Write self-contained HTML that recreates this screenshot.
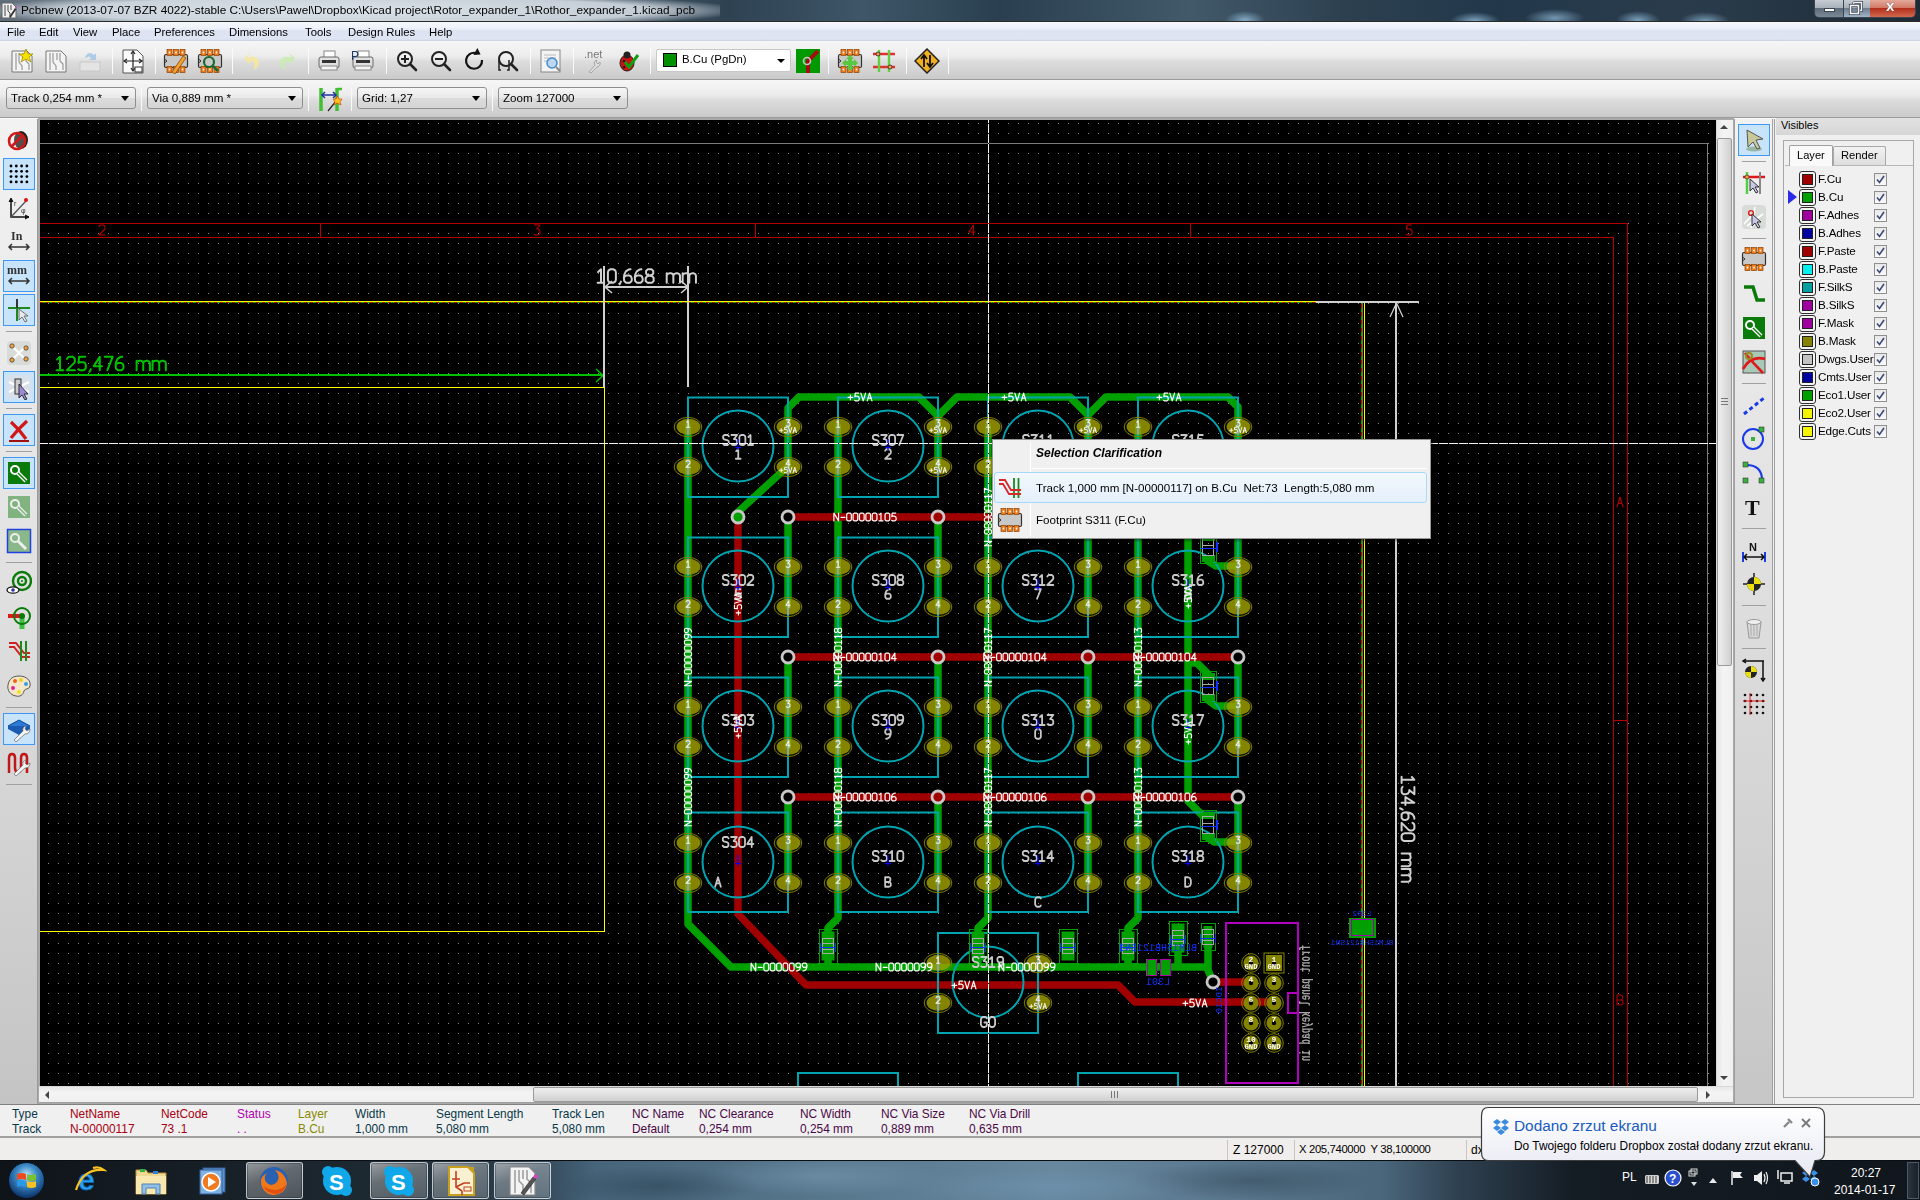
<!DOCTYPE html><html><head><meta charset="utf-8"><style>
*{margin:0;padding:0;box-sizing:border-box}
html,body{width:1920px;height:1200px;overflow:hidden;background:#f0f0f0;font-family:"Liberation Sans",sans-serif;}
.a{position:absolute}
#title{left:0;top:0;width:1920px;height:21px;background:radial-gradient(ellipse 20px 9px at 1245px 20px,rgba(150,190,220,0.8),transparent),radial-gradient(ellipse 25px 9px at 1475px 21px,rgba(150,190,220,0.8),transparent),radial-gradient(ellipse 30px 9px at 1555px 18px,rgba(150,190,220,0.7),transparent),radial-gradient(ellipse 22px 9px at 1638px 20px,rgba(150,190,220,0.75),transparent),radial-gradient(ellipse 25px 9px at 1705px 21px,rgba(150,190,220,0.7),transparent),linear-gradient(90deg,#5e6d79 0%,#8a98a3 10%,#62727e 25%,#2e4252 38%,#3e5668 45%,#2a4050 52%,#42596a 62%,#2c4050 70%,#22384a 78%,#2a3c4c 88%,#1e2b36 100%);}
#title .t{left:21px;top:3px;font-size:11.8px;color:#000;white-space:nowrap;letter-spacing:-0.1px}
#titleglow{left:0;top:0;width:720px;height:21px;background:radial-gradient(ellipse 54% 85% at 50% 50%,rgba(225,232,238,0.95) 0%,rgba(210,218,226,0.9) 75%,rgba(200,210,220,0) 100%)}
#menubar{left:0;top:21px;width:1920px;height:20px;background:linear-gradient(#f6f8fc 0%,#eef2fa 30%,#dde3f2 50%,#dfe5f3 90%,#c8d0e0 100%);border-top:1px solid #2a2a2a}
#menubar span{position:absolute;top:4px;font-size:11.3px;color:#000}
.tb{left:0;width:1920px;background:linear-gradient(#f6f6f6 0%,#ececec 40%,#dcdcdc 55%,#cacaca 100%);border-bottom:1px solid #9c9c9c}
.sep{position:absolute;width:1px;background:#b8b8b8;border-right:1px solid #fafafa}
.combo{position:absolute;height:22px;border:1px solid #8e8f8f;border-radius:3px;background:linear-gradient(#f6f6f6 0%,#e8e8e8 50%,#dcdcdc 51%,#d4d4d4 100%);font-size:11.6px;color:#000;padding:3px 0 0 4px;white-space:nowrap}
.combo .arr{position:absolute;right:6px;top:8px;width:0;height:0;border-left:4px solid transparent;border-right:4px solid transparent;border-top:5px solid #000}
#lefttb{left:0;top:119px;width:38px;height:985px;background:linear-gradient(#f2f2f2 0%,#e4e4e4 40%,#c4c4c4 100%);border-right:1px solid #9a9a9a}
.btnsel{position:absolute;left:3px;width:32px;height:32px;background:#c8e4fb;border:1px solid #3d99f5}
.hsep{position:absolute;height:1px;background:#a0a0a0}
#righttb{left:1734px;top:119px;width:39px;height:985px;background:linear-gradient(#f2f2f2 0%,#e2e2e2 40%,#c6c6c6 100%);border-left:1px solid #a0a0a0;border-right:1px solid #a0a0a0}
#visibles{left:1774px;top:119px;width:146px;height:986px;background:#f0f0f0;border-left:1px solid #a0a0a0}
#msgpanel{left:0;top:1104px;width:1920px;height:34px;background:#f0f0f0;border-top:1px solid #808080;border-bottom:2px solid #a0a0a0}
#msgpanel span{position:absolute;font-size:12.2px;white-space:nowrap}
#status{left:0;top:1138px;width:1920px;height:22px;background:#f0eeec}
#status span{position:absolute;top:4px;font-size:12.2px;white-space:nowrap;color:#000}
#taskbar{left:0;top:1160px;width:1920px;height:40px;background:linear-gradient(90deg,#0e1318 0%,#161e25 10%,#1e2a33 20%,#2c3e4c 27%,#46647a 31%,#5a7a90 45%,#6888a0 55%,#58768c 65%,#4a667a 72%,#2e4050 76%,#141c24 82%,#10161c 100%);border-top:1px solid #0a0e12}
.tbtn{position:absolute;top:1px;height:38px;border:1px solid rgba(230,240,250,0.7);border-radius:3px;box-shadow:inset 0 0 0 1px rgba(0,0,0,0.25);background:linear-gradient(160deg,rgba(255,255,255,0.55),rgba(255,255,255,0.32) 40%,rgba(255,255,255,0.22))}
</style></head><body>
<div id="title" class="a"></div>
<div id="titleglow" class="a"></div>
<div class="a" style="left:0;top:0;width:1920px;height:21px"><div class="a t" style="left:21px;top:3px;font-size:11.8px;white-space:nowrap">Pcbnew (2013-07-07 BZR 4022)-stable C:\Users\Pawel\Dropbox\Kicad project\Rotor_expander_1\Rothor_expander_1.kicad_pcb</div></div>
<svg class="a" style="left:1px;top:2px" width="16" height="17" viewBox="0 0 16 17"><path d="M1 1H11L15 5V16H1Z" fill="#f0f0f0" stroke="#666"/><path d="M4 3V14M7 3V9L9 11V14M10 3V8" fill="none" stroke="#444" stroke-width="1"/><path d="M8 15L14 6L15.5 7L9.5 16Z" fill="#333"/><path d="M14 6L15 4L16 5L15.5 7Z" fill="#e040c0"/></svg>
<div class="a" style="left:1814px;top:0;width:102px;height:18px;border:1px solid #3a4550;border-top:none;border-radius:0 0 5px 5px;overflow:hidden"><div class="a" style="left:0;top:0;width:28px;height:17px;background:linear-gradient(#c7ccd2,#a9b2bb 45%,#5f6c78 50%,#7b8996)"></div><div class="a" style="left:28px;top:0;width:1px;height:17px;background:#3a4550"></div><div class="a" style="left:29px;top:0;width:26px;height:17px;background:linear-gradient(#c7ccd2,#a9b2bb 45%,#6f7f8e 50%,#9fb4c8)"></div><div class="a" style="left:55px;top:0;width:47px;height:17px;background:linear-gradient(#e3a89a,#d27a66 45%,#b5301c 50%,#d0694f)"></div><div class="a" style="left:9px;top:8px;width:11px;height:4px;background:#fff;border:1px solid #3b4754"></div><svg class="a" style="left:33px;top:1px" width="16" height="14" viewBox="0 0 16 14"><path d="M5.5 1.5H13.5V9.5H11.5M5.5 1.5V4.5" fill="none" stroke="#3b4754" stroke-width="3"/><path d="M5.5 1.5H13.5V9.5H11.5M5.5 1.5V4.5" fill="none" stroke="#f4f4f4" stroke-width="1.4"/><rect x="2.5" y="4.5" width="8" height="8" fill="none" stroke="#3b4754" stroke-width="3.2"/><rect x="2.5" y="4.5" width="8" height="8" fill="none" stroke="#f4f4f4" stroke-width="1.6"/></svg><div class="a" style="left:71px;top:-3px;font-size:15px;font-weight:bold;color:#fff;text-shadow:0 0 1px #333">x</div></div>
<div id="menubar" class="a">
<span style="left:7px">File</span>
<span style="left:39px">Edit</span>
<span style="left:73px">View</span>
<span style="left:112px">Place</span>
<span style="left:154px">Preferences</span>
<span style="left:229px">Dimensions</span>
<span style="left:305px">Tools</span>
<span style="left:348px">Design Rules</span>
<span style="left:429px">Help</span>
</div>
<div class="a tb" style="top:41px;height:39px"></div>
<div class="a tb" style="top:80px;height:38px"></div><div class="a" style="left:0;top:118px;width:1920px;height:1px;background:#f8f8f8"></div>
<div class="a" style="left:38px;top:118px;width:1696px;height:986px;background:#a9a9a9"></div>
<svg class="a" style="left:40px;top:120px" width="1676" height="966" viewBox="40 120 1676 966">
<defs><pattern id="grid" patternUnits="userSpaceOnUse" x="48" y="123" width="10" height="10"><rect x="0" y="0" width="1" height="1" fill="#868686"/></pattern><pattern id="rgh" patternUnits="userSpaceOnUse" x="40" y="302" width="6" height="1"><rect x="0" y="0" width="3" height="1" fill="#c00000"/><rect x="3" y="0" width="3" height="1" fill="#00b000"/></pattern><pattern id="rgv" patternUnits="userSpaceOnUse" x="1361" y="300" width="1" height="8"><rect x="0" y="0" width="1" height="4" fill="#00b000"/><rect x="0" y="4" width="1" height="4" fill="#c00000"/></pattern></defs>
<rect x="40" y="120" width="1676" height="966" fill="#000"/>
<rect x="40" y="120" width="1676" height="966" fill="url(#grid)"/>
<path shape-rendering="crispEdges" d="M40 143.5H1707.5V1086" fill="none" stroke="#7c7c7c" stroke-width="1"/>
<path shape-rendering="crispEdges" d="M40 223.5H1627.5V1086M40 237.5H1613.5V1086" fill="none" stroke="#b40000" stroke-width="1"/>
<path shape-rendering="crispEdges" d="M320.5 223V237" stroke="#b40000" stroke-width="1"/>
<path shape-rendering="crispEdges" d="M755.5 223V237" stroke="#b40000" stroke-width="1"/>
<path shape-rendering="crispEdges" d="M1190.5 223V237" stroke="#b40000" stroke-width="1"/>
<path shape-rendering="crispEdges" d="M1613 720.5H1627" stroke="#b40000" stroke-width="1"/>
<path transform="translate(102 230) scale(1.0 1.0) translate(-3.00 -5)" d="M0.00 1.50 L1.00 0.20 L2.00 0.00 L4.50 0.00 L5.70 1.00 L6.00 2.20 L6.00 3.50 L5.50 4.50 L0.00 10.00 L6.00 10.00" fill="none" stroke="#b40000" stroke-width="1.100" stroke-linecap="round" stroke-linejoin="round" />
<path transform="translate(537 230) scale(1.0 1.0) translate(-3.00 -5)" d="M0.30 0.00 L6.00 0.00 L2.80 4.00 L4.00 4.00 L5.50 5.00 L6.00 6.50 L6.00 8.50 L5.00 9.70 L4.00 10.00 L1.50 10.00 L0.30 9.30" fill="none" stroke="#b40000" stroke-width="1.100" stroke-linecap="round" stroke-linejoin="round" />
<path transform="translate(972 230) scale(1.0 1.0) translate(-3.10 -5)" d="M4.50 10.00 L4.50 0.00 L0.00 7.00 L6.20 7.00" fill="none" stroke="#b40000" stroke-width="1.100" stroke-linecap="round" stroke-linejoin="round" />
<path transform="translate(1409 230) scale(1.0 1.0) translate(-3.00 -5)" d="M5.50 0.00 L1.00 0.00 L0.50 4.50 L1.50 4.00 L4.00 4.00 L5.50 4.80 L6.00 6.20 L6.00 8.50 L5.00 9.70 L4.00 10.00 L1.50 10.00 L0.30 9.30" fill="none" stroke="#b40000" stroke-width="1.100" stroke-linecap="round" stroke-linejoin="round" />
<path transform="translate(1620 502) scale(1.0 1.0) translate(-3.00 -5)" d="M0.00 10.00 L3.00 0.00 L6.00 10.00 M1.10 6.50 L4.90 6.50" fill="none" stroke="#b40000" stroke-width="1.100" stroke-linecap="round" stroke-linejoin="round" />
<path transform="translate(1620 1000) scale(1.0 1.0) translate(-3.00 -5)" d="M0.00 5.00 L4.00 5.00 L5.50 5.80 L6.00 7.00 L6.00 8.50 L5.00 9.70 L4.00 10.00 L0.00 10.00 L0.00 0.00 L4.00 0.00 L5.00 0.50 L5.50 1.50 L5.50 3.30 L5.00 4.30 L4.00 5.00" fill="none" stroke="#b40000" stroke-width="1.100" stroke-linecap="round" stroke-linejoin="round" />
<rect shape-rendering="crispEdges" x="40" y="301" width="1324" height="1" fill="#ffff00"/>
<rect shape-rendering="crispEdges" x="40" y="302" width="1321" height="1" fill="url(#rgh)"/>
<rect shape-rendering="crispEdges" x="1364" y="301" width="1" height="785" fill="#ffff00"/>
<rect shape-rendering="crispEdges" x="1362" y="302" width="1" height="784" fill="#808000"/>
<rect shape-rendering="crispEdges" x="1361" y="303" width="1" height="783" fill="url(#rgv)"/>
<path shape-rendering="crispEdges" d="M40 387.5H604.5V931.5H40" fill="none" stroke="#ffff00" stroke-width="1.2"/>
<path shape-rendering="crispEdges" d="M40 375H603" stroke="#00c000" stroke-width="2"/>
<path d="M596 369L603 375.5L596 382" fill="none" stroke="#00c000" stroke-width="1.5"/>
<path transform="translate(56 363.5) scale(1.33 1.33) translate(0.00 -5)" d="M0.80 2.00 L3.00 0.00 L3.00 10.00 M0.50 10.00 L5.50 10.00 M8.20 1.50 L9.20 0.20 L10.20 0.00 L12.70 0.00 L13.90 1.00 L14.20 2.20 L14.20 3.50 L13.70 4.50 L8.20 10.00 L14.20 10.00 M21.90 0.00 L17.40 0.00 L16.90 4.50 L17.90 4.00 L20.40 4.00 L21.90 4.80 L22.40 6.20 L22.40 8.50 L21.40 9.70 L20.40 10.00 L17.90 10.00 L16.70 9.30 M26.20 9.20 L25.20 11.20 M32.90 10.00 L32.90 0.00 L28.40 7.00 L34.60 7.00 M36.60 0.00 L42.60 0.00 L38.60 10.00 M49.80 0.00 L48.30 0.20 L46.30 1.50 L45.10 4.00 L44.80 6.50 L45.10 8.80 L46.30 10.00 L49.30 10.00 L50.60 8.80 L50.80 7.20 L50.30 5.50 L49.10 4.60 L46.60 4.60 L45.30 5.50 L44.80 6.50 M60.60 10.00 L60.60 3.00 M60.60 4.30 L61.80 3.20 L62.80 3.00 L64.10 3.00 L65.10 3.50 L65.60 4.50 L65.60 10.00 M65.60 4.50 L66.40 3.40 L67.60 3.00 L68.90 3.00 L70.10 3.60 L70.60 4.80 L70.60 10.00 M72.60 10.00 L72.60 3.00 M72.60 4.30 L73.80 3.20 L74.80 3.00 L76.10 3.00 L77.10 3.50 L77.60 4.50 L77.60 10.00 M77.60 4.50 L78.40 3.40 L79.60 3.00 L80.90 3.00 L82.10 3.60 L82.60 4.80 L82.60 10.00" fill="none" stroke="#00c000" stroke-width="1.504" stroke-linecap="round" stroke-linejoin="round" />
<path shape-rendering="crispEdges" d="M604 266V387M688 266V387M605 287H688" fill="none" stroke="#d0d0d0" stroke-width="2"/>
<path d="M612 281L605 287L612 293M681 281L688 287L681 293" fill="none" stroke="#d0d0d0" stroke-width="1.6"/>
<path transform="translate(597 276) scale(1.33 1.33) translate(0.00 -5)" d="M0.80 2.00 L3.00 0.00 L3.00 10.00 M0.50 10.00 L5.50 10.00 M10.00 0.00 L12.40 0.00 L13.70 0.80 L14.20 2.20 L14.20 7.80 L13.70 9.20 L12.40 10.00 L10.00 10.00 L8.70 9.20 L8.20 7.80 L8.20 2.20 L8.70 0.80 L10.00 0.00 M18.00 9.20 L17.00 11.20 M25.20 0.00 L23.70 0.20 L21.70 1.50 L20.50 4.00 L20.20 6.50 L20.50 8.80 L21.70 10.00 L24.70 10.00 L26.00 8.80 L26.20 7.20 L25.70 5.50 L24.50 4.60 L22.00 4.60 L20.70 5.50 L20.20 6.50 M33.40 0.00 L31.90 0.20 L29.90 1.50 L28.70 4.00 L28.40 6.50 L28.70 8.80 L29.90 10.00 L32.90 10.00 L34.20 8.80 L34.40 7.20 L33.90 5.50 L32.70 4.60 L30.20 4.60 L28.90 5.50 L28.40 6.50 M39.60 4.60 L37.60 4.00 L36.90 3.00 L36.90 1.20 L38.10 0.00 L41.10 0.00 L42.30 1.20 L42.30 3.00 L41.60 4.00 L39.60 4.60 L37.60 5.30 L36.60 6.50 L36.60 8.80 L37.80 10.00 L41.40 10.00 L42.60 8.80 L42.60 6.50 L41.60 5.30 L39.60 4.60 M52.40 10.00 L52.40 3.00 M52.40 4.30 L53.60 3.20 L54.60 3.00 L55.90 3.00 L56.90 3.50 L57.40 4.50 L57.40 10.00 M57.40 4.50 L58.20 3.40 L59.40 3.00 L60.70 3.00 L61.90 3.60 L62.40 4.80 L62.40 10.00 M64.40 10.00 L64.40 3.00 M64.40 4.30 L65.60 3.20 L66.60 3.00 L67.90 3.00 L68.90 3.50 L69.40 4.50 L69.40 10.00 M69.40 4.50 L70.20 3.40 L71.40 3.00 L72.70 3.00 L73.90 3.60 L74.40 4.80 L74.40 10.00" fill="none" stroke="#d0d0d0" stroke-width="1.504" stroke-linecap="round" stroke-linejoin="round" />
<path shape-rendering="crispEdges" d="M1316 301.5H1419M1396 302V1086" fill="none" stroke="#d0d0d0" stroke-width="2"/>
<path d="M1390 317L1396.5 303L1403 317" fill="none" stroke="#d0d0d0" stroke-width="1.3"/>
<path transform="translate(1408 776) rotate(90) scale(1.28 1.28) translate(0.00 -5)" d="M0.80 2.00 L3.00 0.00 L3.00 10.00 M0.50 10.00 L5.50 10.00 M8.50 0.00 L14.20 0.00 L11.00 4.00 L12.20 4.00 L13.70 5.00 L14.20 6.50 L14.20 8.50 L13.20 9.70 L12.20 10.00 L9.70 10.00 L8.50 9.30 M20.90 10.00 L20.90 0.00 L16.40 7.00 L22.60 7.00 M26.20 9.20 L25.20 11.20 M33.40 0.00 L31.90 0.20 L29.90 1.50 L28.70 4.00 L28.40 6.50 L28.70 8.80 L29.90 10.00 L32.90 10.00 L34.20 8.80 L34.40 7.20 L33.90 5.50 L32.70 4.60 L30.20 4.60 L28.90 5.50 L28.40 6.50 M36.60 1.50 L37.60 0.20 L38.60 0.00 L41.10 0.00 L42.30 1.00 L42.60 2.20 L42.60 3.50 L42.10 4.50 L36.60 10.00 L42.60 10.00 M46.60 0.00 L49.00 0.00 L50.30 0.80 L50.80 2.20 L50.80 7.80 L50.30 9.20 L49.00 10.00 L46.60 10.00 L45.30 9.20 L44.80 7.80 L44.80 2.20 L45.30 0.80 L46.60 0.00 M60.60 10.00 L60.60 3.00 M60.60 4.30 L61.80 3.20 L62.80 3.00 L64.10 3.00 L65.10 3.50 L65.60 4.50 L65.60 10.00 M65.60 4.50 L66.40 3.40 L67.60 3.00 L68.90 3.00 L70.10 3.60 L70.60 4.80 L70.60 10.00 M72.60 10.00 L72.60 3.00 M72.60 4.30 L73.80 3.20 L74.80 3.00 L76.10 3.00 L77.10 3.50 L77.60 4.50 L77.60 10.00 M77.60 4.50 L78.40 3.40 L79.60 3.00 L80.90 3.00 L82.10 3.60 L82.60 4.80 L82.60 10.00" fill="none" stroke="#d0d0d0" stroke-width="1.562" stroke-linecap="round" stroke-linejoin="round" />
<path d="M688 426V924L731 967H1208 M788 466V408L799 397H919L938 416L957 397H1070L1088 415L1106 397H1228L1238 407V466 M938 416V466M1088 415V466 M786 468L738 512V517 M788 517V606M788 657V746M788 797V882 M938 517V606M938 657V746M938 797V882 M1088 517V606M1088 657V746M1088 797V882 M1238 517V606M1238 657V746M1238 797V882 M838 426V918L828 928V967 M988 426V918L978 928V967 M1138 426V918L1128 928V967 M1188 520V801L1202 815 M1188 523H1197L1208 534M1208 561L1216 566H1238 M1188 663H1197L1208 674M1208 700L1216 706H1238 M1208 838L1214 842H1238 M1178 938V967M1208 938V970L1213 982" fill="none" stroke="#00a000" stroke-width="7.5" stroke-linecap="round" stroke-linejoin="round"/>
<path d="M738 517V914L806 985H1118L1135 1002H1273 M788 517H1238 M788 657H1238 M788 797H1238 M1213 982H1250" fill="none" stroke="#a00000" stroke-width="7.5" stroke-linecap="round" stroke-linejoin="round"/>
<path d="M688 397.5H788V497H688Z M773.5 446A35.5 35.5 0 1 1 702.5 446A35.5 35.5 0 1 1 773.5 446Z M688 537.5H788V637H688Z M773.5 586A35.5 35.5 0 1 1 702.5 586A35.5 35.5 0 1 1 773.5 586Z M688 677.5H788V777H688Z M773.5 726A35.5 35.5 0 1 1 702.5 726A35.5 35.5 0 1 1 773.5 726Z M688 812.5H788V912H688Z M773.5 862A35.5 35.5 0 1 1 702.5 862A35.5 35.5 0 1 1 773.5 862Z M838 397.5H938V497H838Z M923.5 446A35.5 35.5 0 1 1 852.5 446A35.5 35.5 0 1 1 923.5 446Z M838 537.5H938V637H838Z M923.5 586A35.5 35.5 0 1 1 852.5 586A35.5 35.5 0 1 1 923.5 586Z M838 677.5H938V777H838Z M923.5 726A35.5 35.5 0 1 1 852.5 726A35.5 35.5 0 1 1 923.5 726Z M838 812.5H938V912H838Z M923.5 862A35.5 35.5 0 1 1 852.5 862A35.5 35.5 0 1 1 923.5 862Z M988 397.5H1088V497H988Z M1073.5 446A35.5 35.5 0 1 1 1002.5 446A35.5 35.5 0 1 1 1073.5 446Z M988 537.5H1088V637H988Z M1073.5 586A35.5 35.5 0 1 1 1002.5 586A35.5 35.5 0 1 1 1073.5 586Z M988 677.5H1088V777H988Z M1073.5 726A35.5 35.5 0 1 1 1002.5 726A35.5 35.5 0 1 1 1073.5 726Z M988 812.5H1088V912H988Z M1073.5 862A35.5 35.5 0 1 1 1002.5 862A35.5 35.5 0 1 1 1073.5 862Z M1138 397.5H1238V497H1138Z M1223.5 446A35.5 35.5 0 1 1 1152.5 446A35.5 35.5 0 1 1 1223.5 446Z M1138 537.5H1238V637H1138Z M1223.5 586A35.5 35.5 0 1 1 1152.5 586A35.5 35.5 0 1 1 1223.5 586Z M1138 677.5H1238V777H1138Z M1223.5 726A35.5 35.5 0 1 1 1152.5 726A35.5 35.5 0 1 1 1223.5 726Z M1138 812.5H1238V912H1138Z M1223.5 862A35.5 35.5 0 1 1 1152.5 862A35.5 35.5 0 1 1 1223.5 862Z M938 933H1038V1033H938Z M1023.5 982A35.5 35.5 0 1 1 952.5 982A35.5 35.5 0 1 1 1023.5 982Z M798 1086V1073H898V1086M1078 1086V1073H1178V1086" fill="none" stroke="#00a4b0" stroke-width="2"/>
<g fill="#848400" style="mix-blend-mode:lighten"><ellipse cx="688.5" cy="426.8" rx="12" ry="8"/><ellipse cx="688.5" cy="466.8" rx="12" ry="8"/><ellipse cx="788.5" cy="426.8" rx="12" ry="8"/><ellipse cx="788.5" cy="466.8" rx="12" ry="8"/><ellipse cx="688.5" cy="566.8" rx="12" ry="8"/><ellipse cx="688.5" cy="606.8" rx="12" ry="8"/><ellipse cx="788.5" cy="566.8" rx="12" ry="8"/><ellipse cx="788.5" cy="606.8" rx="12" ry="8"/><ellipse cx="688.5" cy="706.8" rx="12" ry="8"/><ellipse cx="688.5" cy="746.8" rx="12" ry="8"/><ellipse cx="788.5" cy="706.8" rx="12" ry="8"/><ellipse cx="788.5" cy="746.8" rx="12" ry="8"/><ellipse cx="688.5" cy="842.8" rx="12" ry="8"/><ellipse cx="688.5" cy="882.8" rx="12" ry="8"/><ellipse cx="788.5" cy="842.8" rx="12" ry="8"/><ellipse cx="788.5" cy="882.8" rx="12" ry="8"/><ellipse cx="838.5" cy="426.8" rx="12" ry="8"/><ellipse cx="838.5" cy="466.8" rx="12" ry="8"/><ellipse cx="938.5" cy="426.8" rx="12" ry="8"/><ellipse cx="938.5" cy="466.8" rx="12" ry="8"/><ellipse cx="838.5" cy="566.8" rx="12" ry="8"/><ellipse cx="838.5" cy="606.8" rx="12" ry="8"/><ellipse cx="938.5" cy="566.8" rx="12" ry="8"/><ellipse cx="938.5" cy="606.8" rx="12" ry="8"/><ellipse cx="838.5" cy="706.8" rx="12" ry="8"/><ellipse cx="838.5" cy="746.8" rx="12" ry="8"/><ellipse cx="938.5" cy="706.8" rx="12" ry="8"/><ellipse cx="938.5" cy="746.8" rx="12" ry="8"/><ellipse cx="838.5" cy="842.8" rx="12" ry="8"/><ellipse cx="838.5" cy="882.8" rx="12" ry="8"/><ellipse cx="938.5" cy="842.8" rx="12" ry="8"/><ellipse cx="938.5" cy="882.8" rx="12" ry="8"/><ellipse cx="988.5" cy="426.8" rx="12" ry="8"/><ellipse cx="988.5" cy="466.8" rx="12" ry="8"/><ellipse cx="1088.5" cy="426.8" rx="12" ry="8"/><ellipse cx="1088.5" cy="466.8" rx="12" ry="8"/><ellipse cx="988.5" cy="566.8" rx="12" ry="8"/><ellipse cx="988.5" cy="606.8" rx="12" ry="8"/><ellipse cx="1088.5" cy="566.8" rx="12" ry="8"/><ellipse cx="1088.5" cy="606.8" rx="12" ry="8"/><ellipse cx="988.5" cy="706.8" rx="12" ry="8"/><ellipse cx="988.5" cy="746.8" rx="12" ry="8"/><ellipse cx="1088.5" cy="706.8" rx="12" ry="8"/><ellipse cx="1088.5" cy="746.8" rx="12" ry="8"/><ellipse cx="988.5" cy="842.8" rx="12" ry="8"/><ellipse cx="988.5" cy="882.8" rx="12" ry="8"/><ellipse cx="1088.5" cy="842.8" rx="12" ry="8"/><ellipse cx="1088.5" cy="882.8" rx="12" ry="8"/><ellipse cx="1138.5" cy="426.8" rx="12" ry="8"/><ellipse cx="1138.5" cy="466.8" rx="12" ry="8"/><ellipse cx="1238.5" cy="426.8" rx="12" ry="8"/><ellipse cx="1238.5" cy="466.8" rx="12" ry="8"/><ellipse cx="1138.5" cy="566.8" rx="12" ry="8"/><ellipse cx="1138.5" cy="606.8" rx="12" ry="8"/><ellipse cx="1238.5" cy="566.8" rx="12" ry="8"/><ellipse cx="1238.5" cy="606.8" rx="12" ry="8"/><ellipse cx="1138.5" cy="706.8" rx="12" ry="8"/><ellipse cx="1138.5" cy="746.8" rx="12" ry="8"/><ellipse cx="1238.5" cy="706.8" rx="12" ry="8"/><ellipse cx="1238.5" cy="746.8" rx="12" ry="8"/><ellipse cx="1138.5" cy="842.8" rx="12" ry="8"/><ellipse cx="1138.5" cy="882.8" rx="12" ry="8"/><ellipse cx="1238.5" cy="842.8" rx="12" ry="8"/><ellipse cx="1238.5" cy="882.8" rx="12" ry="8"/><ellipse cx="938.5" cy="962.8" rx="12" ry="8"/><ellipse cx="938.5" cy="1002.8" rx="12" ry="8"/><ellipse cx="1038.5" cy="962.8" rx="12" ry="8"/><ellipse cx="1038.5" cy="1002.8" rx="12" ry="8"/></g>
<g fill="none" stroke="#848400" stroke-width="1"><ellipse cx="688" cy="427" rx="13.8" ry="9.6"/><ellipse cx="688" cy="467" rx="13.8" ry="9.6"/><ellipse cx="788" cy="427" rx="13.8" ry="9.6"/><ellipse cx="788" cy="467" rx="13.8" ry="9.6"/><ellipse cx="688" cy="567" rx="13.8" ry="9.6"/><ellipse cx="688" cy="607" rx="13.8" ry="9.6"/><ellipse cx="788" cy="567" rx="13.8" ry="9.6"/><ellipse cx="788" cy="607" rx="13.8" ry="9.6"/><ellipse cx="688" cy="707" rx="13.8" ry="9.6"/><ellipse cx="688" cy="747" rx="13.8" ry="9.6"/><ellipse cx="788" cy="707" rx="13.8" ry="9.6"/><ellipse cx="788" cy="747" rx="13.8" ry="9.6"/><ellipse cx="688" cy="843" rx="13.8" ry="9.6"/><ellipse cx="688" cy="883" rx="13.8" ry="9.6"/><ellipse cx="788" cy="843" rx="13.8" ry="9.6"/><ellipse cx="788" cy="883" rx="13.8" ry="9.6"/><ellipse cx="838" cy="427" rx="13.8" ry="9.6"/><ellipse cx="838" cy="467" rx="13.8" ry="9.6"/><ellipse cx="938" cy="427" rx="13.8" ry="9.6"/><ellipse cx="938" cy="467" rx="13.8" ry="9.6"/><ellipse cx="838" cy="567" rx="13.8" ry="9.6"/><ellipse cx="838" cy="607" rx="13.8" ry="9.6"/><ellipse cx="938" cy="567" rx="13.8" ry="9.6"/><ellipse cx="938" cy="607" rx="13.8" ry="9.6"/><ellipse cx="838" cy="707" rx="13.8" ry="9.6"/><ellipse cx="838" cy="747" rx="13.8" ry="9.6"/><ellipse cx="938" cy="707" rx="13.8" ry="9.6"/><ellipse cx="938" cy="747" rx="13.8" ry="9.6"/><ellipse cx="838" cy="843" rx="13.8" ry="9.6"/><ellipse cx="838" cy="883" rx="13.8" ry="9.6"/><ellipse cx="938" cy="843" rx="13.8" ry="9.6"/><ellipse cx="938" cy="883" rx="13.8" ry="9.6"/><ellipse cx="988" cy="427" rx="13.8" ry="9.6"/><ellipse cx="988" cy="467" rx="13.8" ry="9.6"/><ellipse cx="1088" cy="427" rx="13.8" ry="9.6"/><ellipse cx="1088" cy="467" rx="13.8" ry="9.6"/><ellipse cx="988" cy="567" rx="13.8" ry="9.6"/><ellipse cx="988" cy="607" rx="13.8" ry="9.6"/><ellipse cx="1088" cy="567" rx="13.8" ry="9.6"/><ellipse cx="1088" cy="607" rx="13.8" ry="9.6"/><ellipse cx="988" cy="707" rx="13.8" ry="9.6"/><ellipse cx="988" cy="747" rx="13.8" ry="9.6"/><ellipse cx="1088" cy="707" rx="13.8" ry="9.6"/><ellipse cx="1088" cy="747" rx="13.8" ry="9.6"/><ellipse cx="988" cy="843" rx="13.8" ry="9.6"/><ellipse cx="988" cy="883" rx="13.8" ry="9.6"/><ellipse cx="1088" cy="843" rx="13.8" ry="9.6"/><ellipse cx="1088" cy="883" rx="13.8" ry="9.6"/><ellipse cx="1138" cy="427" rx="13.8" ry="9.6"/><ellipse cx="1138" cy="467" rx="13.8" ry="9.6"/><ellipse cx="1238" cy="427" rx="13.8" ry="9.6"/><ellipse cx="1238" cy="467" rx="13.8" ry="9.6"/><ellipse cx="1138" cy="567" rx="13.8" ry="9.6"/><ellipse cx="1138" cy="607" rx="13.8" ry="9.6"/><ellipse cx="1238" cy="567" rx="13.8" ry="9.6"/><ellipse cx="1238" cy="607" rx="13.8" ry="9.6"/><ellipse cx="1138" cy="707" rx="13.8" ry="9.6"/><ellipse cx="1138" cy="747" rx="13.8" ry="9.6"/><ellipse cx="1238" cy="707" rx="13.8" ry="9.6"/><ellipse cx="1238" cy="747" rx="13.8" ry="9.6"/><ellipse cx="1138" cy="843" rx="13.8" ry="9.6"/><ellipse cx="1138" cy="883" rx="13.8" ry="9.6"/><ellipse cx="1238" cy="843" rx="13.8" ry="9.6"/><ellipse cx="1238" cy="883" rx="13.8" ry="9.6"/><ellipse cx="938" cy="963" rx="13.8" ry="9.6"/><ellipse cx="938" cy="1003" rx="13.8" ry="9.6"/><ellipse cx="1038" cy="963" rx="13.8" ry="9.6"/><ellipse cx="1038" cy="1003" rx="13.8" ry="9.6"/></g>
<rect x="821.5" y="931.5" width="13" height="29" fill="#00a000"/>
<rect shape-rendering="crispEdges" x="819.0" y="929.0" width="18" height="34" fill="none" stroke="#00a000" stroke-width="1"/>
<path shape-rendering="crispEdges" d="M822.5 938.5H833.5V953.5H822.5ZM822.5 943H833.5M822.5 949H833.5" fill="none" stroke="#a8a8a8" stroke-width="1"/>
<path shape-rendering="crispEdges" d="M820.5 943V952M835.5 943V952M821 947.5H835" fill="none" stroke="#1030ff" stroke-width="1.5"/>
<rect x="971.5" y="931.5" width="13" height="29" fill="#00a000"/>
<rect shape-rendering="crispEdges" x="969.0" y="929.0" width="18" height="34" fill="none" stroke="#00a000" stroke-width="1"/>
<path shape-rendering="crispEdges" d="M972.5 938.5H983.5V953.5H972.5ZM972.5 943H983.5M972.5 949H983.5" fill="none" stroke="#a8a8a8" stroke-width="1"/>
<path shape-rendering="crispEdges" d="M970.5 943V952M985.5 943V952M971 947.5H985" fill="none" stroke="#1030ff" stroke-width="1.5"/>
<rect x="1061.5" y="931.5" width="13" height="29" fill="#00a000"/>
<rect shape-rendering="crispEdges" x="1059.0" y="929.0" width="18" height="34" fill="none" stroke="#00a000" stroke-width="1"/>
<path shape-rendering="crispEdges" d="M1062.5 938.5H1073.5V953.5H1062.5ZM1062.5 943H1073.5M1062.5 949H1073.5" fill="none" stroke="#a8a8a8" stroke-width="1"/>
<path shape-rendering="crispEdges" d="M1060.5 943V952M1075.5 943V952M1061 947.5H1075" fill="none" stroke="#1030ff" stroke-width="1.5"/>
<rect x="1121.5" y="931.5" width="13" height="29" fill="#00a000"/>
<rect shape-rendering="crispEdges" x="1119.0" y="929.0" width="18" height="34" fill="none" stroke="#00a000" stroke-width="1"/>
<path shape-rendering="crispEdges" d="M1122.5 938.5H1133.5V953.5H1122.5ZM1122.5 943H1133.5M1122.5 949H1133.5" fill="none" stroke="#a8a8a8" stroke-width="1"/>
<path shape-rendering="crispEdges" d="M1120.5 943V952M1135.5 943V952M1121 947.5H1135" fill="none" stroke="#1030ff" stroke-width="1.5"/>
<rect x="1171.5" y="923.5" width="13" height="29" fill="#00a000"/>
<rect shape-rendering="crispEdges" x="1169.0" y="921.0" width="18" height="34" fill="none" stroke="#00a000" stroke-width="1"/>
<path shape-rendering="crispEdges" d="M1172.5 930.5H1183.5V945.5H1172.5ZM1172.5 935H1183.5M1172.5 941H1183.5" fill="none" stroke="#a8a8a8" stroke-width="1"/>
<path shape-rendering="crispEdges" d="M1170.5 935V944M1185.5 935V944M1171 939.5H1185" fill="none" stroke="#1030ff" stroke-width="1.5"/>
<rect x="1203.5" y="926.0" width="9" height="22" fill="#00a000"/>
<rect shape-rendering="crispEdges" x="1201.0" y="923.5" width="14" height="27" fill="none" stroke="#00a000" stroke-width="1"/>
<path shape-rendering="crispEdges" d="M1202.5 929.5H1213.5V944.5H1202.5ZM1202.5 934H1213.5M1202.5 940H1213.5" fill="none" stroke="#a8a8a8" stroke-width="1"/>
<path shape-rendering="crispEdges" d="M1200.5 934V943M1215.5 934V943M1201 938.5H1215" fill="none" stroke="#1030ff" stroke-width="1.5"/>
<rect x="1202" y="534" width="13" height="7" fill="#00a000"/><rect x="1202" y="555" width="13" height="7" fill="#00a000"/>
<rect shape-rendering="crispEdges" x="1200.5" y="532.5" width="16" height="31" fill="none" stroke="#00a000" stroke-width="1"/>
<path shape-rendering="crispEdges" d="M1202.5 538.5H1213.5V555.5H1202.5ZM1202.5 545.5H1213.5" fill="none" stroke="#a8a8a8" stroke-width="1"/>
<path shape-rendering="crispEdges" d="M1217 542V552M1201 548.5H1217" fill="none" stroke="#1030ff" stroke-width="1.5"/>
<rect x="1202" y="673" width="13" height="7" fill="#00a000"/><rect x="1202" y="694" width="13" height="7" fill="#00a000"/>
<rect shape-rendering="crispEdges" x="1200.5" y="671.5" width="16" height="31" fill="none" stroke="#00a000" stroke-width="1"/>
<path shape-rendering="crispEdges" d="M1202.5 677.5H1213.5V694.5H1202.5ZM1202.5 684.5H1213.5" fill="none" stroke="#a8a8a8" stroke-width="1"/>
<path shape-rendering="crispEdges" d="M1217 681V691M1201 687.5H1217" fill="none" stroke="#1030ff" stroke-width="1.5"/>
<rect x="1202" y="812" width="13" height="7" fill="#00a000"/><rect x="1202" y="833" width="13" height="7" fill="#00a000"/>
<rect shape-rendering="crispEdges" x="1200.5" y="810.5" width="16" height="31" fill="none" stroke="#00a000" stroke-width="1"/>
<path shape-rendering="crispEdges" d="M1202.5 816.5H1213.5V833.5H1202.5ZM1202.5 823.5H1213.5" fill="none" stroke="#a8a8a8" stroke-width="1"/>
<path shape-rendering="crispEdges" d="M1217 820V830M1201 826.5H1217" fill="none" stroke="#1030ff" stroke-width="1.5"/>
<rect x="1146" y="959" width="11" height="17" fill="#00a000"/><rect x="1160" y="959" width="11" height="17" fill="#00a000"/>
<path shape-rendering="crispEdges" d="M1147.5 959.5H1156.5V975.5H1147.5ZM1160.5 959.5H1170.5V975.5H1160.5Z" fill="none" stroke="#b000b0" stroke-width="1"/>
<text x="1158" y="951" fill="#1030ff" font-family="Liberation Mono" font-size="10" text-anchor="middle" transform="translate(2316 0) scale(-1 1)">BLM15HB121SN1</text>
<text x="1158" y="985" fill="#1030ff" font-family="Liberation Mono" font-size="10" text-anchor="middle" transform="translate(2316 0) scale(-1 1)">L301</text>
<rect x="1350" y="919" width="25" height="18" fill="#00a000"/>
<rect shape-rendering="crispEdges" x="1349.5" y="918.5" width="26" height="19" fill="none" stroke="#00a000" stroke-width="1"/><rect shape-rendering="crispEdges" x="1351.5" y="919.5" width="22" height="16" fill="none" stroke="#a000b0" stroke-width="1"/>
<text x="1362" y="916" fill="#1030ff" font-family="Liberation Mono" font-size="8" text-anchor="middle" transform="translate(2724 0) scale(-1 1)">L302</text>
<text x="1362" y="945" fill="#1030ff" font-family="Liberation Mono" font-size="8" text-anchor="middle" transform="translate(2724 0) scale(-1 1)">BLM15HB121SN1</text>
<circle cx="738" cy="517" r="6" fill="#00a000" stroke="#c8c8c8" stroke-width="2.8"/>
<circle cx="788" cy="517" r="6" fill="#000" stroke="#c8c8c8" stroke-width="2.8"/>
<circle cx="938" cy="517" r="6" fill="#a00000" stroke="#c8c8c8" stroke-width="2.8"/>
<circle cx="788" cy="657" r="6" fill="#000" stroke="#c8c8c8" stroke-width="2.8"/>
<circle cx="938" cy="657" r="6" fill="#a00000" stroke="#c8c8c8" stroke-width="2.8"/>
<circle cx="1088" cy="657" r="6" fill="#a00000" stroke="#c8c8c8" stroke-width="2.8"/>
<circle cx="1238" cy="657" r="6" fill="#000" stroke="#c8c8c8" stroke-width="2.8"/>
<circle cx="788" cy="797" r="6" fill="#000" stroke="#c8c8c8" stroke-width="2.8"/>
<circle cx="938" cy="797" r="6" fill="#a00000" stroke="#c8c8c8" stroke-width="2.8"/>
<circle cx="1088" cy="797" r="6" fill="#a00000" stroke="#c8c8c8" stroke-width="2.8"/>
<circle cx="1238" cy="797" r="6" fill="#000" stroke="#c8c8c8" stroke-width="2.8"/>
<circle cx="1213" cy="982" r="6" fill="#000" stroke="#c8c8c8" stroke-width="2.8"/>
<path shape-rendering="crispEdges" d="M1226 923H1298V1083H1226ZM1298 993H1288V1013H1298" fill="none" stroke="#b000c0" stroke-width="1.6"/>
<circle cx="1251" cy="963" r="9.3" fill="none" stroke="#848400" stroke-width="1"/><circle cx="1251" cy="963" r="7.6" fill="#848400"/>
<circle cx="1251" cy="963" r="2.2" fill="#000"/>
<text x="1251" y="962" fill="#fff" font-family="Liberation Mono" font-size="8" font-weight="bold" text-anchor="middle">2</text>
<text x="1251" y="969" fill="#fff" font-family="Liberation Mono" font-size="7" font-weight="bold" text-anchor="middle" textLength="13" lengthAdjust="spacingAndGlyphs">GND</text>
<rect x="1264" y="953" width="20" height="20" fill="none" stroke="#848400" stroke-width="1"/><rect x="1266" y="955" width="16" height="16" fill="#848400"/>
<circle cx="1274" cy="963" r="2.2" fill="#000"/>
<text x="1274" y="962" fill="#fff" font-family="Liberation Mono" font-size="8" font-weight="bold" text-anchor="middle">1</text>
<text x="1274" y="969" fill="#fff" font-family="Liberation Mono" font-size="7" font-weight="bold" text-anchor="middle" textLength="13" lengthAdjust="spacingAndGlyphs">GND</text>
<circle cx="1251" cy="983" r="9.3" fill="none" stroke="#848400" stroke-width="1"/><circle cx="1251" cy="983" r="7.6" fill="#848400"/>
<circle cx="1251" cy="983" r="2.2" fill="#000"/>
<text x="1251" y="982" fill="#fff" font-family="Liberation Mono" font-size="8" font-weight="bold" text-anchor="middle">4</text>
<circle cx="1274" cy="983" r="9.3" fill="none" stroke="#848400" stroke-width="1"/><circle cx="1274" cy="983" r="7.6" fill="#848400"/>
<circle cx="1274" cy="983" r="2.2" fill="#000"/>
<text x="1274" y="982" fill="#fff" font-family="Liberation Mono" font-size="8" font-weight="bold" text-anchor="middle">3</text>
<circle cx="1251" cy="1003" r="9.3" fill="none" stroke="#848400" stroke-width="1"/><circle cx="1251" cy="1003" r="7.6" fill="#848400"/>
<circle cx="1251" cy="1003" r="2.2" fill="#000"/>
<text x="1251" y="1002" fill="#fff" font-family="Liberation Mono" font-size="8" font-weight="bold" text-anchor="middle">6</text>
<circle cx="1274" cy="1003" r="9.3" fill="none" stroke="#848400" stroke-width="1"/><circle cx="1274" cy="1003" r="7.6" fill="#848400"/>
<circle cx="1274" cy="1003" r="2.2" fill="#000"/>
<text x="1274" y="1002" fill="#fff" font-family="Liberation Mono" font-size="8" font-weight="bold" text-anchor="middle">5</text>
<circle cx="1251" cy="1023" r="9.3" fill="none" stroke="#848400" stroke-width="1"/><circle cx="1251" cy="1023" r="7.6" fill="#848400"/>
<circle cx="1251" cy="1023" r="2.2" fill="#000"/>
<text x="1251" y="1022" fill="#fff" font-family="Liberation Mono" font-size="8" font-weight="bold" text-anchor="middle">8</text>
<circle cx="1274" cy="1023" r="9.3" fill="none" stroke="#848400" stroke-width="1"/><circle cx="1274" cy="1023" r="7.6" fill="#848400"/>
<circle cx="1274" cy="1023" r="2.2" fill="#000"/>
<text x="1274" y="1022" fill="#fff" font-family="Liberation Mono" font-size="8" font-weight="bold" text-anchor="middle">7</text>
<circle cx="1251" cy="1043" r="9.3" fill="none" stroke="#848400" stroke-width="1"/><circle cx="1251" cy="1043" r="7.6" fill="#848400"/>
<circle cx="1251" cy="1043" r="2.2" fill="#000"/>
<text x="1251" y="1042" fill="#fff" font-family="Liberation Mono" font-size="8" font-weight="bold" text-anchor="middle">10</text>
<text x="1251" y="1049" fill="#fff" font-family="Liberation Mono" font-size="7" font-weight="bold" text-anchor="middle" textLength="13" lengthAdjust="spacingAndGlyphs">GND</text>
<circle cx="1274" cy="1043" r="9.3" fill="none" stroke="#848400" stroke-width="1"/><circle cx="1274" cy="1043" r="7.6" fill="#848400"/>
<circle cx="1274" cy="1043" r="2.2" fill="#000"/>
<text x="1274" y="1042" fill="#fff" font-family="Liberation Mono" font-size="8" font-weight="bold" text-anchor="middle">9</text>
<text x="1274" y="1049" fill="#fff" font-family="Liberation Mono" font-size="7" font-weight="bold" text-anchor="middle" textLength="13" lengthAdjust="spacingAndGlyphs">GND</text>
<text transform="translate(1309.5 945) rotate(90) scale(1 -1.45)" x="0" y="0" fill="#a4a4a4" font-family="Liberation Mono" font-size="10.5" font-weight="bold" textLength="116" lengthAdjust="spacingAndGlyphs">front panel keypad in</text>
<text transform="translate(1222 1000) rotate(-90) scale(-1 1)" x="0" y="0" fill="#1030ff" font-family="Liberation Mono" font-size="9" text-anchor="middle">IDC10</text>
<path transform="translate(738 440) scale(1.0 1.0) translate(-15.05 -5)" d="M6.00 1.30 L4.80 0.00 L1.50 0.00 L0.20 1.20 L0.20 3.30 L1.20 4.40 L4.80 5.40 L5.80 6.40 L5.80 8.80 L4.60 10.00 L1.30 10.00 L0.00 8.70 M8.50 0.00 L14.20 0.00 L11.00 4.00 L12.20 4.00 L13.70 5.00 L14.20 6.50 L14.20 8.50 L13.20 9.70 L12.20 10.00 L9.70 10.00 L8.50 9.30 M18.20 0.00 L20.60 0.00 L21.90 0.80 L22.40 2.20 L22.40 7.80 L21.90 9.20 L20.60 10.00 L18.20 10.00 L16.90 9.20 L16.40 7.80 L16.40 2.20 L16.90 0.80 L18.20 0.00 M25.40 2.00 L27.60 0.00 L27.60 10.00 M25.10 10.00 L30.10 10.00" fill="none" stroke="#c8c8c8" stroke-width="1.800" stroke-linecap="round" stroke-linejoin="round" />
<path transform="translate(738 454) scale(0.95 0.95) translate(-2.75 -5)" d="M0.80 2.00 L3.00 0.00 L3.00 10.00 M0.50 10.00 L5.50 10.00" fill="none" stroke="#c8c8c8" stroke-width="1.895" stroke-linecap="round" stroke-linejoin="round" />
<path d="M735 447.5H741M738 439V450" stroke="#0000ff" stroke-width="1.2"/>
<path transform="translate(738 580) scale(1.0 1.0) translate(-15.30 -5)" d="M6.00 1.30 L4.80 0.00 L1.50 0.00 L0.20 1.20 L0.20 3.30 L1.20 4.40 L4.80 5.40 L5.80 6.40 L5.80 8.80 L4.60 10.00 L1.30 10.00 L0.00 8.70 M8.50 0.00 L14.20 0.00 L11.00 4.00 L12.20 4.00 L13.70 5.00 L14.20 6.50 L14.20 8.50 L13.20 9.70 L12.20 10.00 L9.70 10.00 L8.50 9.30 M18.20 0.00 L20.60 0.00 L21.90 0.80 L22.40 2.20 L22.40 7.80 L21.90 9.20 L20.60 10.00 L18.20 10.00 L16.90 9.20 L16.40 7.80 L16.40 2.20 L16.90 0.80 L18.20 0.00 M24.60 1.50 L25.60 0.20 L26.60 0.00 L29.10 0.00 L30.30 1.00 L30.60 2.20 L30.60 3.50 L30.10 4.50 L24.60 10.00 L30.60 10.00" fill="none" stroke="#c8c8c8" stroke-width="1.800" stroke-linecap="round" stroke-linejoin="round" />
<path transform="translate(738 594) scale(0.95 0.95) translate(-3.00 -5)" d="M5.50 0.00 L1.00 0.00 L0.50 4.50 L1.50 4.00 L4.00 4.00 L5.50 4.80 L6.00 6.20 L6.00 8.50 L5.00 9.70 L4.00 10.00 L1.50 10.00 L0.30 9.30" fill="none" stroke="#c8c8c8" stroke-width="1.895" stroke-linecap="round" stroke-linejoin="round" />
<path d="M735 587.5H741M738 579V590" stroke="#0000ff" stroke-width="1.2"/>
<path transform="translate(738 720) scale(1.0 1.0) translate(-15.30 -5)" d="M6.00 1.30 L4.80 0.00 L1.50 0.00 L0.20 1.20 L0.20 3.30 L1.20 4.40 L4.80 5.40 L5.80 6.40 L5.80 8.80 L4.60 10.00 L1.30 10.00 L0.00 8.70 M8.50 0.00 L14.20 0.00 L11.00 4.00 L12.20 4.00 L13.70 5.00 L14.20 6.50 L14.20 8.50 L13.20 9.70 L12.20 10.00 L9.70 10.00 L8.50 9.30 M18.20 0.00 L20.60 0.00 L21.90 0.80 L22.40 2.20 L22.40 7.80 L21.90 9.20 L20.60 10.00 L18.20 10.00 L16.90 9.20 L16.40 7.80 L16.40 2.20 L16.90 0.80 L18.20 0.00 M24.90 0.00 L30.60 0.00 L27.40 4.00 L28.60 4.00 L30.10 5.00 L30.60 6.50 L30.60 8.50 L29.60 9.70 L28.60 10.00 L26.10 10.00 L24.90 9.30" fill="none" stroke="#c8c8c8" stroke-width="1.800" stroke-linecap="round" stroke-linejoin="round" />
<path d="M735 727.5H741M738 719V730" stroke="#0000ff" stroke-width="1.2"/>
<path transform="translate(738 842) scale(1.0 1.0) translate(-15.40 -5)" d="M6.00 1.30 L4.80 0.00 L1.50 0.00 L0.20 1.20 L0.20 3.30 L1.20 4.40 L4.80 5.40 L5.80 6.40 L5.80 8.80 L4.60 10.00 L1.30 10.00 L0.00 8.70 M8.50 0.00 L14.20 0.00 L11.00 4.00 L12.20 4.00 L13.70 5.00 L14.20 6.50 L14.20 8.50 L13.20 9.70 L12.20 10.00 L9.70 10.00 L8.50 9.30 M18.20 0.00 L20.60 0.00 L21.90 0.80 L22.40 2.20 L22.40 7.80 L21.90 9.20 L20.60 10.00 L18.20 10.00 L16.90 9.20 L16.40 7.80 L16.40 2.20 L16.90 0.80 L18.20 0.00 M29.10 10.00 L29.10 0.00 L24.60 7.00 L30.80 7.00" fill="none" stroke="#c8c8c8" stroke-width="1.800" stroke-linecap="round" stroke-linejoin="round" />
<path transform="translate(718 882) scale(0.95 0.95) translate(-3.00 -5)" d="M0.00 10.00 L3.00 0.00 L6.00 10.00 M1.10 6.50 L4.90 6.50" fill="none" stroke="#c8c8c8" stroke-width="1.895" stroke-linecap="round" stroke-linejoin="round" />
<path d="M735 863.5H741M738 855V866" stroke="#0000ff" stroke-width="1.2"/>
<path transform="translate(888 440) scale(1.0 1.0) translate(-15.30 -5)" d="M6.00 1.30 L4.80 0.00 L1.50 0.00 L0.20 1.20 L0.20 3.30 L1.20 4.40 L4.80 5.40 L5.80 6.40 L5.80 8.80 L4.60 10.00 L1.30 10.00 L0.00 8.70 M8.50 0.00 L14.20 0.00 L11.00 4.00 L12.20 4.00 L13.70 5.00 L14.20 6.50 L14.20 8.50 L13.20 9.70 L12.20 10.00 L9.70 10.00 L8.50 9.30 M18.20 0.00 L20.60 0.00 L21.90 0.80 L22.40 2.20 L22.40 7.80 L21.90 9.20 L20.60 10.00 L18.20 10.00 L16.90 9.20 L16.40 7.80 L16.40 2.20 L16.90 0.80 L18.20 0.00 M24.60 0.00 L30.60 0.00 L26.60 10.00" fill="none" stroke="#c8c8c8" stroke-width="1.800" stroke-linecap="round" stroke-linejoin="round" />
<path transform="translate(888 454) scale(0.95 0.95) translate(-3.00 -5)" d="M0.00 1.50 L1.00 0.20 L2.00 0.00 L4.50 0.00 L5.70 1.00 L6.00 2.20 L6.00 3.50 L5.50 4.50 L0.00 10.00 L6.00 10.00" fill="none" stroke="#c8c8c8" stroke-width="1.895" stroke-linecap="round" stroke-linejoin="round" />
<path d="M885 447.5H891M888 439V450" stroke="#0000ff" stroke-width="1.2"/>
<path transform="translate(888 580) scale(1.0 1.0) translate(-15.30 -5)" d="M6.00 1.30 L4.80 0.00 L1.50 0.00 L0.20 1.20 L0.20 3.30 L1.20 4.40 L4.80 5.40 L5.80 6.40 L5.80 8.80 L4.60 10.00 L1.30 10.00 L0.00 8.70 M8.50 0.00 L14.20 0.00 L11.00 4.00 L12.20 4.00 L13.70 5.00 L14.20 6.50 L14.20 8.50 L13.20 9.70 L12.20 10.00 L9.70 10.00 L8.50 9.30 M18.20 0.00 L20.60 0.00 L21.90 0.80 L22.40 2.20 L22.40 7.80 L21.90 9.20 L20.60 10.00 L18.20 10.00 L16.90 9.20 L16.40 7.80 L16.40 2.20 L16.90 0.80 L18.20 0.00 M27.60 4.60 L25.60 4.00 L24.90 3.00 L24.90 1.20 L26.10 0.00 L29.10 0.00 L30.30 1.20 L30.30 3.00 L29.60 4.00 L27.60 4.60 L25.60 5.30 L24.60 6.50 L24.60 8.80 L25.80 10.00 L29.40 10.00 L30.60 8.80 L30.60 6.50 L29.60 5.30 L27.60 4.60" fill="none" stroke="#c8c8c8" stroke-width="1.800" stroke-linecap="round" stroke-linejoin="round" />
<path transform="translate(888 594) scale(0.95 0.95) translate(-3.00 -5)" d="M5.00 0.00 L3.50 0.20 L1.50 1.50 L0.30 4.00 L0.00 6.50 L0.30 8.80 L1.50 10.00 L4.50 10.00 L5.80 8.80 L6.00 7.20 L5.50 5.50 L4.30 4.60 L1.80 4.60 L0.50 5.50 L0.00 6.50" fill="none" stroke="#c8c8c8" stroke-width="1.895" stroke-linecap="round" stroke-linejoin="round" />
<path d="M885 587.5H891M888 579V590" stroke="#0000ff" stroke-width="1.2"/>
<path transform="translate(888 720) scale(1.0 1.0) translate(-15.30 -5)" d="M6.00 1.30 L4.80 0.00 L1.50 0.00 L0.20 1.20 L0.20 3.30 L1.20 4.40 L4.80 5.40 L5.80 6.40 L5.80 8.80 L4.60 10.00 L1.30 10.00 L0.00 8.70 M8.50 0.00 L14.20 0.00 L11.00 4.00 L12.20 4.00 L13.70 5.00 L14.20 6.50 L14.20 8.50 L13.20 9.70 L12.20 10.00 L9.70 10.00 L8.50 9.30 M18.20 0.00 L20.60 0.00 L21.90 0.80 L22.40 2.20 L22.40 7.80 L21.90 9.20 L20.60 10.00 L18.20 10.00 L16.90 9.20 L16.40 7.80 L16.40 2.20 L16.90 0.80 L18.20 0.00 M25.60 10.00 L27.10 9.80 L29.10 8.50 L30.30 6.00 L30.60 3.50 L30.30 1.20 L29.10 0.00 L26.10 0.00 L24.80 1.20 L24.60 2.80 L25.10 4.50 L26.30 5.40 L28.80 5.40 L30.10 4.50 L30.60 3.50" fill="none" stroke="#c8c8c8" stroke-width="1.800" stroke-linecap="round" stroke-linejoin="round" />
<path transform="translate(888 734) scale(0.95 0.95) translate(-3.00 -5)" d="M1.00 10.00 L2.50 9.80 L4.50 8.50 L5.70 6.00 L6.00 3.50 L5.70 1.20 L4.50 0.00 L1.50 0.00 L0.20 1.20 L0.00 2.80 L0.50 4.50 L1.70 5.40 L4.20 5.40 L5.50 4.50 L6.00 3.50" fill="none" stroke="#c8c8c8" stroke-width="1.895" stroke-linecap="round" stroke-linejoin="round" />
<path d="M885 727.5H891M888 719V730" stroke="#0000ff" stroke-width="1.2"/>
<path transform="translate(888 856) scale(1.0 1.0) translate(-15.30 -5)" d="M6.00 1.30 L4.80 0.00 L1.50 0.00 L0.20 1.20 L0.20 3.30 L1.20 4.40 L4.80 5.40 L5.80 6.40 L5.80 8.80 L4.60 10.00 L1.30 10.00 L0.00 8.70 M8.50 0.00 L14.20 0.00 L11.00 4.00 L12.20 4.00 L13.70 5.00 L14.20 6.50 L14.20 8.50 L13.20 9.70 L12.20 10.00 L9.70 10.00 L8.50 9.30 M17.20 2.00 L19.40 0.00 L19.40 10.00 M16.90 10.00 L21.90 10.00 M26.40 0.00 L28.80 0.00 L30.10 0.80 L30.60 2.20 L30.60 7.80 L30.10 9.20 L28.80 10.00 L26.40 10.00 L25.10 9.20 L24.60 7.80 L24.60 2.20 L25.10 0.80 L26.40 0.00" fill="none" stroke="#c8c8c8" stroke-width="1.800" stroke-linecap="round" stroke-linejoin="round" />
<path transform="translate(888 882) scale(0.95 0.95) translate(-3.00 -5)" d="M0.00 5.00 L4.00 5.00 L5.50 5.80 L6.00 7.00 L6.00 8.50 L5.00 9.70 L4.00 10.00 L0.00 10.00 L0.00 0.00 L4.00 0.00 L5.00 0.50 L5.50 1.50 L5.50 3.30 L5.00 4.30 L4.00 5.00" fill="none" stroke="#c8c8c8" stroke-width="1.895" stroke-linecap="round" stroke-linejoin="round" />
<path d="M885 863.5H891M888 855V866" stroke="#0000ff" stroke-width="1.2"/>
<path transform="translate(1038 440) scale(1.0 1.0) translate(-15.05 -5)" d="M6.00 1.30 L4.80 0.00 L1.50 0.00 L0.20 1.20 L0.20 3.30 L1.20 4.40 L4.80 5.40 L5.80 6.40 L5.80 8.80 L4.60 10.00 L1.30 10.00 L0.00 8.70 M8.50 0.00 L14.20 0.00 L11.00 4.00 L12.20 4.00 L13.70 5.00 L14.20 6.50 L14.20 8.50 L13.20 9.70 L12.20 10.00 L9.70 10.00 L8.50 9.30 M17.20 2.00 L19.40 0.00 L19.40 10.00 M16.90 10.00 L21.90 10.00 M25.40 2.00 L27.60 0.00 L27.60 10.00 M25.10 10.00 L30.10 10.00" fill="none" stroke="#c8c8c8" stroke-width="1.800" stroke-linecap="round" stroke-linejoin="round" />
<path transform="translate(1038 454) scale(0.95 0.95) translate(-3.00 -5)" d="M0.30 0.00 L6.00 0.00 L2.80 4.00 L4.00 4.00 L5.50 5.00 L6.00 6.50 L6.00 8.50 L5.00 9.70 L4.00 10.00 L1.50 10.00 L0.30 9.30" fill="none" stroke="#c8c8c8" stroke-width="1.895" stroke-linecap="round" stroke-linejoin="round" />
<path d="M1035 447.5H1041M1038 439V450" stroke="#0000ff" stroke-width="1.2"/>
<path transform="translate(1038 580) scale(1.0 1.0) translate(-15.30 -5)" d="M6.00 1.30 L4.80 0.00 L1.50 0.00 L0.20 1.20 L0.20 3.30 L1.20 4.40 L4.80 5.40 L5.80 6.40 L5.80 8.80 L4.60 10.00 L1.30 10.00 L0.00 8.70 M8.50 0.00 L14.20 0.00 L11.00 4.00 L12.20 4.00 L13.70 5.00 L14.20 6.50 L14.20 8.50 L13.20 9.70 L12.20 10.00 L9.70 10.00 L8.50 9.30 M17.20 2.00 L19.40 0.00 L19.40 10.00 M16.90 10.00 L21.90 10.00 M24.60 1.50 L25.60 0.20 L26.60 0.00 L29.10 0.00 L30.30 1.00 L30.60 2.20 L30.60 3.50 L30.10 4.50 L24.60 10.00 L30.60 10.00" fill="none" stroke="#c8c8c8" stroke-width="1.800" stroke-linecap="round" stroke-linejoin="round" />
<path transform="translate(1038 594) scale(0.95 0.95) translate(-3.00 -5)" d="M0.00 0.00 L6.00 0.00 L2.00 10.00" fill="none" stroke="#c8c8c8" stroke-width="1.895" stroke-linecap="round" stroke-linejoin="round" />
<path d="M1035 587.5H1041M1038 579V590" stroke="#0000ff" stroke-width="1.2"/>
<path transform="translate(1038 720) scale(1.0 1.0) translate(-15.30 -5)" d="M6.00 1.30 L4.80 0.00 L1.50 0.00 L0.20 1.20 L0.20 3.30 L1.20 4.40 L4.80 5.40 L5.80 6.40 L5.80 8.80 L4.60 10.00 L1.30 10.00 L0.00 8.70 M8.50 0.00 L14.20 0.00 L11.00 4.00 L12.20 4.00 L13.70 5.00 L14.20 6.50 L14.20 8.50 L13.20 9.70 L12.20 10.00 L9.70 10.00 L8.50 9.30 M17.20 2.00 L19.40 0.00 L19.40 10.00 M16.90 10.00 L21.90 10.00 M24.90 0.00 L30.60 0.00 L27.40 4.00 L28.60 4.00 L30.10 5.00 L30.60 6.50 L30.60 8.50 L29.60 9.70 L28.60 10.00 L26.10 10.00 L24.90 9.30" fill="none" stroke="#c8c8c8" stroke-width="1.800" stroke-linecap="round" stroke-linejoin="round" />
<path transform="translate(1038 734) scale(0.95 0.95) translate(-3.00 -5)" d="M1.80 0.00 L4.20 0.00 L5.50 0.80 L6.00 2.20 L6.00 7.80 L5.50 9.20 L4.20 10.00 L1.80 10.00 L0.50 9.20 L0.00 7.80 L0.00 2.20 L0.50 0.80 L1.80 0.00" fill="none" stroke="#c8c8c8" stroke-width="1.895" stroke-linecap="round" stroke-linejoin="round" />
<path d="M1035 727.5H1041M1038 719V730" stroke="#0000ff" stroke-width="1.2"/>
<path transform="translate(1038 856) scale(1.0 1.0) translate(-15.40 -5)" d="M6.00 1.30 L4.80 0.00 L1.50 0.00 L0.20 1.20 L0.20 3.30 L1.20 4.40 L4.80 5.40 L5.80 6.40 L5.80 8.80 L4.60 10.00 L1.30 10.00 L0.00 8.70 M8.50 0.00 L14.20 0.00 L11.00 4.00 L12.20 4.00 L13.70 5.00 L14.20 6.50 L14.20 8.50 L13.20 9.70 L12.20 10.00 L9.70 10.00 L8.50 9.30 M17.20 2.00 L19.40 0.00 L19.40 10.00 M16.90 10.00 L21.90 10.00 M29.10 10.00 L29.10 0.00 L24.60 7.00 L30.80 7.00" fill="none" stroke="#c8c8c8" stroke-width="1.800" stroke-linecap="round" stroke-linejoin="round" />
<path transform="translate(1038 902) scale(0.95 0.95) translate(-3.00 -5)" d="M6.00 1.30 L5.00 0.20 L4.00 0.00 L2.00 0.00 L0.80 0.80 L0.00 2.50 L0.00 7.50 L0.80 9.20 L2.00 10.00 L4.00 10.00 L5.00 9.80 L6.00 8.70" fill="none" stroke="#c8c8c8" stroke-width="1.895" stroke-linecap="round" stroke-linejoin="round" />
<path d="M1035 863.5H1041M1038 855V866" stroke="#0000ff" stroke-width="1.2"/>
<path transform="translate(1188 440) scale(1.0 1.0) translate(-15.30 -5)" d="M6.00 1.30 L4.80 0.00 L1.50 0.00 L0.20 1.20 L0.20 3.30 L1.20 4.40 L4.80 5.40 L5.80 6.40 L5.80 8.80 L4.60 10.00 L1.30 10.00 L0.00 8.70 M8.50 0.00 L14.20 0.00 L11.00 4.00 L12.20 4.00 L13.70 5.00 L14.20 6.50 L14.20 8.50 L13.20 9.70 L12.20 10.00 L9.70 10.00 L8.50 9.30 M17.20 2.00 L19.40 0.00 L19.40 10.00 M16.90 10.00 L21.90 10.00 M30.10 0.00 L25.60 0.00 L25.10 4.50 L26.10 4.00 L28.60 4.00 L30.10 4.80 L30.60 6.20 L30.60 8.50 L29.60 9.70 L28.60 10.00 L26.10 10.00 L24.90 9.30" fill="none" stroke="#c8c8c8" stroke-width="1.800" stroke-linecap="round" stroke-linejoin="round" />
<path transform="translate(1188 454) scale(0.95 0.95) translate(-3.10 -5)" d="M4.50 10.00 L4.50 0.00 L0.00 7.00 L6.20 7.00" fill="none" stroke="#c8c8c8" stroke-width="1.895" stroke-linecap="round" stroke-linejoin="round" />
<path d="M1185 447.5H1191M1188 439V450" stroke="#0000ff" stroke-width="1.2"/>
<path transform="translate(1188 580) scale(1.0 1.0) translate(-15.30 -5)" d="M6.00 1.30 L4.80 0.00 L1.50 0.00 L0.20 1.20 L0.20 3.30 L1.20 4.40 L4.80 5.40 L5.80 6.40 L5.80 8.80 L4.60 10.00 L1.30 10.00 L0.00 8.70 M8.50 0.00 L14.20 0.00 L11.00 4.00 L12.20 4.00 L13.70 5.00 L14.20 6.50 L14.20 8.50 L13.20 9.70 L12.20 10.00 L9.70 10.00 L8.50 9.30 M17.20 2.00 L19.40 0.00 L19.40 10.00 M16.90 10.00 L21.90 10.00 M29.60 0.00 L28.10 0.20 L26.10 1.50 L24.90 4.00 L24.60 6.50 L24.90 8.80 L26.10 10.00 L29.10 10.00 L30.40 8.80 L30.60 7.20 L30.10 5.50 L28.90 4.60 L26.40 4.60 L25.10 5.50 L24.60 6.50" fill="none" stroke="#c8c8c8" stroke-width="1.800" stroke-linecap="round" stroke-linejoin="round" />
<path transform="translate(1188 594) scale(0.95 0.95) translate(-3.00 -5)" d="M3.00 4.60 L1.00 4.00 L0.30 3.00 L0.30 1.20 L1.50 0.00 L4.50 0.00 L5.70 1.20 L5.70 3.00 L5.00 4.00 L3.00 4.60 L1.00 5.30 L0.00 6.50 L0.00 8.80 L1.20 10.00 L4.80 10.00 L6.00 8.80 L6.00 6.50 L5.00 5.30 L3.00 4.60" fill="none" stroke="#c8c8c8" stroke-width="1.895" stroke-linecap="round" stroke-linejoin="round" />
<path d="M1185 587.5H1191M1188 579V590" stroke="#0000ff" stroke-width="1.2"/>
<path transform="translate(1188 720) scale(1.0 1.0) translate(-15.30 -5)" d="M6.00 1.30 L4.80 0.00 L1.50 0.00 L0.20 1.20 L0.20 3.30 L1.20 4.40 L4.80 5.40 L5.80 6.40 L5.80 8.80 L4.60 10.00 L1.30 10.00 L0.00 8.70 M8.50 0.00 L14.20 0.00 L11.00 4.00 L12.20 4.00 L13.70 5.00 L14.20 6.50 L14.20 8.50 L13.20 9.70 L12.20 10.00 L9.70 10.00 L8.50 9.30 M17.20 2.00 L19.40 0.00 L19.40 10.00 M16.90 10.00 L21.90 10.00 M24.60 0.00 L30.60 0.00 L26.60 10.00" fill="none" stroke="#c8c8c8" stroke-width="1.800" stroke-linecap="round" stroke-linejoin="round" />
<path d="M1185 727.5H1191M1188 719V730" stroke="#0000ff" stroke-width="1.2"/>
<path transform="translate(1188 856) scale(1.0 1.0) translate(-15.30 -5)" d="M6.00 1.30 L4.80 0.00 L1.50 0.00 L0.20 1.20 L0.20 3.30 L1.20 4.40 L4.80 5.40 L5.80 6.40 L5.80 8.80 L4.60 10.00 L1.30 10.00 L0.00 8.70 M8.50 0.00 L14.20 0.00 L11.00 4.00 L12.20 4.00 L13.70 5.00 L14.20 6.50 L14.20 8.50 L13.20 9.70 L12.20 10.00 L9.70 10.00 L8.50 9.30 M17.20 2.00 L19.40 0.00 L19.40 10.00 M16.90 10.00 L21.90 10.00 M27.60 4.60 L25.60 4.00 L24.90 3.00 L24.90 1.20 L26.10 0.00 L29.10 0.00 L30.30 1.20 L30.30 3.00 L29.60 4.00 L27.60 4.60 L25.60 5.30 L24.60 6.50 L24.60 8.80 L25.80 10.00 L29.40 10.00 L30.60 8.80 L30.60 6.50 L29.60 5.30 L27.60 4.60" fill="none" stroke="#c8c8c8" stroke-width="1.800" stroke-linecap="round" stroke-linejoin="round" />
<path transform="translate(1188 882) scale(0.95 0.95) translate(-3.00 -5)" d="M0.00 10.00 L0.00 0.00 L3.00 0.00 L5.00 0.80 L6.00 3.00 L6.00 7.00 L5.00 9.20 L3.00 10.00 L0.00 10.00" fill="none" stroke="#c8c8c8" stroke-width="1.895" stroke-linecap="round" stroke-linejoin="round" />
<path d="M1185 863.5H1191M1188 855V866" stroke="#0000ff" stroke-width="1.2"/>
<path transform="translate(988 962) scale(1.0 1.0) translate(-15.30 -5)" d="M6.00 1.30 L4.80 0.00 L1.50 0.00 L0.20 1.20 L0.20 3.30 L1.20 4.40 L4.80 5.40 L5.80 6.40 L5.80 8.80 L4.60 10.00 L1.30 10.00 L0.00 8.70 M8.50 0.00 L14.20 0.00 L11.00 4.00 L12.20 4.00 L13.70 5.00 L14.20 6.50 L14.20 8.50 L13.20 9.70 L12.20 10.00 L9.70 10.00 L8.50 9.30 M17.20 2.00 L19.40 0.00 L19.40 10.00 M16.90 10.00 L21.90 10.00 M25.60 10.00 L27.10 9.80 L29.10 8.50 L30.30 6.00 L30.60 3.50 L30.30 1.20 L29.10 0.00 L26.10 0.00 L24.80 1.20 L24.60 2.80 L25.10 4.50 L26.30 5.40 L28.80 5.40 L30.10 4.50 L30.60 3.50" fill="none" stroke="#c8c8c8" stroke-width="1.800" stroke-linecap="round" stroke-linejoin="round" />
<path transform="translate(988 1022) scale(1.0 1.0) translate(-7.10 -5)" d="M6.00 1.30 L5.00 0.20 L4.00 0.00 L2.00 0.00 L0.80 0.80 L0.00 2.50 L0.00 7.50 L0.80 9.20 L2.00 10.00 L4.00 10.00 L5.50 9.20 L6.00 7.50 L6.00 5.50 L3.50 5.50 M10.20 0.00 L12.20 0.00 L13.40 0.80 L14.20 2.50 L14.20 7.50 L13.40 9.20 L12.20 10.00 L10.20 10.00 L9.00 9.20 L8.20 7.50 L8.20 2.50 L9.00 0.80 L10.20 0.00" fill="none" stroke="#c8c8c8" stroke-width="1.800" stroke-linecap="round" stroke-linejoin="round" />
<path transform="translate(688 424) scale(0.65 0.65) translate(-2.75 -5)" d="M0.80 2.00 L3.00 0.00 L3.00 10.00 M0.50 10.00 L5.50 10.00" fill="none" stroke="#f4f4f4" stroke-width="1.692" stroke-linecap="round" stroke-linejoin="round" />
<path transform="translate(688 464) scale(0.65 0.65) translate(-3.00 -5)" d="M0.00 1.50 L1.00 0.20 L2.00 0.00 L4.50 0.00 L5.70 1.00 L6.00 2.20 L6.00 3.50 L5.50 4.50 L0.00 10.00 L6.00 10.00" fill="none" stroke="#f4f4f4" stroke-width="1.692" stroke-linecap="round" stroke-linejoin="round" />
<path transform="translate(788 423) scale(0.65 0.65) translate(-3.00 -5)" d="M0.30 0.00 L6.00 0.00 L2.80 4.00 L4.00 4.00 L5.50 5.00 L6.00 6.50 L6.00 8.50 L5.00 9.70 L4.00 10.00 L1.50 10.00 L0.30 9.30" fill="none" stroke="#f4f4f4" stroke-width="1.692" stroke-linecap="round" stroke-linejoin="round" />
<path transform="translate(788 430) scale(0.55 0.55) translate(-15.30 -5)" d="M3.00 2.50 L3.00 8.50 M0.00 5.50 L6.00 5.50 M13.70 0.00 L9.20 0.00 L8.70 4.50 L9.70 4.00 L12.20 4.00 L13.70 4.80 L14.20 6.20 L14.20 8.50 L13.20 9.70 L12.20 10.00 L9.70 10.00 L8.50 9.30 M16.40 0.00 L19.40 10.00 L22.40 0.00 M24.60 10.00 L27.60 0.00 L30.60 10.00 M25.70 6.50 L29.50 6.50" fill="none" stroke="#f4f4f4" stroke-width="1.818" stroke-linecap="round" stroke-linejoin="round" />
<path transform="translate(788 463) scale(0.65 0.65) translate(-3.10 -5)" d="M4.50 10.00 L4.50 0.00 L0.00 7.00 L6.20 7.00" fill="none" stroke="#f4f4f4" stroke-width="1.692" stroke-linecap="round" stroke-linejoin="round" />
<path transform="translate(788 470) scale(0.55 0.55) translate(-15.30 -5)" d="M3.00 2.50 L3.00 8.50 M0.00 5.50 L6.00 5.50 M13.70 0.00 L9.20 0.00 L8.70 4.50 L9.70 4.00 L12.20 4.00 L13.70 4.80 L14.20 6.20 L14.20 8.50 L13.20 9.70 L12.20 10.00 L9.70 10.00 L8.50 9.30 M16.40 0.00 L19.40 10.00 L22.40 0.00 M24.60 10.00 L27.60 0.00 L30.60 10.00 M25.70 6.50 L29.50 6.50" fill="none" stroke="#f4f4f4" stroke-width="1.818" stroke-linecap="round" stroke-linejoin="round" />
<path transform="translate(688 564) scale(0.65 0.65) translate(-2.75 -5)" d="M0.80 2.00 L3.00 0.00 L3.00 10.00 M0.50 10.00 L5.50 10.00" fill="none" stroke="#f4f4f4" stroke-width="1.692" stroke-linecap="round" stroke-linejoin="round" />
<path transform="translate(688 604) scale(0.65 0.65) translate(-3.00 -5)" d="M0.00 1.50 L1.00 0.20 L2.00 0.00 L4.50 0.00 L5.70 1.00 L6.00 2.20 L6.00 3.50 L5.50 4.50 L0.00 10.00 L6.00 10.00" fill="none" stroke="#f4f4f4" stroke-width="1.692" stroke-linecap="round" stroke-linejoin="round" />
<path transform="translate(788 564) scale(0.65 0.65) translate(-3.00 -5)" d="M0.30 0.00 L6.00 0.00 L2.80 4.00 L4.00 4.00 L5.50 5.00 L6.00 6.50 L6.00 8.50 L5.00 9.70 L4.00 10.00 L1.50 10.00 L0.30 9.30" fill="none" stroke="#f4f4f4" stroke-width="1.692" stroke-linecap="round" stroke-linejoin="round" />
<path transform="translate(788 604) scale(0.65 0.65) translate(-3.10 -5)" d="M4.50 10.00 L4.50 0.00 L0.00 7.00 L6.20 7.00" fill="none" stroke="#f4f4f4" stroke-width="1.692" stroke-linecap="round" stroke-linejoin="round" />
<path transform="translate(688 704) scale(0.65 0.65) translate(-2.75 -5)" d="M0.80 2.00 L3.00 0.00 L3.00 10.00 M0.50 10.00 L5.50 10.00" fill="none" stroke="#f4f4f4" stroke-width="1.692" stroke-linecap="round" stroke-linejoin="round" />
<path transform="translate(688 744) scale(0.65 0.65) translate(-3.00 -5)" d="M0.00 1.50 L1.00 0.20 L2.00 0.00 L4.50 0.00 L5.70 1.00 L6.00 2.20 L6.00 3.50 L5.50 4.50 L0.00 10.00 L6.00 10.00" fill="none" stroke="#f4f4f4" stroke-width="1.692" stroke-linecap="round" stroke-linejoin="round" />
<path transform="translate(788 704) scale(0.65 0.65) translate(-3.00 -5)" d="M0.30 0.00 L6.00 0.00 L2.80 4.00 L4.00 4.00 L5.50 5.00 L6.00 6.50 L6.00 8.50 L5.00 9.70 L4.00 10.00 L1.50 10.00 L0.30 9.30" fill="none" stroke="#f4f4f4" stroke-width="1.692" stroke-linecap="round" stroke-linejoin="round" />
<path transform="translate(788 744) scale(0.65 0.65) translate(-3.10 -5)" d="M4.50 10.00 L4.50 0.00 L0.00 7.00 L6.20 7.00" fill="none" stroke="#f4f4f4" stroke-width="1.692" stroke-linecap="round" stroke-linejoin="round" />
<path transform="translate(688 840) scale(0.65 0.65) translate(-2.75 -5)" d="M0.80 2.00 L3.00 0.00 L3.00 10.00 M0.50 10.00 L5.50 10.00" fill="none" stroke="#f4f4f4" stroke-width="1.692" stroke-linecap="round" stroke-linejoin="round" />
<path transform="translate(688 880) scale(0.65 0.65) translate(-3.00 -5)" d="M0.00 1.50 L1.00 0.20 L2.00 0.00 L4.50 0.00 L5.70 1.00 L6.00 2.20 L6.00 3.50 L5.50 4.50 L0.00 10.00 L6.00 10.00" fill="none" stroke="#f4f4f4" stroke-width="1.692" stroke-linecap="round" stroke-linejoin="round" />
<path transform="translate(788 840) scale(0.65 0.65) translate(-3.00 -5)" d="M0.30 0.00 L6.00 0.00 L2.80 4.00 L4.00 4.00 L5.50 5.00 L6.00 6.50 L6.00 8.50 L5.00 9.70 L4.00 10.00 L1.50 10.00 L0.30 9.30" fill="none" stroke="#f4f4f4" stroke-width="1.692" stroke-linecap="round" stroke-linejoin="round" />
<path transform="translate(788 880) scale(0.65 0.65) translate(-3.10 -5)" d="M4.50 10.00 L4.50 0.00 L0.00 7.00 L6.20 7.00" fill="none" stroke="#f4f4f4" stroke-width="1.692" stroke-linecap="round" stroke-linejoin="round" />
<path transform="translate(838 424) scale(0.65 0.65) translate(-2.75 -5)" d="M0.80 2.00 L3.00 0.00 L3.00 10.00 M0.50 10.00 L5.50 10.00" fill="none" stroke="#f4f4f4" stroke-width="1.692" stroke-linecap="round" stroke-linejoin="round" />
<path transform="translate(838 464) scale(0.65 0.65) translate(-3.00 -5)" d="M0.00 1.50 L1.00 0.20 L2.00 0.00 L4.50 0.00 L5.70 1.00 L6.00 2.20 L6.00 3.50 L5.50 4.50 L0.00 10.00 L6.00 10.00" fill="none" stroke="#f4f4f4" stroke-width="1.692" stroke-linecap="round" stroke-linejoin="round" />
<path transform="translate(938 423) scale(0.65 0.65) translate(-3.00 -5)" d="M0.30 0.00 L6.00 0.00 L2.80 4.00 L4.00 4.00 L5.50 5.00 L6.00 6.50 L6.00 8.50 L5.00 9.70 L4.00 10.00 L1.50 10.00 L0.30 9.30" fill="none" stroke="#f4f4f4" stroke-width="1.692" stroke-linecap="round" stroke-linejoin="round" />
<path transform="translate(938 430) scale(0.55 0.55) translate(-15.30 -5)" d="M3.00 2.50 L3.00 8.50 M0.00 5.50 L6.00 5.50 M13.70 0.00 L9.20 0.00 L8.70 4.50 L9.70 4.00 L12.20 4.00 L13.70 4.80 L14.20 6.20 L14.20 8.50 L13.20 9.70 L12.20 10.00 L9.70 10.00 L8.50 9.30 M16.40 0.00 L19.40 10.00 L22.40 0.00 M24.60 10.00 L27.60 0.00 L30.60 10.00 M25.70 6.50 L29.50 6.50" fill="none" stroke="#f4f4f4" stroke-width="1.818" stroke-linecap="round" stroke-linejoin="round" />
<path transform="translate(938 463) scale(0.65 0.65) translate(-3.10 -5)" d="M4.50 10.00 L4.50 0.00 L0.00 7.00 L6.20 7.00" fill="none" stroke="#f4f4f4" stroke-width="1.692" stroke-linecap="round" stroke-linejoin="round" />
<path transform="translate(938 470) scale(0.55 0.55) translate(-15.30 -5)" d="M3.00 2.50 L3.00 8.50 M0.00 5.50 L6.00 5.50 M13.70 0.00 L9.20 0.00 L8.70 4.50 L9.70 4.00 L12.20 4.00 L13.70 4.80 L14.20 6.20 L14.20 8.50 L13.20 9.70 L12.20 10.00 L9.70 10.00 L8.50 9.30 M16.40 0.00 L19.40 10.00 L22.40 0.00 M24.60 10.00 L27.60 0.00 L30.60 10.00 M25.70 6.50 L29.50 6.50" fill="none" stroke="#f4f4f4" stroke-width="1.818" stroke-linecap="round" stroke-linejoin="round" />
<path transform="translate(838 564) scale(0.65 0.65) translate(-2.75 -5)" d="M0.80 2.00 L3.00 0.00 L3.00 10.00 M0.50 10.00 L5.50 10.00" fill="none" stroke="#f4f4f4" stroke-width="1.692" stroke-linecap="round" stroke-linejoin="round" />
<path transform="translate(838 604) scale(0.65 0.65) translate(-3.00 -5)" d="M0.00 1.50 L1.00 0.20 L2.00 0.00 L4.50 0.00 L5.70 1.00 L6.00 2.20 L6.00 3.50 L5.50 4.50 L0.00 10.00 L6.00 10.00" fill="none" stroke="#f4f4f4" stroke-width="1.692" stroke-linecap="round" stroke-linejoin="round" />
<path transform="translate(938 564) scale(0.65 0.65) translate(-3.00 -5)" d="M0.30 0.00 L6.00 0.00 L2.80 4.00 L4.00 4.00 L5.50 5.00 L6.00 6.50 L6.00 8.50 L5.00 9.70 L4.00 10.00 L1.50 10.00 L0.30 9.30" fill="none" stroke="#f4f4f4" stroke-width="1.692" stroke-linecap="round" stroke-linejoin="round" />
<path transform="translate(938 604) scale(0.65 0.65) translate(-3.10 -5)" d="M4.50 10.00 L4.50 0.00 L0.00 7.00 L6.20 7.00" fill="none" stroke="#f4f4f4" stroke-width="1.692" stroke-linecap="round" stroke-linejoin="round" />
<path transform="translate(838 704) scale(0.65 0.65) translate(-2.75 -5)" d="M0.80 2.00 L3.00 0.00 L3.00 10.00 M0.50 10.00 L5.50 10.00" fill="none" stroke="#f4f4f4" stroke-width="1.692" stroke-linecap="round" stroke-linejoin="round" />
<path transform="translate(838 744) scale(0.65 0.65) translate(-3.00 -5)" d="M0.00 1.50 L1.00 0.20 L2.00 0.00 L4.50 0.00 L5.70 1.00 L6.00 2.20 L6.00 3.50 L5.50 4.50 L0.00 10.00 L6.00 10.00" fill="none" stroke="#f4f4f4" stroke-width="1.692" stroke-linecap="round" stroke-linejoin="round" />
<path transform="translate(938 704) scale(0.65 0.65) translate(-3.00 -5)" d="M0.30 0.00 L6.00 0.00 L2.80 4.00 L4.00 4.00 L5.50 5.00 L6.00 6.50 L6.00 8.50 L5.00 9.70 L4.00 10.00 L1.50 10.00 L0.30 9.30" fill="none" stroke="#f4f4f4" stroke-width="1.692" stroke-linecap="round" stroke-linejoin="round" />
<path transform="translate(938 744) scale(0.65 0.65) translate(-3.10 -5)" d="M4.50 10.00 L4.50 0.00 L0.00 7.00 L6.20 7.00" fill="none" stroke="#f4f4f4" stroke-width="1.692" stroke-linecap="round" stroke-linejoin="round" />
<path transform="translate(838 840) scale(0.65 0.65) translate(-2.75 -5)" d="M0.80 2.00 L3.00 0.00 L3.00 10.00 M0.50 10.00 L5.50 10.00" fill="none" stroke="#f4f4f4" stroke-width="1.692" stroke-linecap="round" stroke-linejoin="round" />
<path transform="translate(838 880) scale(0.65 0.65) translate(-3.00 -5)" d="M0.00 1.50 L1.00 0.20 L2.00 0.00 L4.50 0.00 L5.70 1.00 L6.00 2.20 L6.00 3.50 L5.50 4.50 L0.00 10.00 L6.00 10.00" fill="none" stroke="#f4f4f4" stroke-width="1.692" stroke-linecap="round" stroke-linejoin="round" />
<path transform="translate(938 840) scale(0.65 0.65) translate(-3.00 -5)" d="M0.30 0.00 L6.00 0.00 L2.80 4.00 L4.00 4.00 L5.50 5.00 L6.00 6.50 L6.00 8.50 L5.00 9.70 L4.00 10.00 L1.50 10.00 L0.30 9.30" fill="none" stroke="#f4f4f4" stroke-width="1.692" stroke-linecap="round" stroke-linejoin="round" />
<path transform="translate(938 880) scale(0.65 0.65) translate(-3.10 -5)" d="M4.50 10.00 L4.50 0.00 L0.00 7.00 L6.20 7.00" fill="none" stroke="#f4f4f4" stroke-width="1.692" stroke-linecap="round" stroke-linejoin="round" />
<path transform="translate(988 424) scale(0.65 0.65) translate(-2.75 -5)" d="M0.80 2.00 L3.00 0.00 L3.00 10.00 M0.50 10.00 L5.50 10.00" fill="none" stroke="#f4f4f4" stroke-width="1.692" stroke-linecap="round" stroke-linejoin="round" />
<path transform="translate(988 464) scale(0.65 0.65) translate(-3.00 -5)" d="M0.00 1.50 L1.00 0.20 L2.00 0.00 L4.50 0.00 L5.70 1.00 L6.00 2.20 L6.00 3.50 L5.50 4.50 L0.00 10.00 L6.00 10.00" fill="none" stroke="#f4f4f4" stroke-width="1.692" stroke-linecap="round" stroke-linejoin="round" />
<path transform="translate(1088 423) scale(0.65 0.65) translate(-3.00 -5)" d="M0.30 0.00 L6.00 0.00 L2.80 4.00 L4.00 4.00 L5.50 5.00 L6.00 6.50 L6.00 8.50 L5.00 9.70 L4.00 10.00 L1.50 10.00 L0.30 9.30" fill="none" stroke="#f4f4f4" stroke-width="1.692" stroke-linecap="round" stroke-linejoin="round" />
<path transform="translate(1088 430) scale(0.55 0.55) translate(-15.30 -5)" d="M3.00 2.50 L3.00 8.50 M0.00 5.50 L6.00 5.50 M13.70 0.00 L9.20 0.00 L8.70 4.50 L9.70 4.00 L12.20 4.00 L13.70 4.80 L14.20 6.20 L14.20 8.50 L13.20 9.70 L12.20 10.00 L9.70 10.00 L8.50 9.30 M16.40 0.00 L19.40 10.00 L22.40 0.00 M24.60 10.00 L27.60 0.00 L30.60 10.00 M25.70 6.50 L29.50 6.50" fill="none" stroke="#f4f4f4" stroke-width="1.818" stroke-linecap="round" stroke-linejoin="round" />
<path transform="translate(1088 464) scale(0.65 0.65) translate(-3.10 -5)" d="M4.50 10.00 L4.50 0.00 L0.00 7.00 L6.20 7.00" fill="none" stroke="#f4f4f4" stroke-width="1.692" stroke-linecap="round" stroke-linejoin="round" />
<path transform="translate(988 564) scale(0.65 0.65) translate(-2.75 -5)" d="M0.80 2.00 L3.00 0.00 L3.00 10.00 M0.50 10.00 L5.50 10.00" fill="none" stroke="#f4f4f4" stroke-width="1.692" stroke-linecap="round" stroke-linejoin="round" />
<path transform="translate(988 604) scale(0.65 0.65) translate(-3.00 -5)" d="M0.00 1.50 L1.00 0.20 L2.00 0.00 L4.50 0.00 L5.70 1.00 L6.00 2.20 L6.00 3.50 L5.50 4.50 L0.00 10.00 L6.00 10.00" fill="none" stroke="#f4f4f4" stroke-width="1.692" stroke-linecap="round" stroke-linejoin="round" />
<path transform="translate(1088 564) scale(0.65 0.65) translate(-3.00 -5)" d="M0.30 0.00 L6.00 0.00 L2.80 4.00 L4.00 4.00 L5.50 5.00 L6.00 6.50 L6.00 8.50 L5.00 9.70 L4.00 10.00 L1.50 10.00 L0.30 9.30" fill="none" stroke="#f4f4f4" stroke-width="1.692" stroke-linecap="round" stroke-linejoin="round" />
<path transform="translate(1088 604) scale(0.65 0.65) translate(-3.10 -5)" d="M4.50 10.00 L4.50 0.00 L0.00 7.00 L6.20 7.00" fill="none" stroke="#f4f4f4" stroke-width="1.692" stroke-linecap="round" stroke-linejoin="round" />
<path transform="translate(988 704) scale(0.65 0.65) translate(-2.75 -5)" d="M0.80 2.00 L3.00 0.00 L3.00 10.00 M0.50 10.00 L5.50 10.00" fill="none" stroke="#f4f4f4" stroke-width="1.692" stroke-linecap="round" stroke-linejoin="round" />
<path transform="translate(988 744) scale(0.65 0.65) translate(-3.00 -5)" d="M0.00 1.50 L1.00 0.20 L2.00 0.00 L4.50 0.00 L5.70 1.00 L6.00 2.20 L6.00 3.50 L5.50 4.50 L0.00 10.00 L6.00 10.00" fill="none" stroke="#f4f4f4" stroke-width="1.692" stroke-linecap="round" stroke-linejoin="round" />
<path transform="translate(1088 704) scale(0.65 0.65) translate(-3.00 -5)" d="M0.30 0.00 L6.00 0.00 L2.80 4.00 L4.00 4.00 L5.50 5.00 L6.00 6.50 L6.00 8.50 L5.00 9.70 L4.00 10.00 L1.50 10.00 L0.30 9.30" fill="none" stroke="#f4f4f4" stroke-width="1.692" stroke-linecap="round" stroke-linejoin="round" />
<path transform="translate(1088 744) scale(0.65 0.65) translate(-3.10 -5)" d="M4.50 10.00 L4.50 0.00 L0.00 7.00 L6.20 7.00" fill="none" stroke="#f4f4f4" stroke-width="1.692" stroke-linecap="round" stroke-linejoin="round" />
<path transform="translate(988 840) scale(0.65 0.65) translate(-2.75 -5)" d="M0.80 2.00 L3.00 0.00 L3.00 10.00 M0.50 10.00 L5.50 10.00" fill="none" stroke="#f4f4f4" stroke-width="1.692" stroke-linecap="round" stroke-linejoin="round" />
<path transform="translate(988 880) scale(0.65 0.65) translate(-3.00 -5)" d="M0.00 1.50 L1.00 0.20 L2.00 0.00 L4.50 0.00 L5.70 1.00 L6.00 2.20 L6.00 3.50 L5.50 4.50 L0.00 10.00 L6.00 10.00" fill="none" stroke="#f4f4f4" stroke-width="1.692" stroke-linecap="round" stroke-linejoin="round" />
<path transform="translate(1088 840) scale(0.65 0.65) translate(-3.00 -5)" d="M0.30 0.00 L6.00 0.00 L2.80 4.00 L4.00 4.00 L5.50 5.00 L6.00 6.50 L6.00 8.50 L5.00 9.70 L4.00 10.00 L1.50 10.00 L0.30 9.30" fill="none" stroke="#f4f4f4" stroke-width="1.692" stroke-linecap="round" stroke-linejoin="round" />
<path transform="translate(1088 880) scale(0.65 0.65) translate(-3.10 -5)" d="M4.50 10.00 L4.50 0.00 L0.00 7.00 L6.20 7.00" fill="none" stroke="#f4f4f4" stroke-width="1.692" stroke-linecap="round" stroke-linejoin="round" />
<path transform="translate(1138 424) scale(0.65 0.65) translate(-2.75 -5)" d="M0.80 2.00 L3.00 0.00 L3.00 10.00 M0.50 10.00 L5.50 10.00" fill="none" stroke="#f4f4f4" stroke-width="1.692" stroke-linecap="round" stroke-linejoin="round" />
<path transform="translate(1138 464) scale(0.65 0.65) translate(-3.00 -5)" d="M0.00 1.50 L1.00 0.20 L2.00 0.00 L4.50 0.00 L5.70 1.00 L6.00 2.20 L6.00 3.50 L5.50 4.50 L0.00 10.00 L6.00 10.00" fill="none" stroke="#f4f4f4" stroke-width="1.692" stroke-linecap="round" stroke-linejoin="round" />
<path transform="translate(1238 423) scale(0.65 0.65) translate(-3.00 -5)" d="M0.30 0.00 L6.00 0.00 L2.80 4.00 L4.00 4.00 L5.50 5.00 L6.00 6.50 L6.00 8.50 L5.00 9.70 L4.00 10.00 L1.50 10.00 L0.30 9.30" fill="none" stroke="#f4f4f4" stroke-width="1.692" stroke-linecap="round" stroke-linejoin="round" />
<path transform="translate(1238 430) scale(0.55 0.55) translate(-15.30 -5)" d="M3.00 2.50 L3.00 8.50 M0.00 5.50 L6.00 5.50 M13.70 0.00 L9.20 0.00 L8.70 4.50 L9.70 4.00 L12.20 4.00 L13.70 4.80 L14.20 6.20 L14.20 8.50 L13.20 9.70 L12.20 10.00 L9.70 10.00 L8.50 9.30 M16.40 0.00 L19.40 10.00 L22.40 0.00 M24.60 10.00 L27.60 0.00 L30.60 10.00 M25.70 6.50 L29.50 6.50" fill="none" stroke="#f4f4f4" stroke-width="1.818" stroke-linecap="round" stroke-linejoin="round" />
<path transform="translate(1238 464) scale(0.65 0.65) translate(-3.10 -5)" d="M4.50 10.00 L4.50 0.00 L0.00 7.00 L6.20 7.00" fill="none" stroke="#f4f4f4" stroke-width="1.692" stroke-linecap="round" stroke-linejoin="round" />
<path transform="translate(1138 564) scale(0.65 0.65) translate(-2.75 -5)" d="M0.80 2.00 L3.00 0.00 L3.00 10.00 M0.50 10.00 L5.50 10.00" fill="none" stroke="#f4f4f4" stroke-width="1.692" stroke-linecap="round" stroke-linejoin="round" />
<path transform="translate(1138 604) scale(0.65 0.65) translate(-3.00 -5)" d="M0.00 1.50 L1.00 0.20 L2.00 0.00 L4.50 0.00 L5.70 1.00 L6.00 2.20 L6.00 3.50 L5.50 4.50 L0.00 10.00 L6.00 10.00" fill="none" stroke="#f4f4f4" stroke-width="1.692" stroke-linecap="round" stroke-linejoin="round" />
<path transform="translate(1238 564) scale(0.65 0.65) translate(-3.00 -5)" d="M0.30 0.00 L6.00 0.00 L2.80 4.00 L4.00 4.00 L5.50 5.00 L6.00 6.50 L6.00 8.50 L5.00 9.70 L4.00 10.00 L1.50 10.00 L0.30 9.30" fill="none" stroke="#f4f4f4" stroke-width="1.692" stroke-linecap="round" stroke-linejoin="round" />
<path transform="translate(1238 604) scale(0.65 0.65) translate(-3.10 -5)" d="M4.50 10.00 L4.50 0.00 L0.00 7.00 L6.20 7.00" fill="none" stroke="#f4f4f4" stroke-width="1.692" stroke-linecap="round" stroke-linejoin="round" />
<path transform="translate(1138 704) scale(0.65 0.65) translate(-2.75 -5)" d="M0.80 2.00 L3.00 0.00 L3.00 10.00 M0.50 10.00 L5.50 10.00" fill="none" stroke="#f4f4f4" stroke-width="1.692" stroke-linecap="round" stroke-linejoin="round" />
<path transform="translate(1138 744) scale(0.65 0.65) translate(-3.00 -5)" d="M0.00 1.50 L1.00 0.20 L2.00 0.00 L4.50 0.00 L5.70 1.00 L6.00 2.20 L6.00 3.50 L5.50 4.50 L0.00 10.00 L6.00 10.00" fill="none" stroke="#f4f4f4" stroke-width="1.692" stroke-linecap="round" stroke-linejoin="round" />
<path transform="translate(1238 704) scale(0.65 0.65) translate(-3.00 -5)" d="M0.30 0.00 L6.00 0.00 L2.80 4.00 L4.00 4.00 L5.50 5.00 L6.00 6.50 L6.00 8.50 L5.00 9.70 L4.00 10.00 L1.50 10.00 L0.30 9.30" fill="none" stroke="#f4f4f4" stroke-width="1.692" stroke-linecap="round" stroke-linejoin="round" />
<path transform="translate(1238 744) scale(0.65 0.65) translate(-3.10 -5)" d="M4.50 10.00 L4.50 0.00 L0.00 7.00 L6.20 7.00" fill="none" stroke="#f4f4f4" stroke-width="1.692" stroke-linecap="round" stroke-linejoin="round" />
<path transform="translate(1138 840) scale(0.65 0.65) translate(-2.75 -5)" d="M0.80 2.00 L3.00 0.00 L3.00 10.00 M0.50 10.00 L5.50 10.00" fill="none" stroke="#f4f4f4" stroke-width="1.692" stroke-linecap="round" stroke-linejoin="round" />
<path transform="translate(1138 880) scale(0.65 0.65) translate(-3.00 -5)" d="M0.00 1.50 L1.00 0.20 L2.00 0.00 L4.50 0.00 L5.70 1.00 L6.00 2.20 L6.00 3.50 L5.50 4.50 L0.00 10.00 L6.00 10.00" fill="none" stroke="#f4f4f4" stroke-width="1.692" stroke-linecap="round" stroke-linejoin="round" />
<path transform="translate(1238 840) scale(0.65 0.65) translate(-3.00 -5)" d="M0.30 0.00 L6.00 0.00 L2.80 4.00 L4.00 4.00 L5.50 5.00 L6.00 6.50 L6.00 8.50 L5.00 9.70 L4.00 10.00 L1.50 10.00 L0.30 9.30" fill="none" stroke="#f4f4f4" stroke-width="1.692" stroke-linecap="round" stroke-linejoin="round" />
<path transform="translate(1238 880) scale(0.65 0.65) translate(-3.10 -5)" d="M4.50 10.00 L4.50 0.00 L0.00 7.00 L6.20 7.00" fill="none" stroke="#f4f4f4" stroke-width="1.692" stroke-linecap="round" stroke-linejoin="round" />
<path transform="translate(938 960) scale(0.65 0.65) translate(-2.75 -5)" d="M0.80 2.00 L3.00 0.00 L3.00 10.00 M0.50 10.00 L5.50 10.00" fill="none" stroke="#f4f4f4" stroke-width="1.692" stroke-linecap="round" stroke-linejoin="round" />
<path transform="translate(938 1000) scale(0.65 0.65) translate(-3.00 -5)" d="M0.00 1.50 L1.00 0.20 L2.00 0.00 L4.50 0.00 L5.70 1.00 L6.00 2.20 L6.00 3.50 L5.50 4.50 L0.00 10.00 L6.00 10.00" fill="none" stroke="#f4f4f4" stroke-width="1.692" stroke-linecap="round" stroke-linejoin="round" />
<path transform="translate(1038 960) scale(0.65 0.65) translate(-3.00 -5)" d="M0.30 0.00 L6.00 0.00 L2.80 4.00 L4.00 4.00 L5.50 5.00 L6.00 6.50 L6.00 8.50 L5.00 9.70 L4.00 10.00 L1.50 10.00 L0.30 9.30" fill="none" stroke="#f4f4f4" stroke-width="1.692" stroke-linecap="round" stroke-linejoin="round" />
<path transform="translate(1038 999) scale(0.65 0.65) translate(-3.10 -5)" d="M4.50 10.00 L4.50 0.00 L0.00 7.00 L6.20 7.00" fill="none" stroke="#f4f4f4" stroke-width="1.692" stroke-linecap="round" stroke-linejoin="round" />
<path transform="translate(1038 1006) scale(0.55 0.55) translate(-15.30 -5)" d="M3.00 2.50 L3.00 8.50 M0.00 5.50 L6.00 5.50 M13.70 0.00 L9.20 0.00 L8.70 4.50 L9.70 4.00 L12.20 4.00 L13.70 4.80 L14.20 6.20 L14.20 8.50 L13.20 9.70 L12.20 10.00 L9.70 10.00 L8.50 9.30 M16.40 0.00 L19.40 10.00 L22.40 0.00 M24.60 10.00 L27.60 0.00 L30.60 10.00 M25.70 6.50 L29.50 6.50" fill="none" stroke="#f4f4f4" stroke-width="1.818" stroke-linecap="round" stroke-linejoin="round" />
<path transform="translate(865 517) scale(0.78 0.78) translate(-39.90 -5)" d="M0.00 10.00 L0.00 0.00 L6.00 10.00 L6.00 0.00 M9.20 5.50 L14.20 5.50 M18.20 0.00 L20.60 0.00 L21.90 0.80 L22.40 2.20 L22.40 7.80 L21.90 9.20 L20.60 10.00 L18.20 10.00 L16.90 9.20 L16.40 7.80 L16.40 2.20 L16.90 0.80 L18.20 0.00 M26.40 0.00 L28.80 0.00 L30.10 0.80 L30.60 2.20 L30.60 7.80 L30.10 9.20 L28.80 10.00 L26.40 10.00 L25.10 9.20 L24.60 7.80 L24.60 2.20 L25.10 0.80 L26.40 0.00 M34.60 0.00 L37.00 0.00 L38.30 0.80 L38.80 2.20 L38.80 7.80 L38.30 9.20 L37.00 10.00 L34.60 10.00 L33.30 9.20 L32.80 7.80 L32.80 2.20 L33.30 0.80 L34.60 0.00 M42.80 0.00 L45.20 0.00 L46.50 0.80 L47.00 2.20 L47.00 7.80 L46.50 9.20 L45.20 10.00 L42.80 10.00 L41.50 9.20 L41.00 7.80 L41.00 2.20 L41.50 0.80 L42.80 0.00 M51.00 0.00 L53.40 0.00 L54.70 0.80 L55.20 2.20 L55.20 7.80 L54.70 9.20 L53.40 10.00 L51.00 10.00 L49.70 9.20 L49.20 7.80 L49.20 2.20 L49.70 0.80 L51.00 0.00 M58.20 2.00 L60.40 0.00 L60.40 10.00 M57.90 10.00 L62.90 10.00 M67.40 0.00 L69.80 0.00 L71.10 0.80 L71.60 2.20 L71.60 7.80 L71.10 9.20 L69.80 10.00 L67.40 10.00 L66.10 9.20 L65.60 7.80 L65.60 2.20 L66.10 0.80 L67.40 0.00 M79.30 0.00 L74.80 0.00 L74.30 4.50 L75.30 4.00 L77.80 4.00 L79.30 4.80 L79.80 6.20 L79.80 8.50 L78.80 9.70 L77.80 10.00 L75.30 10.00 L74.10 9.30" fill="none" stroke="#ffffff" stroke-width="1.538" stroke-linecap="round" stroke-linejoin="round" />
<path transform="translate(865 657) scale(0.78 0.78) translate(-40.00 -5)" d="M0.00 10.00 L0.00 0.00 L6.00 10.00 L6.00 0.00 M9.20 5.50 L14.20 5.50 M18.20 0.00 L20.60 0.00 L21.90 0.80 L22.40 2.20 L22.40 7.80 L21.90 9.20 L20.60 10.00 L18.20 10.00 L16.90 9.20 L16.40 7.80 L16.40 2.20 L16.90 0.80 L18.20 0.00 M26.40 0.00 L28.80 0.00 L30.10 0.80 L30.60 2.20 L30.60 7.80 L30.10 9.20 L28.80 10.00 L26.40 10.00 L25.10 9.20 L24.60 7.80 L24.60 2.20 L25.10 0.80 L26.40 0.00 M34.60 0.00 L37.00 0.00 L38.30 0.80 L38.80 2.20 L38.80 7.80 L38.30 9.20 L37.00 10.00 L34.60 10.00 L33.30 9.20 L32.80 7.80 L32.80 2.20 L33.30 0.80 L34.60 0.00 M42.80 0.00 L45.20 0.00 L46.50 0.80 L47.00 2.20 L47.00 7.80 L46.50 9.20 L45.20 10.00 L42.80 10.00 L41.50 9.20 L41.00 7.80 L41.00 2.20 L41.50 0.80 L42.80 0.00 M51.00 0.00 L53.40 0.00 L54.70 0.80 L55.20 2.20 L55.20 7.80 L54.70 9.20 L53.40 10.00 L51.00 10.00 L49.70 9.20 L49.20 7.80 L49.20 2.20 L49.70 0.80 L51.00 0.00 M58.20 2.00 L60.40 0.00 L60.40 10.00 M57.90 10.00 L62.90 10.00 M67.40 0.00 L69.80 0.00 L71.10 0.80 L71.60 2.20 L71.60 7.80 L71.10 9.20 L69.80 10.00 L67.40 10.00 L66.10 9.20 L65.60 7.80 L65.60 2.20 L66.10 0.80 L67.40 0.00 M78.30 10.00 L78.30 0.00 L73.80 7.00 L80.00 7.00" fill="none" stroke="#ffffff" stroke-width="1.538" stroke-linecap="round" stroke-linejoin="round" />
<path transform="translate(1015 657) scale(0.78 0.78) translate(-40.00 -5)" d="M0.00 10.00 L0.00 0.00 L6.00 10.00 L6.00 0.00 M9.20 5.50 L14.20 5.50 M18.20 0.00 L20.60 0.00 L21.90 0.80 L22.40 2.20 L22.40 7.80 L21.90 9.20 L20.60 10.00 L18.20 10.00 L16.90 9.20 L16.40 7.80 L16.40 2.20 L16.90 0.80 L18.20 0.00 M26.40 0.00 L28.80 0.00 L30.10 0.80 L30.60 2.20 L30.60 7.80 L30.10 9.20 L28.80 10.00 L26.40 10.00 L25.10 9.20 L24.60 7.80 L24.60 2.20 L25.10 0.80 L26.40 0.00 M34.60 0.00 L37.00 0.00 L38.30 0.80 L38.80 2.20 L38.80 7.80 L38.30 9.20 L37.00 10.00 L34.60 10.00 L33.30 9.20 L32.80 7.80 L32.80 2.20 L33.30 0.80 L34.60 0.00 M42.80 0.00 L45.20 0.00 L46.50 0.80 L47.00 2.20 L47.00 7.80 L46.50 9.20 L45.20 10.00 L42.80 10.00 L41.50 9.20 L41.00 7.80 L41.00 2.20 L41.50 0.80 L42.80 0.00 M51.00 0.00 L53.40 0.00 L54.70 0.80 L55.20 2.20 L55.20 7.80 L54.70 9.20 L53.40 10.00 L51.00 10.00 L49.70 9.20 L49.20 7.80 L49.20 2.20 L49.70 0.80 L51.00 0.00 M58.20 2.00 L60.40 0.00 L60.40 10.00 M57.90 10.00 L62.90 10.00 M67.40 0.00 L69.80 0.00 L71.10 0.80 L71.60 2.20 L71.60 7.80 L71.10 9.20 L69.80 10.00 L67.40 10.00 L66.10 9.20 L65.60 7.80 L65.60 2.20 L66.10 0.80 L67.40 0.00 M78.30 10.00 L78.30 0.00 L73.80 7.00 L80.00 7.00" fill="none" stroke="#ffffff" stroke-width="1.538" stroke-linecap="round" stroke-linejoin="round" />
<path transform="translate(1165 657) scale(0.78 0.78) translate(-40.00 -5)" d="M0.00 10.00 L0.00 0.00 L6.00 10.00 L6.00 0.00 M9.20 5.50 L14.20 5.50 M18.20 0.00 L20.60 0.00 L21.90 0.80 L22.40 2.20 L22.40 7.80 L21.90 9.20 L20.60 10.00 L18.20 10.00 L16.90 9.20 L16.40 7.80 L16.40 2.20 L16.90 0.80 L18.20 0.00 M26.40 0.00 L28.80 0.00 L30.10 0.80 L30.60 2.20 L30.60 7.80 L30.10 9.20 L28.80 10.00 L26.40 10.00 L25.10 9.20 L24.60 7.80 L24.60 2.20 L25.10 0.80 L26.40 0.00 M34.60 0.00 L37.00 0.00 L38.30 0.80 L38.80 2.20 L38.80 7.80 L38.30 9.20 L37.00 10.00 L34.60 10.00 L33.30 9.20 L32.80 7.80 L32.80 2.20 L33.30 0.80 L34.60 0.00 M42.80 0.00 L45.20 0.00 L46.50 0.80 L47.00 2.20 L47.00 7.80 L46.50 9.20 L45.20 10.00 L42.80 10.00 L41.50 9.20 L41.00 7.80 L41.00 2.20 L41.50 0.80 L42.80 0.00 M51.00 0.00 L53.40 0.00 L54.70 0.80 L55.20 2.20 L55.20 7.80 L54.70 9.20 L53.40 10.00 L51.00 10.00 L49.70 9.20 L49.20 7.80 L49.20 2.20 L49.70 0.80 L51.00 0.00 M58.20 2.00 L60.40 0.00 L60.40 10.00 M57.90 10.00 L62.90 10.00 M67.40 0.00 L69.80 0.00 L71.10 0.80 L71.60 2.20 L71.60 7.80 L71.10 9.20 L69.80 10.00 L67.40 10.00 L66.10 9.20 L65.60 7.80 L65.60 2.20 L66.10 0.80 L67.40 0.00 M78.30 10.00 L78.30 0.00 L73.80 7.00 L80.00 7.00" fill="none" stroke="#ffffff" stroke-width="1.538" stroke-linecap="round" stroke-linejoin="round" />
<path transform="translate(865 797) scale(0.78 0.78) translate(-39.90 -5)" d="M0.00 10.00 L0.00 0.00 L6.00 10.00 L6.00 0.00 M9.20 5.50 L14.20 5.50 M18.20 0.00 L20.60 0.00 L21.90 0.80 L22.40 2.20 L22.40 7.80 L21.90 9.20 L20.60 10.00 L18.20 10.00 L16.90 9.20 L16.40 7.80 L16.40 2.20 L16.90 0.80 L18.20 0.00 M26.40 0.00 L28.80 0.00 L30.10 0.80 L30.60 2.20 L30.60 7.80 L30.10 9.20 L28.80 10.00 L26.40 10.00 L25.10 9.20 L24.60 7.80 L24.60 2.20 L25.10 0.80 L26.40 0.00 M34.60 0.00 L37.00 0.00 L38.30 0.80 L38.80 2.20 L38.80 7.80 L38.30 9.20 L37.00 10.00 L34.60 10.00 L33.30 9.20 L32.80 7.80 L32.80 2.20 L33.30 0.80 L34.60 0.00 M42.80 0.00 L45.20 0.00 L46.50 0.80 L47.00 2.20 L47.00 7.80 L46.50 9.20 L45.20 10.00 L42.80 10.00 L41.50 9.20 L41.00 7.80 L41.00 2.20 L41.50 0.80 L42.80 0.00 M51.00 0.00 L53.40 0.00 L54.70 0.80 L55.20 2.20 L55.20 7.80 L54.70 9.20 L53.40 10.00 L51.00 10.00 L49.70 9.20 L49.20 7.80 L49.20 2.20 L49.70 0.80 L51.00 0.00 M58.20 2.00 L60.40 0.00 L60.40 10.00 M57.90 10.00 L62.90 10.00 M67.40 0.00 L69.80 0.00 L71.10 0.80 L71.60 2.20 L71.60 7.80 L71.10 9.20 L69.80 10.00 L67.40 10.00 L66.10 9.20 L65.60 7.80 L65.60 2.20 L66.10 0.80 L67.40 0.00 M78.80 0.00 L77.30 0.20 L75.30 1.50 L74.10 4.00 L73.80 6.50 L74.10 8.80 L75.30 10.00 L78.30 10.00 L79.60 8.80 L79.80 7.20 L79.30 5.50 L78.10 4.60 L75.60 4.60 L74.30 5.50 L73.80 6.50" fill="none" stroke="#ffffff" stroke-width="1.538" stroke-linecap="round" stroke-linejoin="round" />
<path transform="translate(1015 797) scale(0.78 0.78) translate(-39.90 -5)" d="M0.00 10.00 L0.00 0.00 L6.00 10.00 L6.00 0.00 M9.20 5.50 L14.20 5.50 M18.20 0.00 L20.60 0.00 L21.90 0.80 L22.40 2.20 L22.40 7.80 L21.90 9.20 L20.60 10.00 L18.20 10.00 L16.90 9.20 L16.40 7.80 L16.40 2.20 L16.90 0.80 L18.20 0.00 M26.40 0.00 L28.80 0.00 L30.10 0.80 L30.60 2.20 L30.60 7.80 L30.10 9.20 L28.80 10.00 L26.40 10.00 L25.10 9.20 L24.60 7.80 L24.60 2.20 L25.10 0.80 L26.40 0.00 M34.60 0.00 L37.00 0.00 L38.30 0.80 L38.80 2.20 L38.80 7.80 L38.30 9.20 L37.00 10.00 L34.60 10.00 L33.30 9.20 L32.80 7.80 L32.80 2.20 L33.30 0.80 L34.60 0.00 M42.80 0.00 L45.20 0.00 L46.50 0.80 L47.00 2.20 L47.00 7.80 L46.50 9.20 L45.20 10.00 L42.80 10.00 L41.50 9.20 L41.00 7.80 L41.00 2.20 L41.50 0.80 L42.80 0.00 M51.00 0.00 L53.40 0.00 L54.70 0.80 L55.20 2.20 L55.20 7.80 L54.70 9.20 L53.40 10.00 L51.00 10.00 L49.70 9.20 L49.20 7.80 L49.20 2.20 L49.70 0.80 L51.00 0.00 M58.20 2.00 L60.40 0.00 L60.40 10.00 M57.90 10.00 L62.90 10.00 M67.40 0.00 L69.80 0.00 L71.10 0.80 L71.60 2.20 L71.60 7.80 L71.10 9.20 L69.80 10.00 L67.40 10.00 L66.10 9.20 L65.60 7.80 L65.60 2.20 L66.10 0.80 L67.40 0.00 M78.80 0.00 L77.30 0.20 L75.30 1.50 L74.10 4.00 L73.80 6.50 L74.10 8.80 L75.30 10.00 L78.30 10.00 L79.60 8.80 L79.80 7.20 L79.30 5.50 L78.10 4.60 L75.60 4.60 L74.30 5.50 L73.80 6.50" fill="none" stroke="#ffffff" stroke-width="1.538" stroke-linecap="round" stroke-linejoin="round" />
<path transform="translate(1165 797) scale(0.78 0.78) translate(-39.90 -5)" d="M0.00 10.00 L0.00 0.00 L6.00 10.00 L6.00 0.00 M9.20 5.50 L14.20 5.50 M18.20 0.00 L20.60 0.00 L21.90 0.80 L22.40 2.20 L22.40 7.80 L21.90 9.20 L20.60 10.00 L18.20 10.00 L16.90 9.20 L16.40 7.80 L16.40 2.20 L16.90 0.80 L18.20 0.00 M26.40 0.00 L28.80 0.00 L30.10 0.80 L30.60 2.20 L30.60 7.80 L30.10 9.20 L28.80 10.00 L26.40 10.00 L25.10 9.20 L24.60 7.80 L24.60 2.20 L25.10 0.80 L26.40 0.00 M34.60 0.00 L37.00 0.00 L38.30 0.80 L38.80 2.20 L38.80 7.80 L38.30 9.20 L37.00 10.00 L34.60 10.00 L33.30 9.20 L32.80 7.80 L32.80 2.20 L33.30 0.80 L34.60 0.00 M42.80 0.00 L45.20 0.00 L46.50 0.80 L47.00 2.20 L47.00 7.80 L46.50 9.20 L45.20 10.00 L42.80 10.00 L41.50 9.20 L41.00 7.80 L41.00 2.20 L41.50 0.80 L42.80 0.00 M51.00 0.00 L53.40 0.00 L54.70 0.80 L55.20 2.20 L55.20 7.80 L54.70 9.20 L53.40 10.00 L51.00 10.00 L49.70 9.20 L49.20 7.80 L49.20 2.20 L49.70 0.80 L51.00 0.00 M58.20 2.00 L60.40 0.00 L60.40 10.00 M57.90 10.00 L62.90 10.00 M67.40 0.00 L69.80 0.00 L71.10 0.80 L71.60 2.20 L71.60 7.80 L71.10 9.20 L69.80 10.00 L67.40 10.00 L66.10 9.20 L65.60 7.80 L65.60 2.20 L66.10 0.80 L67.40 0.00 M78.80 0.00 L77.30 0.20 L75.30 1.50 L74.10 4.00 L73.80 6.50 L74.10 8.80 L75.30 10.00 L78.30 10.00 L79.60 8.80 L79.80 7.20 L79.30 5.50 L78.10 4.60 L75.60 4.60 L74.30 5.50 L73.80 6.50" fill="none" stroke="#ffffff" stroke-width="1.538" stroke-linecap="round" stroke-linejoin="round" />
<path transform="translate(779 967) scale(0.78 0.78) translate(-35.80 -5)" d="M0.00 10.00 L0.00 0.00 L6.00 10.00 L6.00 0.00 M9.20 5.50 L14.20 5.50 M18.20 0.00 L20.60 0.00 L21.90 0.80 L22.40 2.20 L22.40 7.80 L21.90 9.20 L20.60 10.00 L18.20 10.00 L16.90 9.20 L16.40 7.80 L16.40 2.20 L16.90 0.80 L18.20 0.00 M26.40 0.00 L28.80 0.00 L30.10 0.80 L30.60 2.20 L30.60 7.80 L30.10 9.20 L28.80 10.00 L26.40 10.00 L25.10 9.20 L24.60 7.80 L24.60 2.20 L25.10 0.80 L26.40 0.00 M34.60 0.00 L37.00 0.00 L38.30 0.80 L38.80 2.20 L38.80 7.80 L38.30 9.20 L37.00 10.00 L34.60 10.00 L33.30 9.20 L32.80 7.80 L32.80 2.20 L33.30 0.80 L34.60 0.00 M42.80 0.00 L45.20 0.00 L46.50 0.80 L47.00 2.20 L47.00 7.80 L46.50 9.20 L45.20 10.00 L42.80 10.00 L41.50 9.20 L41.00 7.80 L41.00 2.20 L41.50 0.80 L42.80 0.00 M51.00 0.00 L53.40 0.00 L54.70 0.80 L55.20 2.20 L55.20 7.80 L54.70 9.20 L53.40 10.00 L51.00 10.00 L49.70 9.20 L49.20 7.80 L49.20 2.20 L49.70 0.80 L51.00 0.00 M58.40 10.00 L59.90 9.80 L61.90 8.50 L63.10 6.00 L63.40 3.50 L63.10 1.20 L61.90 0.00 L58.90 0.00 L57.60 1.20 L57.40 2.80 L57.90 4.50 L59.10 5.40 L61.60 5.40 L62.90 4.50 L63.40 3.50 M66.60 10.00 L68.10 9.80 L70.10 8.50 L71.30 6.00 L71.60 3.50 L71.30 1.20 L70.10 0.00 L67.10 0.00 L65.80 1.20 L65.60 2.80 L66.10 4.50 L67.30 5.40 L69.80 5.40 L71.10 4.50 L71.60 3.50" fill="none" stroke="#ffffff" stroke-width="1.538" stroke-linecap="round" stroke-linejoin="round" />
<path transform="translate(904 967) scale(0.78 0.78) translate(-35.80 -5)" d="M0.00 10.00 L0.00 0.00 L6.00 10.00 L6.00 0.00 M9.20 5.50 L14.20 5.50 M18.20 0.00 L20.60 0.00 L21.90 0.80 L22.40 2.20 L22.40 7.80 L21.90 9.20 L20.60 10.00 L18.20 10.00 L16.90 9.20 L16.40 7.80 L16.40 2.20 L16.90 0.80 L18.20 0.00 M26.40 0.00 L28.80 0.00 L30.10 0.80 L30.60 2.20 L30.60 7.80 L30.10 9.20 L28.80 10.00 L26.40 10.00 L25.10 9.20 L24.60 7.80 L24.60 2.20 L25.10 0.80 L26.40 0.00 M34.60 0.00 L37.00 0.00 L38.30 0.80 L38.80 2.20 L38.80 7.80 L38.30 9.20 L37.00 10.00 L34.60 10.00 L33.30 9.20 L32.80 7.80 L32.80 2.20 L33.30 0.80 L34.60 0.00 M42.80 0.00 L45.20 0.00 L46.50 0.80 L47.00 2.20 L47.00 7.80 L46.50 9.20 L45.20 10.00 L42.80 10.00 L41.50 9.20 L41.00 7.80 L41.00 2.20 L41.50 0.80 L42.80 0.00 M51.00 0.00 L53.40 0.00 L54.70 0.80 L55.20 2.20 L55.20 7.80 L54.70 9.20 L53.40 10.00 L51.00 10.00 L49.70 9.20 L49.20 7.80 L49.20 2.20 L49.70 0.80 L51.00 0.00 M58.40 10.00 L59.90 9.80 L61.90 8.50 L63.10 6.00 L63.40 3.50 L63.10 1.20 L61.90 0.00 L58.90 0.00 L57.60 1.20 L57.40 2.80 L57.90 4.50 L59.10 5.40 L61.60 5.40 L62.90 4.50 L63.40 3.50 M66.60 10.00 L68.10 9.80 L70.10 8.50 L71.30 6.00 L71.60 3.50 L71.30 1.20 L70.10 0.00 L67.10 0.00 L65.80 1.20 L65.60 2.80 L66.10 4.50 L67.30 5.40 L69.80 5.40 L71.10 4.50 L71.60 3.50" fill="none" stroke="#ffffff" stroke-width="1.538" stroke-linecap="round" stroke-linejoin="round" />
<path transform="translate(1027 967) scale(0.78 0.78) translate(-35.80 -5)" d="M0.00 10.00 L0.00 0.00 L6.00 10.00 L6.00 0.00 M9.20 5.50 L14.20 5.50 M18.20 0.00 L20.60 0.00 L21.90 0.80 L22.40 2.20 L22.40 7.80 L21.90 9.20 L20.60 10.00 L18.20 10.00 L16.90 9.20 L16.40 7.80 L16.40 2.20 L16.90 0.80 L18.20 0.00 M26.40 0.00 L28.80 0.00 L30.10 0.80 L30.60 2.20 L30.60 7.80 L30.10 9.20 L28.80 10.00 L26.40 10.00 L25.10 9.20 L24.60 7.80 L24.60 2.20 L25.10 0.80 L26.40 0.00 M34.60 0.00 L37.00 0.00 L38.30 0.80 L38.80 2.20 L38.80 7.80 L38.30 9.20 L37.00 10.00 L34.60 10.00 L33.30 9.20 L32.80 7.80 L32.80 2.20 L33.30 0.80 L34.60 0.00 M42.80 0.00 L45.20 0.00 L46.50 0.80 L47.00 2.20 L47.00 7.80 L46.50 9.20 L45.20 10.00 L42.80 10.00 L41.50 9.20 L41.00 7.80 L41.00 2.20 L41.50 0.80 L42.80 0.00 M51.00 0.00 L53.40 0.00 L54.70 0.80 L55.20 2.20 L55.20 7.80 L54.70 9.20 L53.40 10.00 L51.00 10.00 L49.70 9.20 L49.20 7.80 L49.20 2.20 L49.70 0.80 L51.00 0.00 M58.40 10.00 L59.90 9.80 L61.90 8.50 L63.10 6.00 L63.40 3.50 L63.10 1.20 L61.90 0.00 L58.90 0.00 L57.60 1.20 L57.40 2.80 L57.90 4.50 L59.10 5.40 L61.60 5.40 L62.90 4.50 L63.40 3.50 M66.60 10.00 L68.10 9.80 L70.10 8.50 L71.30 6.00 L71.60 3.50 L71.30 1.20 L70.10 0.00 L67.10 0.00 L65.80 1.20 L65.60 2.80 L66.10 4.50 L67.30 5.40 L69.80 5.40 L71.10 4.50 L71.60 3.50" fill="none" stroke="#ffffff" stroke-width="1.538" stroke-linecap="round" stroke-linejoin="round" />
<path transform="translate(860 397) scale(0.78 0.78) translate(-15.30 -5)" d="M3.00 2.50 L3.00 8.50 M0.00 5.50 L6.00 5.50 M13.70 0.00 L9.20 0.00 L8.70 4.50 L9.70 4.00 L12.20 4.00 L13.70 4.80 L14.20 6.20 L14.20 8.50 L13.20 9.70 L12.20 10.00 L9.70 10.00 L8.50 9.30 M16.40 0.00 L19.40 10.00 L22.40 0.00 M24.60 10.00 L27.60 0.00 L30.60 10.00 M25.70 6.50 L29.50 6.50" fill="none" stroke="#ffffff" stroke-width="1.538" stroke-linecap="round" stroke-linejoin="round" />
<path transform="translate(1014 397) scale(0.78 0.78) translate(-15.30 -5)" d="M3.00 2.50 L3.00 8.50 M0.00 5.50 L6.00 5.50 M13.70 0.00 L9.20 0.00 L8.70 4.50 L9.70 4.00 L12.20 4.00 L13.70 4.80 L14.20 6.20 L14.20 8.50 L13.20 9.70 L12.20 10.00 L9.70 10.00 L8.50 9.30 M16.40 0.00 L19.40 10.00 L22.40 0.00 M24.60 10.00 L27.60 0.00 L30.60 10.00 M25.70 6.50 L29.50 6.50" fill="none" stroke="#ffffff" stroke-width="1.538" stroke-linecap="round" stroke-linejoin="round" />
<path transform="translate(1169 397) scale(0.78 0.78) translate(-15.30 -5)" d="M3.00 2.50 L3.00 8.50 M0.00 5.50 L6.00 5.50 M13.70 0.00 L9.20 0.00 L8.70 4.50 L9.70 4.00 L12.20 4.00 L13.70 4.80 L14.20 6.20 L14.20 8.50 L13.20 9.70 L12.20 10.00 L9.70 10.00 L8.50 9.30 M16.40 0.00 L19.40 10.00 L22.40 0.00 M24.60 10.00 L27.60 0.00 L30.60 10.00 M25.70 6.50 L29.50 6.50" fill="none" stroke="#ffffff" stroke-width="1.538" stroke-linecap="round" stroke-linejoin="round" />
<path transform="translate(964 985) scale(0.78 0.78) translate(-15.30 -5)" d="M3.00 2.50 L3.00 8.50 M0.00 5.50 L6.00 5.50 M13.70 0.00 L9.20 0.00 L8.70 4.50 L9.70 4.00 L12.20 4.00 L13.70 4.80 L14.20 6.20 L14.20 8.50 L13.20 9.70 L12.20 10.00 L9.70 10.00 L8.50 9.30 M16.40 0.00 L19.40 10.00 L22.40 0.00 M24.60 10.00 L27.60 0.00 L30.60 10.00 M25.70 6.50 L29.50 6.50" fill="none" stroke="#ffffff" stroke-width="1.538" stroke-linecap="round" stroke-linejoin="round" />
<path transform="translate(1195 1003) scale(0.78 0.78) translate(-15.30 -5)" d="M3.00 2.50 L3.00 8.50 M0.00 5.50 L6.00 5.50 M13.70 0.00 L9.20 0.00 L8.70 4.50 L9.70 4.00 L12.20 4.00 L13.70 4.80 L14.20 6.20 L14.20 8.50 L13.20 9.70 L12.20 10.00 L9.70 10.00 L8.50 9.30 M16.40 0.00 L19.40 10.00 L22.40 0.00 M24.60 10.00 L27.60 0.00 L30.60 10.00 M25.70 6.50 L29.50 6.50" fill="none" stroke="#ffffff" stroke-width="1.538" stroke-linecap="round" stroke-linejoin="round" />
<path transform="translate(688 657) rotate(-90) scale(0.72 0.72) translate(-39.90 -5)" d="M0.00 10.00 L0.00 0.00 L6.00 10.00 L6.00 0.00 M9.20 5.50 L14.20 5.50 M18.20 0.00 L20.60 0.00 L21.90 0.80 L22.40 2.20 L22.40 7.80 L21.90 9.20 L20.60 10.00 L18.20 10.00 L16.90 9.20 L16.40 7.80 L16.40 2.20 L16.90 0.80 L18.20 0.00 M26.40 0.00 L28.80 0.00 L30.10 0.80 L30.60 2.20 L30.60 7.80 L30.10 9.20 L28.80 10.00 L26.40 10.00 L25.10 9.20 L24.60 7.80 L24.60 2.20 L25.10 0.80 L26.40 0.00 M34.60 0.00 L37.00 0.00 L38.30 0.80 L38.80 2.20 L38.80 7.80 L38.30 9.20 L37.00 10.00 L34.60 10.00 L33.30 9.20 L32.80 7.80 L32.80 2.20 L33.30 0.80 L34.60 0.00 M42.80 0.00 L45.20 0.00 L46.50 0.80 L47.00 2.20 L47.00 7.80 L46.50 9.20 L45.20 10.00 L42.80 10.00 L41.50 9.20 L41.00 7.80 L41.00 2.20 L41.50 0.80 L42.80 0.00 M51.00 0.00 L53.40 0.00 L54.70 0.80 L55.20 2.20 L55.20 7.80 L54.70 9.20 L53.40 10.00 L51.00 10.00 L49.70 9.20 L49.20 7.80 L49.20 2.20 L49.70 0.80 L51.00 0.00 M59.20 0.00 L61.60 0.00 L62.90 0.80 L63.40 2.20 L63.40 7.80 L62.90 9.20 L61.60 10.00 L59.20 10.00 L57.90 9.20 L57.40 7.80 L57.40 2.20 L57.90 0.80 L59.20 0.00 M66.60 10.00 L68.10 9.80 L70.10 8.50 L71.30 6.00 L71.60 3.50 L71.30 1.20 L70.10 0.00 L67.10 0.00 L65.80 1.20 L65.60 2.80 L66.10 4.50 L67.30 5.40 L69.80 5.40 L71.10 4.50 L71.60 3.50 M74.80 10.00 L76.30 9.80 L78.30 8.50 L79.50 6.00 L79.80 3.50 L79.50 1.20 L78.30 0.00 L75.30 0.00 L74.00 1.20 L73.80 2.80 L74.30 4.50 L75.50 5.40 L78.00 5.40 L79.30 4.50 L79.80 3.50" fill="none" stroke="#ffffff" stroke-width="1.528" stroke-linecap="round" stroke-linejoin="round" />
<path transform="translate(688 797) rotate(-90) scale(0.72 0.72) translate(-39.90 -5)" d="M0.00 10.00 L0.00 0.00 L6.00 10.00 L6.00 0.00 M9.20 5.50 L14.20 5.50 M18.20 0.00 L20.60 0.00 L21.90 0.80 L22.40 2.20 L22.40 7.80 L21.90 9.20 L20.60 10.00 L18.20 10.00 L16.90 9.20 L16.40 7.80 L16.40 2.20 L16.90 0.80 L18.20 0.00 M26.40 0.00 L28.80 0.00 L30.10 0.80 L30.60 2.20 L30.60 7.80 L30.10 9.20 L28.80 10.00 L26.40 10.00 L25.10 9.20 L24.60 7.80 L24.60 2.20 L25.10 0.80 L26.40 0.00 M34.60 0.00 L37.00 0.00 L38.30 0.80 L38.80 2.20 L38.80 7.80 L38.30 9.20 L37.00 10.00 L34.60 10.00 L33.30 9.20 L32.80 7.80 L32.80 2.20 L33.30 0.80 L34.60 0.00 M42.80 0.00 L45.20 0.00 L46.50 0.80 L47.00 2.20 L47.00 7.80 L46.50 9.20 L45.20 10.00 L42.80 10.00 L41.50 9.20 L41.00 7.80 L41.00 2.20 L41.50 0.80 L42.80 0.00 M51.00 0.00 L53.40 0.00 L54.70 0.80 L55.20 2.20 L55.20 7.80 L54.70 9.20 L53.40 10.00 L51.00 10.00 L49.70 9.20 L49.20 7.80 L49.20 2.20 L49.70 0.80 L51.00 0.00 M59.20 0.00 L61.60 0.00 L62.90 0.80 L63.40 2.20 L63.40 7.80 L62.90 9.20 L61.60 10.00 L59.20 10.00 L57.90 9.20 L57.40 7.80 L57.40 2.20 L57.90 0.80 L59.20 0.00 M66.60 10.00 L68.10 9.80 L70.10 8.50 L71.30 6.00 L71.60 3.50 L71.30 1.20 L70.10 0.00 L67.10 0.00 L65.80 1.20 L65.60 2.80 L66.10 4.50 L67.30 5.40 L69.80 5.40 L71.10 4.50 L71.60 3.50 M74.80 10.00 L76.30 9.80 L78.30 8.50 L79.50 6.00 L79.80 3.50 L79.50 1.20 L78.30 0.00 L75.30 0.00 L74.00 1.20 L73.80 2.80 L74.30 4.50 L75.50 5.40 L78.00 5.40 L79.30 4.50 L79.80 3.50" fill="none" stroke="#ffffff" stroke-width="1.528" stroke-linecap="round" stroke-linejoin="round" />
<path transform="translate(838 657) rotate(-90) scale(0.72 0.72) translate(-39.90 -5)" d="M0.00 10.00 L0.00 0.00 L6.00 10.00 L6.00 0.00 M9.20 5.50 L14.20 5.50 M18.20 0.00 L20.60 0.00 L21.90 0.80 L22.40 2.20 L22.40 7.80 L21.90 9.20 L20.60 10.00 L18.20 10.00 L16.90 9.20 L16.40 7.80 L16.40 2.20 L16.90 0.80 L18.20 0.00 M26.40 0.00 L28.80 0.00 L30.10 0.80 L30.60 2.20 L30.60 7.80 L30.10 9.20 L28.80 10.00 L26.40 10.00 L25.10 9.20 L24.60 7.80 L24.60 2.20 L25.10 0.80 L26.40 0.00 M34.60 0.00 L37.00 0.00 L38.30 0.80 L38.80 2.20 L38.80 7.80 L38.30 9.20 L37.00 10.00 L34.60 10.00 L33.30 9.20 L32.80 7.80 L32.80 2.20 L33.30 0.80 L34.60 0.00 M42.80 0.00 L45.20 0.00 L46.50 0.80 L47.00 2.20 L47.00 7.80 L46.50 9.20 L45.20 10.00 L42.80 10.00 L41.50 9.20 L41.00 7.80 L41.00 2.20 L41.50 0.80 L42.80 0.00 M51.00 0.00 L53.40 0.00 L54.70 0.80 L55.20 2.20 L55.20 7.80 L54.70 9.20 L53.40 10.00 L51.00 10.00 L49.70 9.20 L49.20 7.80 L49.20 2.20 L49.70 0.80 L51.00 0.00 M58.20 2.00 L60.40 0.00 L60.40 10.00 M57.90 10.00 L62.90 10.00 M66.40 2.00 L68.60 0.00 L68.60 10.00 M66.10 10.00 L71.10 10.00 M76.80 4.60 L74.80 4.00 L74.10 3.00 L74.10 1.20 L75.30 0.00 L78.30 0.00 L79.50 1.20 L79.50 3.00 L78.80 4.00 L76.80 4.60 L74.80 5.30 L73.80 6.50 L73.80 8.80 L75.00 10.00 L78.60 10.00 L79.80 8.80 L79.80 6.50 L78.80 5.30 L76.80 4.60" fill="none" stroke="#ffffff" stroke-width="1.528" stroke-linecap="round" stroke-linejoin="round" />
<path transform="translate(838 797) rotate(-90) scale(0.72 0.72) translate(-39.90 -5)" d="M0.00 10.00 L0.00 0.00 L6.00 10.00 L6.00 0.00 M9.20 5.50 L14.20 5.50 M18.20 0.00 L20.60 0.00 L21.90 0.80 L22.40 2.20 L22.40 7.80 L21.90 9.20 L20.60 10.00 L18.20 10.00 L16.90 9.20 L16.40 7.80 L16.40 2.20 L16.90 0.80 L18.20 0.00 M26.40 0.00 L28.80 0.00 L30.10 0.80 L30.60 2.20 L30.60 7.80 L30.10 9.20 L28.80 10.00 L26.40 10.00 L25.10 9.20 L24.60 7.80 L24.60 2.20 L25.10 0.80 L26.40 0.00 M34.60 0.00 L37.00 0.00 L38.30 0.80 L38.80 2.20 L38.80 7.80 L38.30 9.20 L37.00 10.00 L34.60 10.00 L33.30 9.20 L32.80 7.80 L32.80 2.20 L33.30 0.80 L34.60 0.00 M42.80 0.00 L45.20 0.00 L46.50 0.80 L47.00 2.20 L47.00 7.80 L46.50 9.20 L45.20 10.00 L42.80 10.00 L41.50 9.20 L41.00 7.80 L41.00 2.20 L41.50 0.80 L42.80 0.00 M51.00 0.00 L53.40 0.00 L54.70 0.80 L55.20 2.20 L55.20 7.80 L54.70 9.20 L53.40 10.00 L51.00 10.00 L49.70 9.20 L49.20 7.80 L49.20 2.20 L49.70 0.80 L51.00 0.00 M58.20 2.00 L60.40 0.00 L60.40 10.00 M57.90 10.00 L62.90 10.00 M66.40 2.00 L68.60 0.00 L68.60 10.00 M66.10 10.00 L71.10 10.00 M76.80 4.60 L74.80 4.00 L74.10 3.00 L74.10 1.20 L75.30 0.00 L78.30 0.00 L79.50 1.20 L79.50 3.00 L78.80 4.00 L76.80 4.60 L74.80 5.30 L73.80 6.50 L73.80 8.80 L75.00 10.00 L78.60 10.00 L79.80 8.80 L79.80 6.50 L78.80 5.30 L76.80 4.60" fill="none" stroke="#ffffff" stroke-width="1.528" stroke-linecap="round" stroke-linejoin="round" />
<path transform="translate(988 657) rotate(-90) scale(0.72 0.72) translate(-39.90 -5)" d="M0.00 10.00 L0.00 0.00 L6.00 10.00 L6.00 0.00 M9.20 5.50 L14.20 5.50 M18.20 0.00 L20.60 0.00 L21.90 0.80 L22.40 2.20 L22.40 7.80 L21.90 9.20 L20.60 10.00 L18.20 10.00 L16.90 9.20 L16.40 7.80 L16.40 2.20 L16.90 0.80 L18.20 0.00 M26.40 0.00 L28.80 0.00 L30.10 0.80 L30.60 2.20 L30.60 7.80 L30.10 9.20 L28.80 10.00 L26.40 10.00 L25.10 9.20 L24.60 7.80 L24.60 2.20 L25.10 0.80 L26.40 0.00 M34.60 0.00 L37.00 0.00 L38.30 0.80 L38.80 2.20 L38.80 7.80 L38.30 9.20 L37.00 10.00 L34.60 10.00 L33.30 9.20 L32.80 7.80 L32.80 2.20 L33.30 0.80 L34.60 0.00 M42.80 0.00 L45.20 0.00 L46.50 0.80 L47.00 2.20 L47.00 7.80 L46.50 9.20 L45.20 10.00 L42.80 10.00 L41.50 9.20 L41.00 7.80 L41.00 2.20 L41.50 0.80 L42.80 0.00 M51.00 0.00 L53.40 0.00 L54.70 0.80 L55.20 2.20 L55.20 7.80 L54.70 9.20 L53.40 10.00 L51.00 10.00 L49.70 9.20 L49.20 7.80 L49.20 2.20 L49.70 0.80 L51.00 0.00 M58.20 2.00 L60.40 0.00 L60.40 10.00 M57.90 10.00 L62.90 10.00 M66.40 2.00 L68.60 0.00 L68.60 10.00 M66.10 10.00 L71.10 10.00 M73.80 0.00 L79.80 0.00 L75.80 10.00" fill="none" stroke="#ffffff" stroke-width="1.528" stroke-linecap="round" stroke-linejoin="round" />
<path transform="translate(988 797) rotate(-90) scale(0.72 0.72) translate(-39.90 -5)" d="M0.00 10.00 L0.00 0.00 L6.00 10.00 L6.00 0.00 M9.20 5.50 L14.20 5.50 M18.20 0.00 L20.60 0.00 L21.90 0.80 L22.40 2.20 L22.40 7.80 L21.90 9.20 L20.60 10.00 L18.20 10.00 L16.90 9.20 L16.40 7.80 L16.40 2.20 L16.90 0.80 L18.20 0.00 M26.40 0.00 L28.80 0.00 L30.10 0.80 L30.60 2.20 L30.60 7.80 L30.10 9.20 L28.80 10.00 L26.40 10.00 L25.10 9.20 L24.60 7.80 L24.60 2.20 L25.10 0.80 L26.40 0.00 M34.60 0.00 L37.00 0.00 L38.30 0.80 L38.80 2.20 L38.80 7.80 L38.30 9.20 L37.00 10.00 L34.60 10.00 L33.30 9.20 L32.80 7.80 L32.80 2.20 L33.30 0.80 L34.60 0.00 M42.80 0.00 L45.20 0.00 L46.50 0.80 L47.00 2.20 L47.00 7.80 L46.50 9.20 L45.20 10.00 L42.80 10.00 L41.50 9.20 L41.00 7.80 L41.00 2.20 L41.50 0.80 L42.80 0.00 M51.00 0.00 L53.40 0.00 L54.70 0.80 L55.20 2.20 L55.20 7.80 L54.70 9.20 L53.40 10.00 L51.00 10.00 L49.70 9.20 L49.20 7.80 L49.20 2.20 L49.70 0.80 L51.00 0.00 M58.20 2.00 L60.40 0.00 L60.40 10.00 M57.90 10.00 L62.90 10.00 M66.40 2.00 L68.60 0.00 L68.60 10.00 M66.10 10.00 L71.10 10.00 M73.80 0.00 L79.80 0.00 L75.80 10.00" fill="none" stroke="#ffffff" stroke-width="1.528" stroke-linecap="round" stroke-linejoin="round" />
<path transform="translate(1138 657) rotate(-90) scale(0.72 0.72) translate(-39.90 -5)" d="M0.00 10.00 L0.00 0.00 L6.00 10.00 L6.00 0.00 M9.20 5.50 L14.20 5.50 M18.20 0.00 L20.60 0.00 L21.90 0.80 L22.40 2.20 L22.40 7.80 L21.90 9.20 L20.60 10.00 L18.20 10.00 L16.90 9.20 L16.40 7.80 L16.40 2.20 L16.90 0.80 L18.20 0.00 M26.40 0.00 L28.80 0.00 L30.10 0.80 L30.60 2.20 L30.60 7.80 L30.10 9.20 L28.80 10.00 L26.40 10.00 L25.10 9.20 L24.60 7.80 L24.60 2.20 L25.10 0.80 L26.40 0.00 M34.60 0.00 L37.00 0.00 L38.30 0.80 L38.80 2.20 L38.80 7.80 L38.30 9.20 L37.00 10.00 L34.60 10.00 L33.30 9.20 L32.80 7.80 L32.80 2.20 L33.30 0.80 L34.60 0.00 M42.80 0.00 L45.20 0.00 L46.50 0.80 L47.00 2.20 L47.00 7.80 L46.50 9.20 L45.20 10.00 L42.80 10.00 L41.50 9.20 L41.00 7.80 L41.00 2.20 L41.50 0.80 L42.80 0.00 M51.00 0.00 L53.40 0.00 L54.70 0.80 L55.20 2.20 L55.20 7.80 L54.70 9.20 L53.40 10.00 L51.00 10.00 L49.70 9.20 L49.20 7.80 L49.20 2.20 L49.70 0.80 L51.00 0.00 M58.20 2.00 L60.40 0.00 L60.40 10.00 M57.90 10.00 L62.90 10.00 M66.40 2.00 L68.60 0.00 L68.60 10.00 M66.10 10.00 L71.10 10.00 M74.10 0.00 L79.80 0.00 L76.60 4.00 L77.80 4.00 L79.30 5.00 L79.80 6.50 L79.80 8.50 L78.80 9.70 L77.80 10.00 L75.30 10.00 L74.10 9.30" fill="none" stroke="#ffffff" stroke-width="1.528" stroke-linecap="round" stroke-linejoin="round" />
<path transform="translate(1138 797) rotate(-90) scale(0.72 0.72) translate(-39.90 -5)" d="M0.00 10.00 L0.00 0.00 L6.00 10.00 L6.00 0.00 M9.20 5.50 L14.20 5.50 M18.20 0.00 L20.60 0.00 L21.90 0.80 L22.40 2.20 L22.40 7.80 L21.90 9.20 L20.60 10.00 L18.20 10.00 L16.90 9.20 L16.40 7.80 L16.40 2.20 L16.90 0.80 L18.20 0.00 M26.40 0.00 L28.80 0.00 L30.10 0.80 L30.60 2.20 L30.60 7.80 L30.10 9.20 L28.80 10.00 L26.40 10.00 L25.10 9.20 L24.60 7.80 L24.60 2.20 L25.10 0.80 L26.40 0.00 M34.60 0.00 L37.00 0.00 L38.30 0.80 L38.80 2.20 L38.80 7.80 L38.30 9.20 L37.00 10.00 L34.60 10.00 L33.30 9.20 L32.80 7.80 L32.80 2.20 L33.30 0.80 L34.60 0.00 M42.80 0.00 L45.20 0.00 L46.50 0.80 L47.00 2.20 L47.00 7.80 L46.50 9.20 L45.20 10.00 L42.80 10.00 L41.50 9.20 L41.00 7.80 L41.00 2.20 L41.50 0.80 L42.80 0.00 M51.00 0.00 L53.40 0.00 L54.70 0.80 L55.20 2.20 L55.20 7.80 L54.70 9.20 L53.40 10.00 L51.00 10.00 L49.70 9.20 L49.20 7.80 L49.20 2.20 L49.70 0.80 L51.00 0.00 M58.20 2.00 L60.40 0.00 L60.40 10.00 M57.90 10.00 L62.90 10.00 M66.40 2.00 L68.60 0.00 L68.60 10.00 M66.10 10.00 L71.10 10.00 M74.10 0.00 L79.80 0.00 L76.60 4.00 L77.80 4.00 L79.30 5.00 L79.80 6.50 L79.80 8.50 L78.80 9.70 L77.80 10.00 L75.30 10.00 L74.10 9.30" fill="none" stroke="#ffffff" stroke-width="1.528" stroke-linecap="round" stroke-linejoin="round" />
<path transform="translate(988 517) rotate(-90) scale(0.72 0.72) translate(-39.90 -5)" d="M0.00 10.00 L0.00 0.00 L6.00 10.00 L6.00 0.00 M9.20 5.50 L14.20 5.50 M18.20 0.00 L20.60 0.00 L21.90 0.80 L22.40 2.20 L22.40 7.80 L21.90 9.20 L20.60 10.00 L18.20 10.00 L16.90 9.20 L16.40 7.80 L16.40 2.20 L16.90 0.80 L18.20 0.00 M26.40 0.00 L28.80 0.00 L30.10 0.80 L30.60 2.20 L30.60 7.80 L30.10 9.20 L28.80 10.00 L26.40 10.00 L25.10 9.20 L24.60 7.80 L24.60 2.20 L25.10 0.80 L26.40 0.00 M34.60 0.00 L37.00 0.00 L38.30 0.80 L38.80 2.20 L38.80 7.80 L38.30 9.20 L37.00 10.00 L34.60 10.00 L33.30 9.20 L32.80 7.80 L32.80 2.20 L33.30 0.80 L34.60 0.00 M42.80 0.00 L45.20 0.00 L46.50 0.80 L47.00 2.20 L47.00 7.80 L46.50 9.20 L45.20 10.00 L42.80 10.00 L41.50 9.20 L41.00 7.80 L41.00 2.20 L41.50 0.80 L42.80 0.00 M51.00 0.00 L53.40 0.00 L54.70 0.80 L55.20 2.20 L55.20 7.80 L54.70 9.20 L53.40 10.00 L51.00 10.00 L49.70 9.20 L49.20 7.80 L49.20 2.20 L49.70 0.80 L51.00 0.00 M58.20 2.00 L60.40 0.00 L60.40 10.00 M57.90 10.00 L62.90 10.00 M66.40 2.00 L68.60 0.00 L68.60 10.00 M66.10 10.00 L71.10 10.00 M73.80 0.00 L79.80 0.00 L75.80 10.00" fill="none" stroke="#ffffff" stroke-width="1.528" stroke-linecap="round" stroke-linejoin="round" />
<path transform="translate(738 604) rotate(-90) scale(0.72 0.72) translate(-15.30 -5)" d="M3.00 2.50 L3.00 8.50 M0.00 5.50 L6.00 5.50 M13.70 0.00 L9.20 0.00 L8.70 4.50 L9.70 4.00 L12.20 4.00 L13.70 4.80 L14.20 6.20 L14.20 8.50 L13.20 9.70 L12.20 10.00 L9.70 10.00 L8.50 9.30 M16.40 0.00 L19.40 10.00 L22.40 0.00 M24.60 10.00 L27.60 0.00 L30.60 10.00 M25.70 6.50 L29.50 6.50" fill="none" stroke="#ffffff" stroke-width="1.528" stroke-linecap="round" stroke-linejoin="round" />
<path transform="translate(738 727) rotate(-90) scale(0.72 0.72) translate(-15.30 -5)" d="M3.00 2.50 L3.00 8.50 M0.00 5.50 L6.00 5.50 M13.70 0.00 L9.20 0.00 L8.70 4.50 L9.70 4.00 L12.20 4.00 L13.70 4.80 L14.20 6.20 L14.20 8.50 L13.20 9.70 L12.20 10.00 L9.70 10.00 L8.50 9.30 M16.40 0.00 L19.40 10.00 L22.40 0.00 M24.60 10.00 L27.60 0.00 L30.60 10.00 M25.70 6.50 L29.50 6.50" fill="none" stroke="#ffffff" stroke-width="1.528" stroke-linecap="round" stroke-linejoin="round" />
<path transform="translate(1188 597) rotate(-90) scale(0.72 0.72) translate(-15.30 -5)" d="M3.00 2.50 L3.00 8.50 M0.00 5.50 L6.00 5.50 M13.70 0.00 L9.20 0.00 L8.70 4.50 L9.70 4.00 L12.20 4.00 L13.70 4.80 L14.20 6.20 L14.20 8.50 L13.20 9.70 L12.20 10.00 L9.70 10.00 L8.50 9.30 M16.40 0.00 L19.40 10.00 L22.40 0.00 M24.60 10.00 L27.60 0.00 L30.60 10.00 M25.70 6.50 L29.50 6.50" fill="none" stroke="#ffffff" stroke-width="1.528" stroke-linecap="round" stroke-linejoin="round" />
<path transform="translate(1188 733) rotate(-90) scale(0.72 0.72) translate(-15.30 -5)" d="M3.00 2.50 L3.00 8.50 M0.00 5.50 L6.00 5.50 M13.70 0.00 L9.20 0.00 L8.70 4.50 L9.70 4.00 L12.20 4.00 L13.70 4.80 L14.20 6.20 L14.20 8.50 L13.20 9.70 L12.20 10.00 L9.70 10.00 L8.50 9.30 M16.40 0.00 L19.40 10.00 L22.40 0.00 M24.60 10.00 L27.60 0.00 L30.60 10.00 M25.70 6.50 L29.50 6.50" fill="none" stroke="#ffffff" stroke-width="1.528" stroke-linecap="round" stroke-linejoin="round" />
<defs><pattern id="chh" patternUnits="userSpaceOnUse" x="48" y="443" width="10" height="1"><rect x="1" y="0" width="9" height="1" fill="#f4f4f4"/></pattern><pattern id="chv" patternUnits="userSpaceOnUse" x="988" y="123" width="1" height="10"><rect x="0" y="1" width="1" height="9" fill="#f4f4f4"/></pattern></defs>
<rect shape-rendering="crispEdges" x="40" y="443" width="1676" height="1" fill="#000"/><rect shape-rendering="crispEdges" x="40" y="443" width="1676" height="1" fill="url(#chh)"/>
<rect shape-rendering="crispEdges" x="988" y="120" width="1" height="966" fill="#000"/><rect shape-rendering="crispEdges" x="988" y="120" width="1" height="966" fill="url(#chv)"/>
</svg>
<div class="sep" style="left:112px;top:48px;height:26px"></div>
<div class="sep" style="left:155px;top:48px;height:26px"></div>
<div class="sep" style="left:232px;top:48px;height:26px"></div>
<div class="sep" style="left:308px;top:48px;height:26px"></div>
<div class="sep" style="left:386px;top:48px;height:26px"></div>
<div class="sep" style="left:530px;top:48px;height:26px"></div>
<div class="sep" style="left:573px;top:48px;height:26px"></div>
<div class="sep" style="left:650px;top:48px;height:26px"></div>
<div class="sep" style="left:828px;top:48px;height:26px"></div>
<div class="sep" style="left:906px;top:48px;height:26px"></div>
<div class="sep" style="left:948px;top:48px;height:26px"></div>
<div class="sep" style="left:141px;top:87px;height:24px"></div>
<div class="sep" style="left:308px;top:87px;height:24px"></div>
<div class="sep" style="left:351px;top:87px;height:24px"></div>
<div class="sep" style="left:492px;top:87px;height:24px"></div>
<svg class="a" style="left:9px;top:48px" width="26" height="26" viewBox="0 0 26 26"><path d="M3 3H18L23 8V24H3Z" fill="#f4f4f4" stroke="#777" stroke-width="1"/><path d="M7 5V22M10 5V14L13 18V22M14 5V12M17 5V13L20 16V22" fill="none" stroke="#999" stroke-width="1.2"/><path d="M17 1L19 6L24 6L20 9L22 14L17 11L12 14L14 9L10 6L15 6Z" fill="#f5e400" stroke="#a08000" stroke-width="0.7"/></svg>
<svg class="a" style="left:43px;top:48px" width="26" height="26" viewBox="0 0 26 26"><path d="M3 3H18L23 8V24H3Z" fill="#f4f4f4" stroke="#777" stroke-width="1"/><path d="M7 5V22M10 5V14L13 18V22M14 5V12M17 5V13L20 16V22" fill="none" stroke="#999" stroke-width="1.2"/></svg>
<svg class="a" style="left:77px;top:48px" width="26" height="26" viewBox="0 0 26 26"><path d="M3 14H23V23H3Z" fill="#e4e4e4" stroke="#c8c8c8"/><path d="M8 9Q12 2 17 7L19 5V12H12L14 10Q12 7 9 10Z" fill="#b0cbe6"/></svg>
<svg class="a" style="left:120px;top:48px" width="26" height="26" viewBox="0 0 26 26"><path d="M3 2H17L23 8V25H3Z" fill="#fafafa" stroke="#555"/><path d="M13 4V22M5 13H21" stroke="#222" stroke-width="1.2"/><path d="M11 6L13 3L15 6M11 20L13 23L15 20M7 11L4 13L7 15M19 11L22 13L19 15" fill="none" stroke="#222" stroke-width="1.2"/><rect x="15" y="19" width="7" height="5" fill="#fff" stroke="#333"/></svg>
<svg class="a" style="left:163px;top:48px" width="26" height="26" viewBox="0 0 26 26"><rect x="1.5" y="6.5" width="23" height="13" fill="#c8c8c8" stroke="#333" stroke-width="1.2" rx="1.5"/><path d="M1.5 11L4 13L1.5 15" fill="none" stroke="#333" stroke-width="1"/><rect x="4" y="1.5" width="5" height="6" fill="#f07c1a" stroke="#8a4000" stroke-width="0.7"/><circle cx="6.5" cy="4.5" r="0.9" fill="#fff"/><rect x="4" y="18.5" width="5" height="6" fill="#f07c1a" stroke="#8a4000" stroke-width="0.7"/><circle cx="6.5" cy="21.5" r="0.9" fill="#fff"/><rect x="10.5" y="1.5" width="5" height="6" fill="#f07c1a" stroke="#8a4000" stroke-width="0.7"/><circle cx="13.0" cy="4.5" r="0.9" fill="#fff"/><rect x="10.5" y="18.5" width="5" height="6" fill="#f07c1a" stroke="#8a4000" stroke-width="0.7"/><circle cx="13.0" cy="21.5" r="0.9" fill="#fff"/><rect x="17" y="1.5" width="5" height="6" fill="#f07c1a" stroke="#8a4000" stroke-width="0.7"/><circle cx="19.5" cy="4.5" r="0.9" fill="#fff"/><rect x="17" y="18.5" width="5" height="6" fill="#f07c1a" stroke="#8a4000" stroke-width="0.7"/><circle cx="19.5" cy="21.5" r="0.9" fill="#fff"/><path d="M9 24L20 8L23 10L12 26Z" fill="#f0a030" stroke="#804000" stroke-width="0.7"/></svg>
<svg class="a" style="left:197px;top:48px" width="26" height="26" viewBox="0 0 26 26"><rect x="1.5" y="6.5" width="23" height="13" fill="#c8c8c8" stroke="#333" stroke-width="1.2" rx="1.5"/><path d="M1.5 11L4 13L1.5 15" fill="none" stroke="#333" stroke-width="1"/><rect x="4" y="1.5" width="5" height="6" fill="#f07c1a" stroke="#8a4000" stroke-width="0.7"/><circle cx="6.5" cy="4.5" r="0.9" fill="#fff"/><rect x="4" y="18.5" width="5" height="6" fill="#f07c1a" stroke="#8a4000" stroke-width="0.7"/><circle cx="6.5" cy="21.5" r="0.9" fill="#fff"/><rect x="10.5" y="1.5" width="5" height="6" fill="#f07c1a" stroke="#8a4000" stroke-width="0.7"/><circle cx="13.0" cy="4.5" r="0.9" fill="#fff"/><rect x="10.5" y="18.5" width="5" height="6" fill="#f07c1a" stroke="#8a4000" stroke-width="0.7"/><circle cx="13.0" cy="21.5" r="0.9" fill="#fff"/><rect x="17" y="1.5" width="5" height="6" fill="#f07c1a" stroke="#8a4000" stroke-width="0.7"/><circle cx="19.5" cy="4.5" r="0.9" fill="#fff"/><rect x="17" y="18.5" width="5" height="6" fill="#f07c1a" stroke="#8a4000" stroke-width="0.7"/><circle cx="19.5" cy="21.5" r="0.9" fill="#fff"/><circle cx="12" cy="14" r="5" fill="none" stroke="#1a6a30" stroke-width="2.2"/><path d="M15 17L21 23" stroke="#1a6a30" stroke-width="2.5"/></svg>
<svg class="a" style="left:239px;top:48px" width="26" height="26" viewBox="0 0 26 26"><path d="M8 10Q18 6 20 14Q20 20 14 22L15 19Q17 15 12 13L10 16L5 10L11 5Z" fill="#f4e8a0" opacity="0.9"/></svg>
<svg class="a" style="left:274px;top:48px" width="26" height="26" viewBox="0 0 26 26"><path d="M18 10Q8 6 6 14Q6 20 12 22L11 19Q9 15 14 13L16 16L21 10L15 5Z" fill="#c8ecb0" opacity="0.9"/></svg>
<svg class="a" style="left:316px;top:48px" width="26" height="26" viewBox="0 0 26 26"><rect x="8" y="3" width="11" height="7" fill="#fff" stroke="#888"/><rect x="3" y="9" width="20" height="11" rx="2" fill="#e0e0e0" stroke="#666"/><rect x="6" y="12" width="14" height="3" fill="#333"/><rect x="5" y="18" width="16" height="4" fill="#f4f4f4" stroke="#888"/></svg>
<svg class="a" style="left:350px;top:48px" width="26" height="26" viewBox="0 0 26 26"><rect x="8" y="3" width="11" height="7" fill="#fff" stroke="#888"/><rect x="3" y="9" width="20" height="11" rx="2" fill="#e0e0e0" stroke="#666"/><rect x="6" y="12" width="14" height="3" fill="#333"/><rect x="5" y="18" width="16" height="4" fill="#f4f4f4" stroke="#888"/><text x="1" y="12" font-family="Liberation Sans" font-size="12" fill="#1a3a6a">P</text></svg>
<svg class="a" style="left:394px;top:48px" width="26" height="26" viewBox="0 0 26 26"><circle cx="11" cy="11" r="7" fill="#fff" fill-opacity="0.3" stroke="#222" stroke-width="2"/><path d="M16 16L22 22" stroke="#222" stroke-width="2.6" stroke-linecap="round"/><path d="M11 7V15M7 11H15" stroke="#222" stroke-width="2"/></svg>
<svg class="a" style="left:428px;top:48px" width="26" height="26" viewBox="0 0 26 26"><circle cx="11" cy="11" r="7" fill="#fff" fill-opacity="0.3" stroke="#222" stroke-width="2"/><path d="M16 16L22 22" stroke="#222" stroke-width="2.6" stroke-linecap="round"/><path d="M7 11H15" stroke="#222" stroke-width="2"/></svg>
<svg class="a" style="left:462px;top:48px" width="26" height="26" viewBox="0 0 26 26"><path d="M20 12A8 8 0 1 1 14 5" fill="none" stroke="#111" stroke-width="2.2"/><path d="M13 1L19 5L13 9Z" fill="#111" transform="rotate(30 16 5)"/></svg>
<svg class="a" style="left:495px;top:48px" width="26" height="26" viewBox="0 0 26 26"><circle cx="11" cy="11" r="7" fill="#fff" fill-opacity="0.3" stroke="#222" stroke-width="2"/><path d="M16 16L22 22" stroke="#222" stroke-width="2.6" stroke-linecap="round"/><path d="M4 12V22H6M14 12V22H12" fill="none" stroke="#222" stroke-width="1.5"/></svg>
<svg class="a" style="left:538px;top:48px" width="26" height="26" viewBox="0 0 26 26"><rect x="3" y="2" width="19" height="22" fill="#f4f4f4" stroke="#888"/><path d="M6 7H18M6 10H18M6 13H14" stroke="#bbb"/><circle cx="14" cy="15" r="5" fill="#bcd8f0" stroke="#4a8ac8" stroke-width="1.5"/><path d="M18 19L22 23" stroke="#888" stroke-width="2"/></svg>
<svg class="a" style="left:581px;top:48px" width="26" height="26" viewBox="0 0 26 26"><text x="3" y="10" font-family="Liberation Sans" font-size="11" fill="#777">.net</text><path d="M8 24L14 17Q12 13 16 12L15 14L17 16L19 14Q20 18 16 19L10 25Z" fill="#ddd" stroke="#999" stroke-width="0.8"/></svg>
<svg class="a" style="left:615px;top:48px" width="26" height="26" viewBox="0 0 26 26"><ellipse cx="12" cy="15" rx="7" ry="8" fill="#d01010" stroke="#222"/><circle cx="12" cy="7" r="3.5" fill="#222"/><circle cx="9" cy="13" r="1.3" fill="#111"/><circle cx="14" cy="17" r="1.3" fill="#111"/><circle cx="9" cy="19" r="1.2" fill="#111"/><path d="M10 14L14 19L23 7" fill="none" stroke="#10a010" stroke-width="3"/></svg>
<div class="a" style="left:656px;top:49px;width:135px;height:23px;background:#fff;border:1px solid #c8c8c8;border-radius:2px"></div>
<div class="a" style="left:663px;top:53px;width:14px;height:14px;background:#009000;border:1px solid #000"></div>
<div class="a" style="left:682px;top:53px;font-size:11.4px;white-space:nowrap">B.Cu (PgDn)</div>
<div class="a" style="left:777px;top:59px;width:0;height:0;border-left:4px solid transparent;border-right:4px solid transparent;border-top:4px solid #000"></div>
<svg class="a" style="left:796px;top:49px" width="24" height="24" viewBox="0 0 24 24"><rect x="0" y="0" width="24" height="24" fill="#009a00"/><path d="M22 2L12 12V24" fill="none" stroke="#a01010" stroke-width="4"/><circle cx="11" cy="12" r="3.5" fill="none" stroke="#c8c8c8" stroke-width="1.6"/></svg>
<svg class="a" style="left:837px;top:48px" width="26" height="26" viewBox="0 0 26 26"><rect x="1.5" y="6.5" width="23" height="13" fill="#c8c8c8" stroke="#333" stroke-width="1.2" rx="1.5"/><path d="M1.5 11L4 13L1.5 15" fill="none" stroke="#333" stroke-width="1"/><rect x="4" y="1.5" width="5" height="6" fill="#f07c1a" stroke="#8a4000" stroke-width="0.7"/><circle cx="6.5" cy="4.5" r="0.9" fill="#fff"/><rect x="4" y="18.5" width="5" height="6" fill="#f07c1a" stroke="#8a4000" stroke-width="0.7"/><circle cx="6.5" cy="21.5" r="0.9" fill="#fff"/><rect x="10.5" y="1.5" width="5" height="6" fill="#f07c1a" stroke="#8a4000" stroke-width="0.7"/><circle cx="13.0" cy="4.5" r="0.9" fill="#fff"/><rect x="10.5" y="18.5" width="5" height="6" fill="#f07c1a" stroke="#8a4000" stroke-width="0.7"/><circle cx="13.0" cy="21.5" r="0.9" fill="#fff"/><rect x="17" y="1.5" width="5" height="6" fill="#f07c1a" stroke="#8a4000" stroke-width="0.7"/><circle cx="19.5" cy="4.5" r="0.9" fill="#fff"/><rect x="17" y="18.5" width="5" height="6" fill="#f07c1a" stroke="#8a4000" stroke-width="0.7"/><circle cx="19.5" cy="21.5" r="0.9" fill="#fff"/><path d="M13 9L17 13H15V15H17V13L21 17L17 21V19H15V21H17L13 25L9 21H11V19H9V21L5 17L9 13V15H11V13H9Z" fill="#58c840" transform="translate(0 -2)"/></svg>
<svg class="a" style="left:871px;top:48px" width="26" height="26" viewBox="0 0 26 26"><path d="M2 6H24M2 19H24" stroke="#e03030" stroke-width="2.4"/><path d="M8 2V24M18 2V24" stroke="#60d040" stroke-width="2.4"/><circle cx="7" cy="6" r="2" fill="#f0a050" stroke="#222" stroke-width="0.8"/><circle cx="19" cy="19" r="2" fill="#f0a050" stroke="#222" stroke-width="0.8"/></svg>
<svg class="a" style="left:914px;top:48px" width="26" height="26" viewBox="0 0 26 26"><path d="M13 1L25 13L13 25L1 13Z" fill="#f0b020" stroke="#222" stroke-width="1.5"/><path d="M10 19V8M7 11L10 7L13 11M16 7V18M13 15L16 19L19 15" fill="none" stroke="#111" stroke-width="1.8"/></svg>
<div class="combo" style="left:6px;top:87px;width:130px">Track 0,254 mm *<div class="arr"></div></div>
<div class="combo" style="left:147px;top:87px;width:156px">Via 0,889 mm *<div class="arr"></div></div>
<div class="combo" style="left:357px;top:87px;width:130px">Grid: 1,27<div class="arr"></div></div>
<div class="combo" style="left:498px;top:87px;width:130px">Zoom 127000<div class="arr"></div></div>
<svg class="a" style="left:318px;top:86px" width="26" height="26" viewBox="0 0 26 26"><path d="M3 2V25M19 2V25" stroke="#40c030" stroke-width="3.5"/><path d="M19 3H24" stroke="#40c030" stroke-width="2.5"/><path d="M5 9H17" stroke="#2030a0" stroke-width="1.5"/><path d="M7 6L4 9L7 12M15 6L18 9L15 12" fill="none" stroke="#2030a0" stroke-width="1.5"/><path d="M10 25L19 14" stroke="#222" stroke-width="1.2"/><path d="M19 10L21 13L24 13L22 16L23 19L19 17L16 19L17 16L15 13L18 13Z" fill="#ffc020" stroke="#d03000" stroke-width="0.6"/></svg>
<div id="lefttb" class="a"></div>
<div class="btnsel" style="top:158px"></div>
<div class="btnsel" style="top:260px"></div>
<div class="btnsel" style="top:294px"></div>
<div class="btnsel" style="top:371px"></div>
<div class="btnsel" style="top:414px"></div>
<div class="btnsel" style="top:457px"></div>
<div class="btnsel" style="top:713px"></div>
<div class="hsep" style="left:6px;top:331px;width:26px"></div>
<div class="hsep" style="left:6px;top:408px;width:26px"></div>
<div class="hsep" style="left:6px;top:451px;width:26px"></div>
<div class="hsep" style="left:6px;top:562px;width:26px"></div>
<div class="hsep" style="left:6px;top:707px;width:26px"></div>
<div class="hsep" style="left:6px;top:784px;width:26px"></div>
<svg class="a" style="left:6px;top:126px" width="26" height="26" viewBox="0 0 26 26"><ellipse cx="15" cy="14" rx="7" ry="9" fill="#222"/><circle cx="11" cy="15" r="8" fill="#fff" fill-opacity="0.2" stroke="#d01818" stroke-width="2.6"/><path d="M5 21L17 9" stroke="#d01818" stroke-width="2.6"/></svg>
<svg class="a" style="left:6px;top:161px" width="26" height="26" viewBox="0 0 26 26"><circle cx="5.0" cy="5.0" r="1.4" fill="#000"/><circle cx="5.0" cy="10.3" r="1.4" fill="#000"/><circle cx="5.0" cy="15.6" r="1.4" fill="#000"/><circle cx="5.0" cy="20.9" r="1.4" fill="#000"/><circle cx="10.3" cy="5.0" r="1.4" fill="#000"/><circle cx="10.3" cy="10.3" r="1.4" fill="#000"/><circle cx="10.3" cy="15.6" r="1.4" fill="#000"/><circle cx="10.3" cy="20.9" r="1.4" fill="#000"/><circle cx="15.6" cy="5.0" r="1.4" fill="#000"/><circle cx="15.6" cy="10.3" r="1.4" fill="#000"/><circle cx="15.6" cy="15.6" r="1.4" fill="#000"/><circle cx="15.6" cy="20.9" r="1.4" fill="#000"/><circle cx="20.9" cy="5.0" r="1.4" fill="#000"/><circle cx="20.9" cy="10.3" r="1.4" fill="#000"/><circle cx="20.9" cy="15.6" r="1.4" fill="#000"/><circle cx="20.9" cy="20.9" r="1.4" fill="#000"/></svg>
<svg class="a" style="left:6px;top:195px" width="26" height="26" viewBox="0 0 26 26"><path d="M5 4V22H23" fill="none" stroke="#111" stroke-width="1.5"/><path d="M3 7L5 3L7 7M19 20L23 22L19 24" fill="#111" stroke="#111"/><path d="M5 22L20 6" stroke="#555" stroke-width="1.2"/><circle cx="20" cy="5" r="2" fill="#e01010"/><text x="8" y="11" font-size="7" font-family="Liberation Sans" fill="#333">r</text><text x="15" y="18" font-size="7" font-family="Liberation Sans" fill="#333">φ</text></svg>
<svg class="a" style="left:6px;top:228px" width="26" height="26" viewBox="0 0 26 26"><text x="5" y="12" font-family="Liberation Serif" font-weight="bold" font-size="12" fill="#333">In</text><path d="M3 19H23M6 16L3 19L6 22M20 16L23 19L20 22" fill="none" stroke="#333" stroke-width="1.5"/></svg>
<svg class="a" style="left:6px;top:262px" width="26" height="26" viewBox="0 0 26 26"><text x="1" y="12" font-family="Liberation Serif" font-weight="bold" font-size="12" fill="#333">mm</text><path d="M3 19H23M6 16L3 19L6 22M20 16L23 19L20 22" fill="none" stroke="#333" stroke-width="1.5"/></svg>
<svg class="a" style="left:6px;top:297px" width="26" height="26" viewBox="0 0 26 26"><path d="M11 2V24M2 11H24" stroke="#1c8a1c" stroke-width="2"/><path d="M11 2V11" stroke="#333" stroke-width="2"/><path d="M13 12L13 23L16 20L19 25L21 24L18 19L22 19Z" fill="#e8e8e8" stroke="#555" stroke-width="0.8"/></svg>
<svg class="a" style="left:6px;top:340px" width="26" height="26" viewBox="0 0 26 26"><rect x="1" y="1" width="24" height="24" rx="4" fill="#d8dcd8"/><path d="M6 6L20 20M20 6L6 20" stroke="#fff" stroke-width="2"/><circle cx="6" cy="6" r="2.2" fill="#f0a040" stroke="#333" stroke-width="0.7"/><circle cx="20" cy="8" r="2.2" fill="#f0a040" stroke="#333" stroke-width="0.7"/><circle cx="6" cy="20" r="2.2" fill="#f0a040" stroke="#333" stroke-width="0.7"/><circle cx="20" cy="19" r="2.2" fill="#f0a040" stroke="#333" stroke-width="0.7"/></svg>
<svg class="a" style="left:6px;top:374px" width="26" height="26" viewBox="0 0 26 26"><rect x="1" y="1" width="24" height="24" rx="4" fill="#d8e0ec"/><path d="M3 8L23 18M3 18L23 8" stroke="#fff" stroke-width="2"/><rect x="9" y="5" width="6" height="15" fill="#ccc" stroke="#333"/><path d="M13 10L13 24L16 21L19 26L21 25L18 20L22 20Z" fill="#9a8ad8" stroke="#222" stroke-width="0.9"/></svg>
<svg class="a" style="left:6px;top:417px" width="26" height="26" viewBox="0 0 26 26"><path d="M5 5Q13 12 20 22M21 4Q12 12 5 21" fill="none" stroke="#d01818" stroke-width="3.2"/><path d="M3 24H23" stroke="#a01010" stroke-width="2"/></svg>
<svg class="a" style="left:6px;top:460px" width="26" height="26" viewBox="0 0 26 26"><g opacity="1"><rect x="2" y="2" width="22" height="22" fill="#0a7a0a"/><circle cx="9" cy="10" r="4" fill="none" stroke="#fff" stroke-width="2"/><path d="M12 13L20 21" stroke="#fff" stroke-width="4"/><path d="M12 13L20 21" stroke="#0a7a0a" stroke-width="1.5"/></g></svg>
<svg class="a" style="left:6px;top:494px" width="26" height="26" viewBox="0 0 26 26"><g opacity="0.45"><rect x="2" y="2" width="22" height="22" fill="#0a7a0a"/><circle cx="9" cy="10" r="4" fill="none" stroke="#fff" stroke-width="2"/><path d="M12 13L20 21" stroke="#fff" stroke-width="4"/><path d="M12 13L20 21" stroke="#0a7a0a" stroke-width="1.5"/></g></svg>
<svg class="a" style="left:6px;top:528px" width="26" height="26" viewBox="0 0 26 26"><rect x="1.5" y="1.5" width="23" height="23" fill="#8ab88a" stroke="#2040e0" stroke-width="1.5"/><circle cx="9" cy="10" r="4" fill="none" stroke="#eee" stroke-width="2"/><path d="M12 13L20 21" stroke="#eee" stroke-width="3"/></svg>
<svg class="a" style="left:6px;top:570px" width="26" height="26" viewBox="0 0 26 26"><circle cx="16" cy="11" r="9" fill="none" stroke="#0a7a0a" stroke-width="2.4"/><circle cx="16" cy="11" r="4" fill="none" stroke="#0a7a0a" stroke-width="2.4"/><circle cx="16" cy="11" r="1" fill="#0a7a0a"/><ellipse cx="7" cy="20" rx="6" ry="3.2" fill="#fff" stroke="#111" stroke-width="1.3"/><circle cx="7" cy="20" r="1.8" fill="#3030a0"/></svg>
<svg class="a" style="left:6px;top:604px" width="26" height="26" viewBox="0 0 26 26"><path d="M16 12V25" stroke="#40c040" stroke-width="5"/><path d="M2 12H14" stroke="#e01818" stroke-width="4"/><circle cx="16" cy="12" r="8" fill="none" stroke="#0a7a0a" stroke-width="2"/><circle cx="16" cy="12" r="3" fill="#0a7a0a"/></svg>
<svg class="a" style="left:6px;top:638px" width="26" height="26" viewBox="0 0 26 26"><path d="M3 5H10L18 15H24M3 9H8L16 19H24" fill="none" stroke="#d02020" stroke-width="2"/><path d="M15 3V23M20 3V23" stroke="#1a8a1a" stroke-width="2"/></svg>
<svg class="a" style="left:6px;top:673px" width="26" height="26" viewBox="0 0 26 26"><path d="M13 3C21 3 25 8 24 13C23 17 19 15 18 18C17 22 14 24 10 23C4 22 1 17 2 12C3 6 7 3 13 3Z" fill="#f4e8c8" stroke="#555" stroke-width="1"/><circle cx="9" cy="8" r="2" fill="#f06020"/><circle cx="15" cy="7" r="2" fill="#f0d020"/><circle cx="20" cy="11" r="2" fill="#30a0f0"/><circle cx="7" cy="15" r="2" fill="#e020a0"/><circle cx="13" cy="19" r="2" fill="#f0e020"/></svg>
<svg class="a" style="left:6px;top:716px" width="26" height="26" viewBox="0 0 26 26"><path d="M2 10L13 4L24 10L13 16Z" fill="#2c7ad6" stroke="#0c4a96"/><path d="M2 10V13L13 19L24 13V10" fill="#1a5ab0"/><path d="M8 24L17 15Q16 11 20 10L19 13L21 15L24 13Q24 18 19 18L10 26Z" fill="#f4f4f4" stroke="#777" stroke-width="0.8"/></svg>
<svg class="a" style="left:6px;top:750px" width="26" height="26" viewBox="0 0 26 26"><path d="M3 23V8Q3 4 6 4Q9 4 9 8V18Q9 22 12 22Q15 22 15 18V8Q15 4 18 4Q21 4 21 8V23" fill="none" stroke="#c01818" stroke-width="2.5"/><path d="M8 24L17 15Q16 11 20 10L19 13L21 15L24 13Q24 18 19 18L10 26Z" fill="#f4f4f4" stroke="#777" stroke-width="0.8"/></svg>
<div id="righttb" class="a"></div>
<div class="btnsel" style="left:1738px;top:124px"></div>
<div class="hsep" style="left:1742px;top:161px;width:24px"></div>
<div class="hsep" style="left:1742px;top:238px;width:24px"></div>
<div class="hsep" style="left:1742px;top:383px;width:24px"></div>
<div class="hsep" style="left:1742px;top:528px;width:24px"></div>
<div class="hsep" style="left:1742px;top:605px;width:24px"></div>
<div class="hsep" style="left:1742px;top:648px;width:24px"></div>
<svg class="a" style="left:1741px;top:127px" width="26" height="26" viewBox="0 0 26 26"><ellipse cx="13" cy="22" rx="8" ry="2.5" fill="#7a9a6a" opacity="0.6"/><path d="M6 3L22 12L15 13L19 21L16 22L12 15L7 20Z" fill="#c8c89a" stroke="#555" stroke-width="1"/></svg>
<svg class="a" style="left:1741px;top:170px" width="26" height="26" viewBox="0 0 26 26"><path d="M2 7H24" stroke="#e01818" stroke-width="2.5"/><path d="M6 2V24" stroke="#50d040" stroke-width="2.5"/><path d="M19 2V24" stroke="#888" stroke-width="2"/><circle cx="6" cy="7" r="2" fill="#f0a040" stroke="#333" stroke-width="0.7"/><path d="M9 9L9 21L12 18L15 23L17 22L14 17L18 17Z" fill="#c8c8e8" stroke="#222" stroke-width="0.9"/></svg>
<svg class="a" style="left:1741px;top:204px" width="26" height="26" viewBox="0 0 26 26"><rect x="1" y="1" width="24" height="24" rx="4" fill="#d8dcd8"/><path d="M3 20L14 8M6 22L22 10M14 3L10 24" stroke="#fff" stroke-width="1.6"/><circle cx="10" cy="9" r="2.4" fill="none" stroke="#e01818" stroke-width="1.4"/><path d="M11 10L11 22L14 19L17 24L19 23L16 18L20 18Z" fill="#c8c8e8" stroke="#222" stroke-width="0.9"/></svg>
<svg class="a" style="left:1741px;top:246px" width="26" height="26" viewBox="0 0 26 26"><rect x="1.5" y="6.5" width="23" height="13" fill="#c8c8c8" stroke="#333" stroke-width="1.2" rx="1.5"/><path d="M1.5 11L4 13L1.5 15" fill="none" stroke="#333" stroke-width="1"/><rect x="4" y="1.5" width="5" height="6" fill="#f07c1a" stroke="#8a4000" stroke-width="0.7"/><circle cx="6.5" cy="4.5" r="0.9" fill="#fff"/><rect x="4" y="18.5" width="5" height="6" fill="#f07c1a" stroke="#8a4000" stroke-width="0.7"/><circle cx="6.5" cy="21.5" r="0.9" fill="#fff"/><rect x="10.5" y="1.5" width="5" height="6" fill="#f07c1a" stroke="#8a4000" stroke-width="0.7"/><circle cx="13.0" cy="4.5" r="0.9" fill="#fff"/><rect x="10.5" y="18.5" width="5" height="6" fill="#f07c1a" stroke="#8a4000" stroke-width="0.7"/><circle cx="13.0" cy="21.5" r="0.9" fill="#fff"/><rect x="17" y="1.5" width="5" height="6" fill="#f07c1a" stroke="#8a4000" stroke-width="0.7"/><circle cx="19.5" cy="4.5" r="0.9" fill="#fff"/><rect x="17" y="18.5" width="5" height="6" fill="#f07c1a" stroke="#8a4000" stroke-width="0.7"/><circle cx="19.5" cy="21.5" r="0.9" fill="#fff"/></svg>
<svg class="a" style="left:1741px;top:281px" width="26" height="26" viewBox="0 0 26 26"><path d="M3 6H12L16 19H24" fill="none" stroke="#0a7a0a" stroke-width="3.5"/></svg>
<svg class="a" style="left:1741px;top:315px" width="26" height="26" viewBox="0 0 26 26"><rect x="2" y="2" width="22" height="22" fill="#0a7a0a"/><circle cx="9" cy="10" r="4" fill="none" stroke="#fff" stroke-width="2"/><path d="M12 13L20 21" stroke="#fff" stroke-width="4"/><path d="M12 13L20 21" stroke="#0a7a0a" stroke-width="1.5"/></svg>
<svg class="a" style="left:1741px;top:349px" width="26" height="26" viewBox="0 0 26 26"><rect x="2" y="2" width="22" height="22" fill="#a8c8b8" stroke="#555"/><path d="M2 20Q10 6 24 10" fill="none" stroke="#e01818" stroke-width="2.6"/><path d="M4 4Q12 14 22 24" fill="none" stroke="#e01818" stroke-width="2.6"/><circle cx="8" cy="7" r="3" fill="none" stroke="#9a8a20" stroke-width="2"/></svg>
<svg class="a" style="left:1741px;top:392px" width="26" height="26" viewBox="0 0 26 26"><path d="M3 22L23 6" stroke="#1a3ae8" stroke-width="3" stroke-dasharray="4 3"/></svg>
<svg class="a" style="left:1741px;top:425px" width="26" height="26" viewBox="0 0 26 26"><circle cx="12" cy="14" r="10" fill="none" stroke="#1a3ae8" stroke-width="2"/><rect x="18" y="2" width="5" height="5" fill="#3ab040" stroke="#222" stroke-width="0.5"/><rect x="10" y="12" width="4" height="4" fill="#3ab040"/></svg>
<svg class="a" style="left:1741px;top:460px" width="26" height="26" viewBox="0 0 26 26"><path d="M5 5Q21 5 21 20" fill="none" stroke="#1a3ae8" stroke-width="2.2"/><rect x="2" y="2" width="5" height="5" fill="#3ab040" stroke="#222" stroke-width="0.5"/><rect x="2" y="18" width="5" height="5" fill="#3ab040" stroke="#222" stroke-width="0.5"/><rect x="18" y="18" width="5" height="5" fill="#3ab040" stroke="#222" stroke-width="0.5"/></svg>
<svg class="a" style="left:1741px;top:494px" width="26" height="26" viewBox="0 0 26 26"><text x="4" y="21" font-family="Liberation Serif" font-weight="bold" font-size="22" fill="#111">T</text></svg>
<svg class="a" style="left:1741px;top:538px" width="26" height="26" viewBox="0 0 26 26"><path d="M2 14V24M24 14V24" stroke="#1a3ae8" stroke-width="2"/><path d="M3 19H23M6 16L3 19L6 22M20 16L23 19L20 22" fill="none" stroke="#111" stroke-width="1.5"/><text x="8" y="13" font-family="Liberation Sans" font-weight="bold" font-size="11" fill="#111">N</text></svg>
<svg class="a" style="left:1741px;top:571px" width="26" height="26" viewBox="0 0 26 26"><path d="M13 2V24M2 13H24" stroke="#222" stroke-width="1.5"/><circle cx="13" cy="13" r="7" fill="#222"/><path d="M13 6A7 7 0 0 1 20 13H13ZM13 20A7 7 0 0 1 6 13H13Z" fill="#e8e010"/></svg>
<svg class="a" style="left:1741px;top:614px" width="26" height="26" viewBox="0 0 26 26"><path d="M6 8H20L18 24H8Z" fill="#d8d8d8" stroke="#999"/><ellipse cx="13" cy="8" rx="7" ry="2.5" fill="#eee" stroke="#999"/><path d="M10 10V22M13 10V22M16 10V22" stroke="#aaa"/></svg>
<svg class="a" style="left:1741px;top:657px" width="26" height="26" viewBox="0 0 26 26"><path d="M3 4H23M22 4V24M5 2L2 4L5 6M20 21L22 24L24 21" fill="none" stroke="#111" stroke-width="1.5"/><circle cx="10" cy="15" r="6" fill="#222"/><path d="M10 9A6 6 0 0 1 16 15H10ZM10 21A6 6 0 0 1 4 15H10Z" fill="#e8e010"/></svg>
<svg class="a" style="left:1741px;top:691px" width="26" height="26" viewBox="0 0 26 26"><circle cx="4" cy="4" r="1.3" fill="#111"/><circle cx="4" cy="10" r="1.3" fill="#111"/><circle cx="4" cy="16" r="1.3" fill="#111"/><circle cx="4" cy="22" r="1.3" fill="#111"/><circle cx="10" cy="4" r="1.3" fill="#111"/><circle cx="10" cy="10" r="1.3" fill="#111"/><circle cx="10" cy="16" r="1.3" fill="#111"/><circle cx="10" cy="22" r="1.3" fill="#111"/><circle cx="16" cy="4" r="1.3" fill="#111"/><circle cx="16" cy="10" r="1.3" fill="#111"/><circle cx="16" cy="16" r="1.3" fill="#111"/><circle cx="16" cy="22" r="1.3" fill="#111"/><circle cx="22" cy="4" r="1.3" fill="#111"/><circle cx="22" cy="10" r="1.3" fill="#111"/><circle cx="22" cy="16" r="1.3" fill="#111"/><circle cx="22" cy="22" r="1.3" fill="#111"/><path d="M9 2V24M2 10H24" stroke="#e01818" stroke-width="1"/></svg>
<div id="visibles" class="a"></div>
<div class="a" style="left:1776px;top:118px;width:144px;height:17px;background:linear-gradient(#e2e2e2,#d6d6d6)"></div>
<div class="a" style="left:1781px;top:119px;font-size:10.9px;color:#000">Visibles</div>
<div class="a" style="left:1783px;top:140px;width:131px;height:958px;border:1px solid #a8a8a8;background:#f0f0f0"></div>
<div class="a" style="left:1785px;top:165px;width:128px;height:932px;border-top:1px solid #b8b8b8;background:#f0f0f0"></div>
<div class="a" style="left:1789px;top:145px;width:44px;height:21px;border:1px solid #a0a0a0;border-bottom:none;border-radius:2px 2px 0 0;background:#fafafa"></div>
<div class="a" style="left:1833px;top:146px;width:53px;height:19px;border:1px solid #a8a8a8;border-bottom:none;border-radius:2px 2px 0 0;background:linear-gradient(#f2f2f2,#dedede)"></div>
<div class="a" style="left:1797px;top:149px;font-size:11.1px">Layer</div>
<div class="a" style="left:1841px;top:149px;font-size:11.2px">Render</div>
<div class="a" style="left:1799px;top:171px;width:17px;height:17px;border:1px solid #303030;border-radius:3px;background:#f4f4f4"></div>
<div class="a" style="left:1802px;top:174px;width:11px;height:11px;background:#a00000;border:1px solid #222"></div>
<div class="a" style="left:1818px;top:172px;font-size:11.7px;white-space:nowrap;letter-spacing:-0.2px">F.Cu</div>
<div class="a" style="left:1874px;top:173px;width:13px;height:13px;border:1px solid #8e8f8f;background:linear-gradient(#e8e8e8,#fafafa)"></div>
<svg class="a" style="left:1875px;top:174px" width="11" height="11" viewBox="0 0 11 11"><path d="M2 5.5L4.5 8.5L9 2" fill="none" stroke="#3a4a7a" stroke-width="1.6"/></svg>
<div class="a" style="left:1799px;top:189px;width:17px;height:17px;border:1px solid #303030;border-radius:3px;background:#f4f4f4"></div>
<div class="a" style="left:1802px;top:192px;width:11px;height:11px;background:#00a000;border:1px solid #222"></div>
<div class="a" style="left:1818px;top:190px;font-size:11.7px;white-space:nowrap;letter-spacing:-0.2px">B.Cu</div>
<div class="a" style="left:1874px;top:191px;width:13px;height:13px;border:1px solid #8e8f8f;background:linear-gradient(#e8e8e8,#fafafa)"></div>
<svg class="a" style="left:1875px;top:192px" width="11" height="11" viewBox="0 0 11 11"><path d="M2 5.5L4.5 8.5L9 2" fill="none" stroke="#3a4a7a" stroke-width="1.6"/></svg>
<div class="a" style="left:1799px;top:207px;width:17px;height:17px;border:1px solid #303030;border-radius:3px;background:#f4f4f4"></div>
<div class="a" style="left:1802px;top:210px;width:11px;height:11px;background:#a000a0;border:1px solid #222"></div>
<div class="a" style="left:1818px;top:208px;font-size:11.7px;white-space:nowrap;letter-spacing:-0.2px">F.Adhes</div>
<div class="a" style="left:1874px;top:209px;width:13px;height:13px;border:1px solid #8e8f8f;background:linear-gradient(#e8e8e8,#fafafa)"></div>
<svg class="a" style="left:1875px;top:210px" width="11" height="11" viewBox="0 0 11 11"><path d="M2 5.5L4.5 8.5L9 2" fill="none" stroke="#3a4a7a" stroke-width="1.6"/></svg>
<div class="a" style="left:1799px;top:225px;width:17px;height:17px;border:1px solid #303030;border-radius:3px;background:#f4f4f4"></div>
<div class="a" style="left:1802px;top:228px;width:11px;height:11px;background:#0000a0;border:1px solid #222"></div>
<div class="a" style="left:1818px;top:226px;font-size:11.7px;white-space:nowrap;letter-spacing:-0.2px">B.Adhes</div>
<div class="a" style="left:1874px;top:227px;width:13px;height:13px;border:1px solid #8e8f8f;background:linear-gradient(#e8e8e8,#fafafa)"></div>
<svg class="a" style="left:1875px;top:228px" width="11" height="11" viewBox="0 0 11 11"><path d="M2 5.5L4.5 8.5L9 2" fill="none" stroke="#3a4a7a" stroke-width="1.6"/></svg>
<div class="a" style="left:1799px;top:243px;width:17px;height:17px;border:1px solid #303030;border-radius:3px;background:#f4f4f4"></div>
<div class="a" style="left:1802px;top:246px;width:11px;height:11px;background:#a00000;border:1px solid #222"></div>
<div class="a" style="left:1818px;top:244px;font-size:11.7px;white-space:nowrap;letter-spacing:-0.2px">F.Paste</div>
<div class="a" style="left:1874px;top:245px;width:13px;height:13px;border:1px solid #8e8f8f;background:linear-gradient(#e8e8e8,#fafafa)"></div>
<svg class="a" style="left:1875px;top:246px" width="11" height="11" viewBox="0 0 11 11"><path d="M2 5.5L4.5 8.5L9 2" fill="none" stroke="#3a4a7a" stroke-width="1.6"/></svg>
<div class="a" style="left:1799px;top:261px;width:17px;height:17px;border:1px solid #303030;border-radius:3px;background:#f4f4f4"></div>
<div class="a" style="left:1802px;top:264px;width:11px;height:11px;background:#00f0f0;border:1px solid #222"></div>
<div class="a" style="left:1818px;top:262px;font-size:11.7px;white-space:nowrap;letter-spacing:-0.2px">B.Paste</div>
<div class="a" style="left:1874px;top:263px;width:13px;height:13px;border:1px solid #8e8f8f;background:linear-gradient(#e8e8e8,#fafafa)"></div>
<svg class="a" style="left:1875px;top:264px" width="11" height="11" viewBox="0 0 11 11"><path d="M2 5.5L4.5 8.5L9 2" fill="none" stroke="#3a4a7a" stroke-width="1.6"/></svg>
<div class="a" style="left:1799px;top:279px;width:17px;height:17px;border:1px solid #303030;border-radius:3px;background:#f4f4f4"></div>
<div class="a" style="left:1802px;top:282px;width:11px;height:11px;background:#00a0a0;border:1px solid #222"></div>
<div class="a" style="left:1818px;top:280px;font-size:11.7px;white-space:nowrap;letter-spacing:-0.2px">F.SilkS</div>
<div class="a" style="left:1874px;top:281px;width:13px;height:13px;border:1px solid #8e8f8f;background:linear-gradient(#e8e8e8,#fafafa)"></div>
<svg class="a" style="left:1875px;top:282px" width="11" height="11" viewBox="0 0 11 11"><path d="M2 5.5L4.5 8.5L9 2" fill="none" stroke="#3a4a7a" stroke-width="1.6"/></svg>
<div class="a" style="left:1799px;top:297px;width:17px;height:17px;border:1px solid #303030;border-radius:3px;background:#f4f4f4"></div>
<div class="a" style="left:1802px;top:300px;width:11px;height:11px;background:#a000a0;border:1px solid #222"></div>
<div class="a" style="left:1818px;top:298px;font-size:11.7px;white-space:nowrap;letter-spacing:-0.2px">B.SilkS</div>
<div class="a" style="left:1874px;top:299px;width:13px;height:13px;border:1px solid #8e8f8f;background:linear-gradient(#e8e8e8,#fafafa)"></div>
<svg class="a" style="left:1875px;top:300px" width="11" height="11" viewBox="0 0 11 11"><path d="M2 5.5L4.5 8.5L9 2" fill="none" stroke="#3a4a7a" stroke-width="1.6"/></svg>
<div class="a" style="left:1799px;top:315px;width:17px;height:17px;border:1px solid #303030;border-radius:3px;background:#f4f4f4"></div>
<div class="a" style="left:1802px;top:318px;width:11px;height:11px;background:#a000a0;border:1px solid #222"></div>
<div class="a" style="left:1818px;top:316px;font-size:11.7px;white-space:nowrap;letter-spacing:-0.2px">F.Mask</div>
<div class="a" style="left:1874px;top:317px;width:13px;height:13px;border:1px solid #8e8f8f;background:linear-gradient(#e8e8e8,#fafafa)"></div>
<svg class="a" style="left:1875px;top:318px" width="11" height="11" viewBox="0 0 11 11"><path d="M2 5.5L4.5 8.5L9 2" fill="none" stroke="#3a4a7a" stroke-width="1.6"/></svg>
<div class="a" style="left:1799px;top:333px;width:17px;height:17px;border:1px solid #303030;border-radius:3px;background:#f4f4f4"></div>
<div class="a" style="left:1802px;top:336px;width:11px;height:11px;background:#848400;border:1px solid #222"></div>
<div class="a" style="left:1818px;top:334px;font-size:11.7px;white-space:nowrap;letter-spacing:-0.2px">B.Mask</div>
<div class="a" style="left:1874px;top:335px;width:13px;height:13px;border:1px solid #8e8f8f;background:linear-gradient(#e8e8e8,#fafafa)"></div>
<svg class="a" style="left:1875px;top:336px" width="11" height="11" viewBox="0 0 11 11"><path d="M2 5.5L4.5 8.5L9 2" fill="none" stroke="#3a4a7a" stroke-width="1.6"/></svg>
<div class="a" style="left:1799px;top:351px;width:17px;height:17px;border:1px solid #303030;border-radius:3px;background:#f4f4f4"></div>
<div class="a" style="left:1802px;top:354px;width:11px;height:11px;background:#c2c2c2;border:1px solid #222"></div>
<div class="a" style="left:1818px;top:352px;font-size:11.7px;white-space:nowrap;letter-spacing:-0.2px">Dwgs.User</div>
<div class="a" style="left:1874px;top:353px;width:13px;height:13px;border:1px solid #8e8f8f;background:linear-gradient(#e8e8e8,#fafafa)"></div>
<svg class="a" style="left:1875px;top:354px" width="11" height="11" viewBox="0 0 11 11"><path d="M2 5.5L4.5 8.5L9 2" fill="none" stroke="#3a4a7a" stroke-width="1.6"/></svg>
<div class="a" style="left:1799px;top:369px;width:17px;height:17px;border:1px solid #303030;border-radius:3px;background:#f4f4f4"></div>
<div class="a" style="left:1802px;top:372px;width:11px;height:11px;background:#0000a0;border:1px solid #222"></div>
<div class="a" style="left:1818px;top:370px;font-size:11.7px;white-space:nowrap;letter-spacing:-0.2px">Cmts.User</div>
<div class="a" style="left:1874px;top:371px;width:13px;height:13px;border:1px solid #8e8f8f;background:linear-gradient(#e8e8e8,#fafafa)"></div>
<svg class="a" style="left:1875px;top:372px" width="11" height="11" viewBox="0 0 11 11"><path d="M2 5.5L4.5 8.5L9 2" fill="none" stroke="#3a4a7a" stroke-width="1.6"/></svg>
<div class="a" style="left:1799px;top:387px;width:17px;height:17px;border:1px solid #303030;border-radius:3px;background:#f4f4f4"></div>
<div class="a" style="left:1802px;top:390px;width:11px;height:11px;background:#00a000;border:1px solid #222"></div>
<div class="a" style="left:1818px;top:388px;font-size:11.7px;white-space:nowrap;letter-spacing:-0.2px">Eco1.User</div>
<div class="a" style="left:1874px;top:389px;width:13px;height:13px;border:1px solid #8e8f8f;background:linear-gradient(#e8e8e8,#fafafa)"></div>
<svg class="a" style="left:1875px;top:390px" width="11" height="11" viewBox="0 0 11 11"><path d="M2 5.5L4.5 8.5L9 2" fill="none" stroke="#3a4a7a" stroke-width="1.6"/></svg>
<div class="a" style="left:1799px;top:405px;width:17px;height:17px;border:1px solid #303030;border-radius:3px;background:#f4f4f4"></div>
<div class="a" style="left:1802px;top:408px;width:11px;height:11px;background:#f4f400;border:1px solid #222"></div>
<div class="a" style="left:1818px;top:406px;font-size:11.7px;white-space:nowrap;letter-spacing:-0.2px">Eco2.User</div>
<div class="a" style="left:1874px;top:407px;width:13px;height:13px;border:1px solid #8e8f8f;background:linear-gradient(#e8e8e8,#fafafa)"></div>
<svg class="a" style="left:1875px;top:408px" width="11" height="11" viewBox="0 0 11 11"><path d="M2 5.5L4.5 8.5L9 2" fill="none" stroke="#3a4a7a" stroke-width="1.6"/></svg>
<div class="a" style="left:1799px;top:423px;width:17px;height:17px;border:1px solid #303030;border-radius:3px;background:#f4f4f4"></div>
<div class="a" style="left:1802px;top:426px;width:11px;height:11px;background:#f4f400;border:1px solid #222"></div>
<div class="a" style="left:1818px;top:424px;font-size:11.7px;white-space:nowrap;letter-spacing:-0.2px">Edge.Cuts</div>
<div class="a" style="left:1874px;top:425px;width:13px;height:13px;border:1px solid #8e8f8f;background:linear-gradient(#e8e8e8,#fafafa)"></div>
<svg class="a" style="left:1875px;top:426px" width="11" height="11" viewBox="0 0 11 11"><path d="M2 5.5L4.5 8.5L9 2" fill="none" stroke="#3a4a7a" stroke-width="1.6"/></svg>
<svg class="a" style="left:1788px;top:190px" width="10" height="14" viewBox="0 0 10 14"><path d="M0 0L9 7L0 14Z" fill="#2a2ae8"/></svg>
<div class="a" style="left:1716px;top:120px;width:17px;height:966px;background:linear-gradient(90deg,#e8e8e8,#f4f4f4 40%,#f0f0f0);border-left:1px solid #d8d8d8"></div>
<div class="a" style="left:1717px;top:138px;width:15px;height:528px;border:1px solid #9a9a9a;border-radius:2px;background:linear-gradient(90deg,#f0f0f0,#e0e0e0 50%,#d0d0d0)"></div>
<div class="a" style="left:1721px;top:398px;width:7px;height:7px;border-top:1px solid #777;border-bottom:1px solid #777"></div><div class="a" style="left:1721px;top:401px;width:7px;height:1px;background:#777"></div>
<div class="a" style="left:1720px;top:125px;width:0;height:0;border-left:4px solid transparent;border-right:4px solid transparent;border-bottom:4px solid #444"></div>
<div class="a" style="left:1720px;top:1076px;width:0;height:0;border-left:4px solid transparent;border-right:4px solid transparent;border-top:4px solid #444"></div>
<div class="a" style="left:39px;top:1086px;width:1694px;height:17px;background:linear-gradient(#e8e8e8,#f4f4f4 40%,#f0f0f0);border-top:1px solid #d8d8d8;border-bottom:1px solid #a0a0a0"></div>
<div class="a" style="left:533px;top:1087px;width:1165px;height:15px;border:1px solid #9a9a9a;border-radius:2px;background:linear-gradient(#f0f0f0,#e0e0e0 50%,#d0d0d0)"></div>
<div class="a" style="left:1111px;top:1091px;width:7px;height:7px;border-left:1px solid #777;border-right:1px solid #777"></div><div class="a" style="left:1114px;top:1091px;width:1px;height:7px;background:#777"></div>
<div class="a" style="left:45px;top:1091px;width:0;height:0;border-top:4px solid transparent;border-bottom:4px solid transparent;border-right:4px solid #444"></div>
<div class="a" style="left:1706px;top:1091px;width:0;height:0;border-top:4px solid transparent;border-bottom:4px solid transparent;border-left:4px solid #444"></div>
<div id="msgpanel" class="a"></div>
<div class="a" style="left:12px;top:1107px;font-size:11.9px;color:#083848;white-space:nowrap">Type</div>
<div class="a" style="left:12px;top:1122px;font-size:11.9px;color:#083848;white-space:nowrap">Track</div>
<div class="a" style="left:70px;top:1107px;font-size:11.9px;color:#a80010;white-space:nowrap">NetName</div>
<div class="a" style="left:70px;top:1122px;font-size:11.9px;color:#a80010;white-space:nowrap">N-00000117</div>
<div class="a" style="left:161px;top:1107px;font-size:11.9px;color:#a80010;white-space:nowrap">NetCode</div>
<div class="a" style="left:161px;top:1122px;font-size:11.9px;color:#a80010;white-space:nowrap">73 .1</div>
<div class="a" style="left:237px;top:1107px;font-size:11.9px;color:#b000b0;white-space:nowrap">Status</div>
<div class="a" style="left:237px;top:1122px;font-size:11.9px;color:#b000b0;white-space:nowrap">. .</div>
<div class="a" style="left:298px;top:1107px;font-size:11.9px;color:#8a8a00;white-space:nowrap">Layer</div>
<div class="a" style="left:298px;top:1122px;font-size:11.9px;color:#8a8a00;white-space:nowrap">B.Cu</div>
<div class="a" style="left:355px;top:1107px;font-size:11.9px;color:#083848;white-space:nowrap">Width</div>
<div class="a" style="left:355px;top:1122px;font-size:11.9px;color:#083848;white-space:nowrap">1,000 mm</div>
<div class="a" style="left:436px;top:1107px;font-size:11.9px;color:#083848;white-space:nowrap">Segment Length</div>
<div class="a" style="left:436px;top:1122px;font-size:11.9px;color:#083848;white-space:nowrap">5,080 mm</div>
<div class="a" style="left:552px;top:1107px;font-size:11.9px;color:#083848;white-space:nowrap">Track Len</div>
<div class="a" style="left:552px;top:1122px;font-size:11.9px;color:#083848;white-space:nowrap">5,080 mm</div>
<div class="a" style="left:632px;top:1107px;font-size:11.9px;color:#4a0848;white-space:nowrap">NC Name</div>
<div class="a" style="left:632px;top:1122px;font-size:11.9px;color:#4a0848;white-space:nowrap">Default</div>
<div class="a" style="left:699px;top:1107px;font-size:11.9px;color:#4a0848;white-space:nowrap">NC Clearance</div>
<div class="a" style="left:699px;top:1122px;font-size:11.9px;color:#4a0848;white-space:nowrap">0,254 mm</div>
<div class="a" style="left:800px;top:1107px;font-size:11.9px;color:#4a0848;white-space:nowrap">NC Width</div>
<div class="a" style="left:800px;top:1122px;font-size:11.9px;color:#4a0848;white-space:nowrap">0,254 mm</div>
<div class="a" style="left:881px;top:1107px;font-size:11.9px;color:#4a0848;white-space:nowrap">NC Via Size</div>
<div class="a" style="left:881px;top:1122px;font-size:11.9px;color:#4a0848;white-space:nowrap">0,889 mm</div>
<div class="a" style="left:969px;top:1107px;font-size:11.9px;color:#4a0848;white-space:nowrap">NC Via Drill</div>
<div class="a" style="left:969px;top:1122px;font-size:11.9px;color:#4a0848;white-space:nowrap">0,635 mm</div>
<div id="status" class="a"></div>
<div class="a" style="left:1227px;top:1140px;width:1px;height:20px;background:#c8c4c0"></div>
<div class="a" style="left:1294px;top:1140px;width:1px;height:20px;background:#c8c4c0"></div>
<div class="a" style="left:1466px;top:1140px;width:1px;height:20px;background:#c8c4c0"></div>
<div class="a" style="left:1233px;top:1143px;font-size:12px">Z 127000</div>
<div class="a" style="left:1299px;top:1143px;font-size:11.3px;white-space:nowrap;letter-spacing:-0.35px">X 205,740000&nbsp; Y 38,100000</div>
<div class="a" style="left:1471px;top:1143px;font-size:12px">dx</div>
<div class="a" style="left:992px;top:439px;width:439px;height:100px;background:#f0f0f0;border:1px solid #979797;box-shadow:2px 2px 2px rgba(0,0,0,0.35)"></div>
<div class="a" style="left:1030px;top:442px;width:1px;height:94px;background:#e2e3e3;border-right:1px solid #fff"></div>
<div class="a" style="left:1032px;top:468px;width:395px;height:1px;background:#e2e3e3;border-bottom:1px solid #fff"></div>
<div class="a" style="left:1036px;top:446px;font-size:12px;font-weight:bold;font-style:italic;color:#000;white-space:nowrap">Selection Clarification</div>
<div class="a" style="left:994px;top:472px;width:433px;height:31px;border:1px solid #a8d8f8;border-radius:3px;background:linear-gradient(#f2f8fd,#e4effb)"></div>
<div class="a" style="left:1036px;top:481px;font-size:11.6px;color:#000;white-space:nowrap">Track 1,000 mm [N-00000117] on B.Cu&nbsp; Net:73&nbsp; Length:5,080 mm</div>
<div class="a" style="left:1036px;top:513px;font-size:11.6px;color:#000;white-space:nowrap">Footprint S311 (F.Cu)</div>
<svg class="a" style="left:998px;top:476px" width="24" height="24" viewBox="0 0 24 24"><path d="M16 2V22M20.5 2V22" stroke="#1a8a1a" stroke-width="1.8"/><path d="M1 4H7L13 14H23M1 8H5L11 18H23" fill="none" stroke="#d82828" stroke-width="1.8"/></svg>
<svg class="a" style="left:997px;top:507px" width="26" height="26" viewBox="0 0 26 26"><rect x="1.5" y="6.5" width="23" height="13" fill="#c8c8c8" stroke="#333" stroke-width="1.2" rx="1.5"/><path d="M1.5 11L4 13L1.5 15" fill="none" stroke="#333" stroke-width="1"/><rect x="4" y="1.5" width="5" height="6" fill="#f07c1a" stroke="#8a4000" stroke-width="0.7"/><circle cx="6.5" cy="4.5" r="0.9" fill="#fff"/><rect x="4" y="18.5" width="5" height="6" fill="#f07c1a" stroke="#8a4000" stroke-width="0.7"/><circle cx="6.5" cy="21.5" r="0.9" fill="#fff"/><rect x="10.5" y="1.5" width="5" height="6" fill="#f07c1a" stroke="#8a4000" stroke-width="0.7"/><circle cx="13.0" cy="4.5" r="0.9" fill="#fff"/><rect x="10.5" y="18.5" width="5" height="6" fill="#f07c1a" stroke="#8a4000" stroke-width="0.7"/><circle cx="13.0" cy="21.5" r="0.9" fill="#fff"/><rect x="17" y="1.5" width="5" height="6" fill="#f07c1a" stroke="#8a4000" stroke-width="0.7"/><circle cx="19.5" cy="4.5" r="0.9" fill="#fff"/><rect x="17" y="18.5" width="5" height="6" fill="#f07c1a" stroke="#8a4000" stroke-width="0.7"/><circle cx="19.5" cy="21.5" r="0.9" fill="#fff"/></svg>
<div id="taskbar" class="a"></div>
<div class="a" style="left:0;top:1161px;width:1920px;height:39px;background:radial-gradient(ellipse 120px 20px at 820px 15px,rgba(140,175,200,0.35),transparent),radial-gradient(ellipse 150px 18px at 1050px 25px,rgba(120,160,190,0.3),transparent),radial-gradient(ellipse 100px 20px at 660px 25px,rgba(30,50,65,0.4),transparent),radial-gradient(ellipse 120px 20px at 1250px 20px,rgba(30,45,60,0.35),transparent)"></div>
<div class="tbtn" style="left:246px;top:1162px;width:57px;height:37px"></div>
<div class="tbtn" style="left:370px;top:1162px;width:58px;height:37px"></div>
<div class="tbtn" style="left:432px;top:1162px;width:57px;height:37px"></div>
<div class="tbtn" style="left:494px;top:1162px;width:57px;height:37px"></div>
<div class="a" style="left:8px;top:1162px;width:37px;height:37px;border-radius:50%;background:radial-gradient(circle at 50% 35%,#bfe4f8 0%,#3a8ac8 35%,#103a70 75%,#0a1a30 100%);border:1px solid #0a1420"></div>
<svg class="a" style="left:15px;top:1170px" width="24" height="22" viewBox="0 0 24 22"><path d="M2 4Q6 2 11 4V10Q6 8 2 10Z" fill="#f04a20"/><path d="M12 4Q16 6 21 4V10Q16 12 12 10Z" fill="#7ac030"/><path d="M2 11Q6 9 11 11V17Q6 15 2 17Z" fill="#2a9ae8"/><path d="M12 11Q16 13 21 11V17Q16 19 12 17Z" fill="#f8c020"/></svg>
<svg class="a" style="left:73px;top:1164px" width="34" height="32" viewBox="0 0 34 32"><text x="5" y="26" font-family="Liberation Sans" font-weight="bold" font-size="30" fill="#2aa0f0" stroke="#0a60b0" stroke-width="0.8">e</text><path d="M3 26Q10 4 31 6Q26 2 20 4" fill="none" stroke="#f8c020" stroke-width="2.2"/></svg>
<svg class="a" style="left:134px;top:1166px" width="34" height="30" viewBox="0 0 34 30"><path d="M2 4H12L14 7H32V28H2Z" fill="#f0d890" stroke="#b89040"/><rect x="6" y="3" width="5" height="3" fill="#30b040"/><rect x="19" y="5" width="5" height="3" fill="#3080e0"/><path d="M2 10H32V28H2Z" fill="#f8e8b0"/><path d="M8 18H26V28H22V22H12V28H8Z" fill="#90c0e8" stroke="#5080b0"/></svg>
<svg class="a" style="left:197px;top:1165px" width="30" height="30" viewBox="0 0 30 30"><rect x="6" y="3" width="22" height="24" fill="#6090c8" stroke="#3060a0"/><rect x="3" y="5" width="22" height="24" fill="#80b0e0" stroke="#3060a0"/><circle cx="14" cy="17" r="9" fill="#f07a20" stroke="#fff" stroke-width="1.5"/><path d="M11 12L19 17L11 22Z" fill="#fff"/></svg>
<svg class="a" style="left:257px;top:1164px" width="34" height="34" viewBox="0 0 34 34"><circle cx="17" cy="17" r="14" fill="#2a60b0"/><path d="M4 17A13 13 0 0 0 30 19Q28 8 18 6Q24 12 20 18Q14 24 9 18Q6 13 10 9Q4 12 4 17Z" fill="#f07818"/><path d="M6 22Q10 30 20 30Q28 28 30 19Q26 26 18 26Q10 25 6 22Z" fill="#e05010"/></svg>
<svg class="a" style="left:320px;top:1164px" width="34" height="34" viewBox="0 0 34 34"><circle cx="17" cy="17" r="14" fill="#10a8e8"/><circle cx="8" cy="8" r="6" fill="#10a8e8"/><circle cx="26" cy="26" r="6" fill="#10a8e8"/><text x="9" y="26" font-family="Liberation Sans" font-weight="bold" font-size="22" fill="#fff">S</text></svg>
<svg class="a" style="left:382px;top:1164px" width="34" height="34" viewBox="0 0 34 34"><circle cx="17" cy="17" r="14" fill="#10a8e8"/><circle cx="8" cy="8" r="6" fill="#10a8e8"/><circle cx="26" cy="26" r="6" fill="#10a8e8"/><text x="9" y="26" font-family="Liberation Sans" font-weight="bold" font-size="22" fill="#fff">S</text></svg>
<svg class="a" style="left:446px;top:1165px" width="30" height="32" viewBox="0 0 30 32"><path d="M3 2H22L28 8V30H3Z" fill="#f8f0d0" stroke="#c8a020" stroke-width="2"/><path d="M22 2L28 2L28 8Z" fill="#c8a020"/><path d="M10 6V14M6 14H14M10 14L10 22L16 26M10 22L18 18M18 18H24M16 26V30" fill="none" stroke="#c04020" stroke-width="1.6"/><rect x="18" y="22" width="7" height="4" fill="none" stroke="#c04020"/></svg>
<svg class="a" style="left:507px;top:1165px" width="32" height="32" viewBox="0 0 32 32"><path d="M3 2H22L28 8V30H3Z" fill="#f4f4f4" stroke="#888" stroke-width="1.2"/><path d="M8 5V28M12 5V16L16 20V28M16 5V14M20 5V14L24 18V28" fill="none" stroke="#999" stroke-width="1.5"/><path d="M14 28L26 12L29 14L17 30Z" fill="#555" stroke="#222" stroke-width="0.6"/><path d="M26 12L28 9L31 11L29 14Z" fill="#e040c0"/></svg>
<div class="a" style="left:1622px;top:1170px;font-size:12px;color:#fff">PL</div>
<div class="a" style="left:1645px;top:1175px;width:14px;height:9px;border:1px solid #ccc;border-radius:1px;background:repeating-linear-gradient(90deg,#888 0 2px,#ddd 2px 3px)"></div>
<svg class="a" style="left:1664px;top:1169px" width="18" height="18" viewBox="0 0 18 18"><circle cx="9" cy="9" r="8" fill="#2a50d0" stroke="#fff" stroke-width="1.2"/><text x="5" y="14" font-family="Liberation Sans" font-weight="bold" font-size="12" fill="#fff">?</text></svg>
<svg class="a" style="left:1688px;top:1168px" width="12" height="20" viewBox="0 0 12 20"><rect x="3" y="1" width="6" height="5" fill="none" stroke="#ddd"/><rect x="1" y="3" width="6" height="5" fill="none" stroke="#ddd"/><path d="M3 14L9 14L6 18Z" fill="#ddd"/></svg>
<div class="a" style="left:1709px;top:1178px;width:0;height:0;border-left:4px solid transparent;border-right:4px solid transparent;border-bottom:5px solid #e8e8e8"></div>
<svg class="a" style="left:1730px;top:1170px" width="16" height="16" viewBox="0 0 16 16"><path d="M2 1V15" stroke="#eee" stroke-width="1.5"/><path d="M3 2H12L10 5L13 8H3Z" fill="#eee"/></svg>
<svg class="a" style="left:1753px;top:1170px" width="18" height="16" viewBox="0 0 18 16"><path d="M1 5H4L9 1V15L4 11H1Z" fill="#eee"/><path d="M11 4Q13 8 11 12M13 2Q16 8 13 14" fill="none" stroke="#eee" stroke-width="1.2"/></svg>
<svg class="a" style="left:1776px;top:1169px" width="18" height="18" viewBox="0 0 18 18"><rect x="5" y="4" width="11" height="8" fill="none" stroke="#eee" stroke-width="1.5"/><path d="M2 1V10M8 14H14" stroke="#eee" stroke-width="1.5"/></svg>
<svg class="a" style="left:1800px;top:1169px" width="20" height="18" viewBox="0 0 20 18"><path d="M2 4L6 1L10 4L6 7ZM10 4L14 1L18 4L14 7ZM2 10L6 7L10 10L6 13ZM10 10L14 7L18 10L14 13Z" fill="#3a90e8"/><circle cx="15" cy="13" r="4" fill="#3a90e8" stroke="#fff"/></svg>
<div class="a" style="left:1849px;top:1166px;font-size:12px;color:#fff;text-align:center;width:34px">20:27</div>
<div class="a" style="left:1834px;top:1183px;font-size:12px;color:#fff;white-space:nowrap">2014-01-17</div>
<div class="a" style="left:1907px;top:1162px;width:12px;height:37px;border:1px solid #4a5a68;background:linear-gradient(90deg,#2a3440,#1a2028)"></div>
<svg class="a" style="left:1480px;top:1106px" width="346" height="74" viewBox="0 0 346 74"><defs><linearGradient id="bg" x1="0" y1="0" x2="0" y2="1"><stop offset="0" stop-color="#ffffff"/><stop offset="1" stop-color="#e6e8f2"/></linearGradient></defs><path d="M8 1.5H336Q344.5 1.5 344.5 10V46Q344.5 54.5 336 54.5H335L330 71L315 54.5H8Q1.5 54.5 1.5 46V10Q1.5 1.5 8 1.5Z" fill="url(#bg)" stroke="#3c3c3c" stroke-width="1.2"/></svg>
<svg class="a" style="left:1492px;top:1118px" width="18" height="17" viewBox="0 0 18 17"><path d="M1 4L5 1L9 4L5 7ZM9 4L13 1L17 4L13 7ZM1 10L5 7L9 10L5 13ZM9 10L13 7L17 10L13 13ZM5 14L9 11L13 14L9 17Z" fill="#3a8ae0"/></svg>
<div class="a" style="left:1514px;top:1117px;font-size:15.4px;color:#1a5ac0;white-space:nowrap">Dodano zrzut ekranu</div>
<div class="a" style="left:1514px;top:1139px;font-size:11.9px;color:#000;white-space:nowrap">Do Twojego folderu Dropbox został dodany zrzut ekranu.</div>
<svg class="a" style="left:1782px;top:1117px" width="12" height="12" viewBox="0 0 12 12"><path d="M2 10L7 5M6 2L10 6" stroke="#888" stroke-width="2.4"/></svg>
<svg class="a" style="left:1801px;top:1118px" width="10" height="10" viewBox="0 0 10 10"><path d="M1 1L9 9M9 1L1 9" stroke="#777" stroke-width="1.8"/></svg>
</body></html>
